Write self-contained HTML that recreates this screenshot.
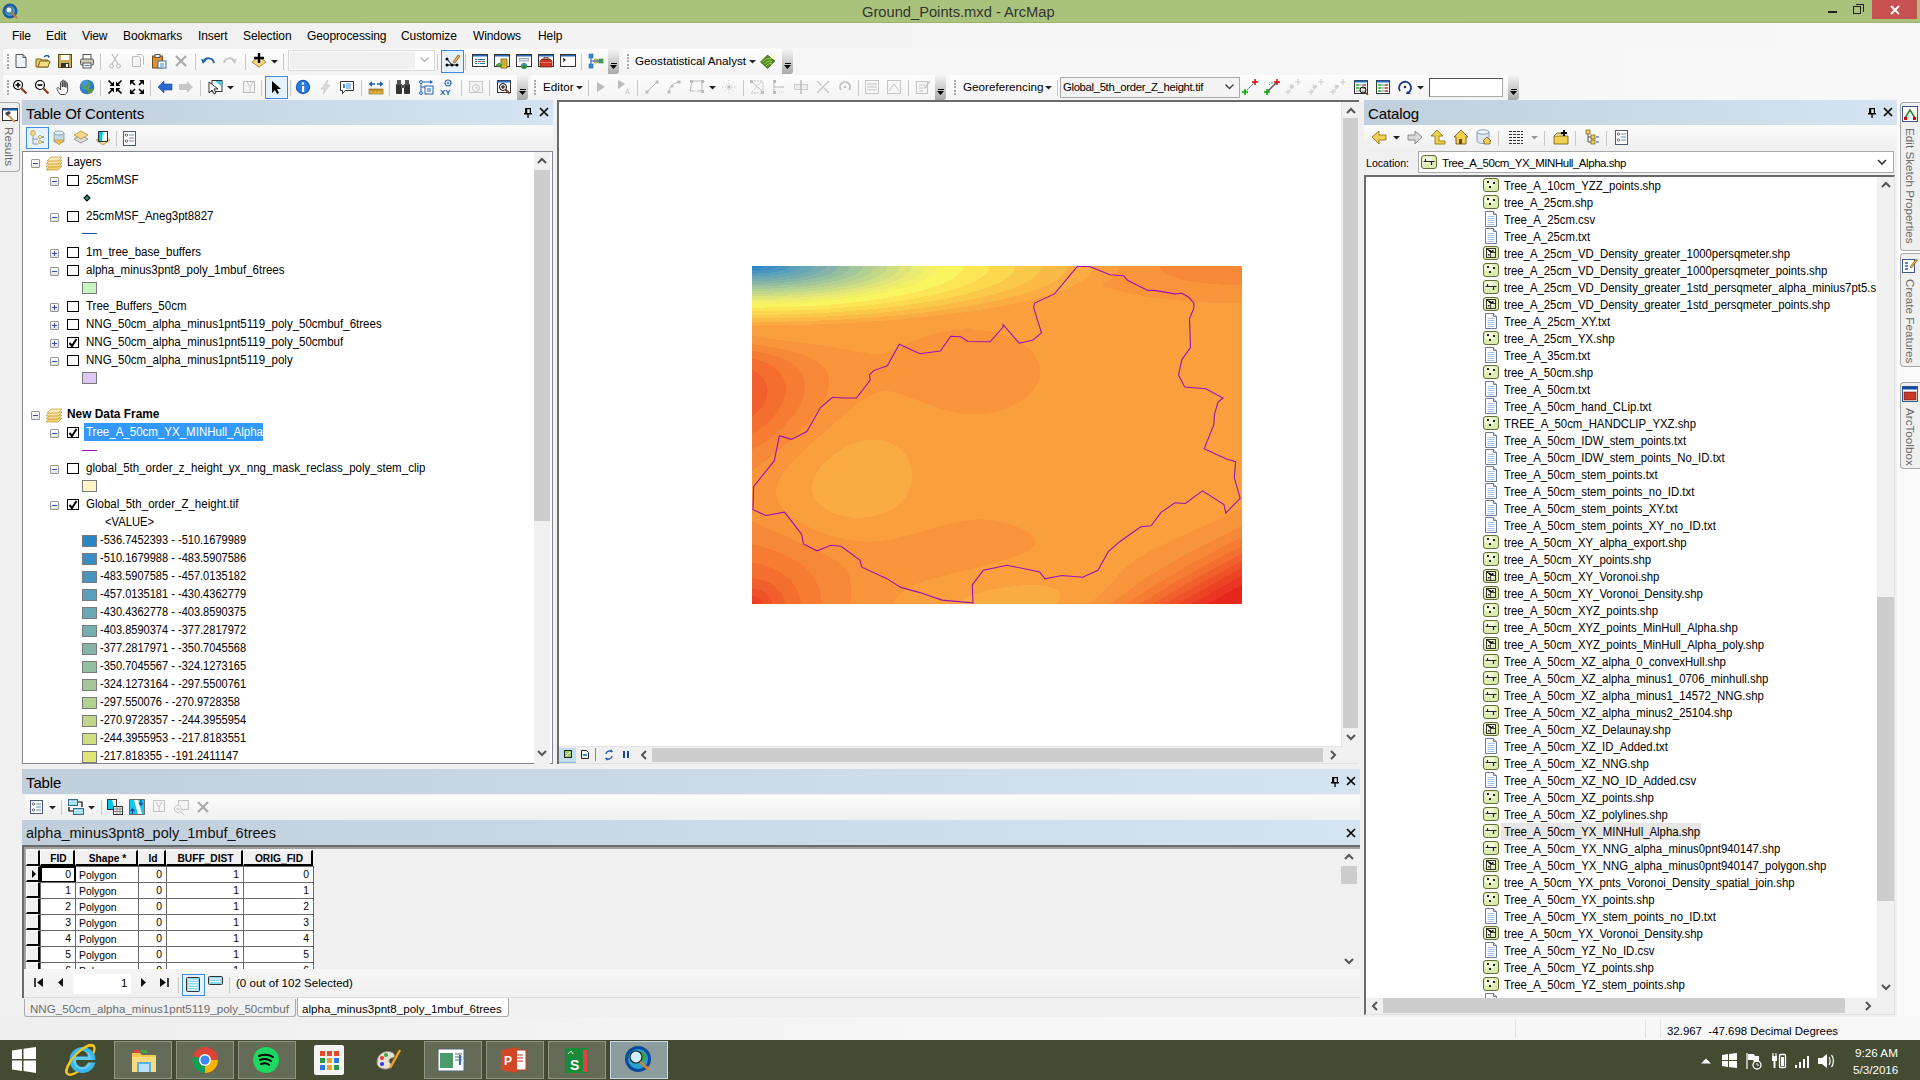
<!DOCTYPE html><html><head><meta charset="utf-8"><style>

*{margin:0;padding:0;box-sizing:border-box}
html,body{width:1920px;height:1080px;overflow:hidden;background:#f0f0f0;font-family:"Liberation Sans", sans-serif;position:relative}
div{position:absolute}
.t{white-space:pre;line-height:1;}

</style></head><body>
<div style="left:0px;top:0px;width:1920px;height:23px;background:#aac37c;border-bottom:1px solid #9db46f"></div>
<div class="t" style="left:862px;top:5px;font-size:14.7px;color:#333;">Ground_Points.mxd - ArcMap</div>
<div style="left:1828px;top:11px;width:9px;height:2px;background:#222"></div>
<div style="left:1853px;top:6px;width:8px;height:8px;border:1.5px solid #222"></div>
<div style="left:1856px;top:4px;width:8px;height:8px;border-top:1.5px solid #222;border-right:1.5px solid #222"></div>
<div style="left:1872px;top:0px;width:45px;height:19px;background:#c75050"></div>
<svg style="position:absolute;left:1890px;top:5px" width="10" height="10"><path d="M1 1L9 9M9 1L1 9" stroke="#fff" stroke-width="1.8"/></svg>
<svg style="position:absolute;left:2px;top:3px" width="17" height="17"><circle cx="8" cy="8" r="7.5" fill="#1a5ea0"/><circle cx="8" cy="8" r="5" fill="#3ea0c8"/><circle cx="7" cy="7" r="3.2" fill="#d9f0fb" stroke="#333" stroke-width="0.8"/><path d="M9.5 9.5L15 15" stroke="#c9713a" stroke-width="2"/></svg>
<div style="left:0px;top:23px;width:1920px;height:25px;background:linear-gradient(90deg,#efefef,#f4f4f4 40%,#f8f8f8)"></div>
<div class="t" style="left:12px;top:29.6px;font-size:12px;color:#000;letter-spacing:-0.1px">File</div>
<div class="t" style="left:46px;top:29.6px;font-size:12px;color:#000;letter-spacing:-0.1px">Edit</div>
<div class="t" style="left:82px;top:29.6px;font-size:12px;color:#000;letter-spacing:-0.1px">View</div>
<div class="t" style="left:123px;top:29.6px;font-size:12px;color:#000;letter-spacing:-0.1px">Bookmarks</div>
<div class="t" style="left:198px;top:29.6px;font-size:12px;color:#000;letter-spacing:-0.1px">Insert</div>
<div class="t" style="left:243px;top:29.6px;font-size:12px;color:#000;letter-spacing:-0.1px">Selection</div>
<div class="t" style="left:307px;top:29.6px;font-size:12px;color:#000;letter-spacing:-0.1px">Geoprocessing</div>
<div class="t" style="left:401px;top:29.6px;font-size:12px;color:#000;letter-spacing:-0.1px">Customize</div>
<div class="t" style="left:473px;top:29.6px;font-size:12px;color:#000;letter-spacing:-0.1px">Windows</div>
<div class="t" style="left:538px;top:29.6px;font-size:12px;color:#000;letter-spacing:-0.1px">Help</div>
<div style="left:0px;top:48px;width:1920px;height:53px;background:linear-gradient(90deg,#eeeeee,#f6f6f6 40%,#f8f8f8)"></div>
<div style="left:3px;top:49px;width:605px;height:25px;background:linear-gradient(#fdfdfd,#f3f3f3);border-radius:3px 0 0 3px"></div>
<div style="left:7px;top:54.0px;width:2px;height:2px;background:#a8a8a8"></div>
<div style="left:7px;top:57.2px;width:2px;height:2px;background:#a8a8a8"></div>
<div style="left:7px;top:60.4px;width:2px;height:2px;background:#a8a8a8"></div>
<div style="left:7px;top:63.6px;width:2px;height:2px;background:#a8a8a8"></div>
<div style="left:7px;top:66.8px;width:2px;height:2px;background:#a8a8a8"></div>
<div style="left:608px;top:49px;width:11px;height:25px;background:linear-gradient(#f4f4f4,#cfcfcf 50%,#a9a9a9);border-radius:0 3px 3px 0"></div>
<div style="left:611px;top:63px;width:6px;height:1px;background:#000"></div>
<svg style="position:absolute;left:610px;top:65px" width="7" height="5"><path d="M0 0h7l-3.5 4z" fill="#000"/></svg>
<svg style="position:absolute;left:13px;top:53px" width="16" height="16" viewBox="0 0 16 16"><path d="M3 1.5h7l3 3v10H3z" fill="#eef4fb" stroke="#555"/><path d="M10 1.5v3h3" fill="none" stroke="#555"/></svg>
<svg style="position:absolute;left:35px;top:53px" width="16" height="16" viewBox="0 0 16 16"><path d="M1 6h5l1 1h6v7H1z" fill="#e8c95a" stroke="#7a6320"/><path d="M3 14l2-6h10l-2 6z" fill="#f3dc84" stroke="#7a6320"/><path d="M9 4c2-2 4-2 5 0" stroke="#1f5fb0" stroke-width="1.5" fill="none"/><path d="M13 2l2 2-2 1z" fill="#1f5fb0"/></svg>
<svg style="position:absolute;left:57px;top:53px" width="16" height="16" viewBox="0 0 16 16"><rect x="1.5" y="1.5" width="13" height="13" fill="#c9ae55" stroke="#5e4d18"/><rect x="4" y="2" width="8" height="5" fill="#fff"/><rect x="4" y="10" width="8" height="4.5" fill="#333"/><rect x="9" y="11" width="2" height="3" fill="#fff"/></svg>
<svg style="position:absolute;left:79px;top:53px" width="16" height="16" viewBox="0 0 16 16"><rect x="4" y="1.5" width="8" height="5" fill="#fff" stroke="#555"/><rect x="1.5" y="6" width="13" height="6" rx="1.5" fill="#cfcab2" stroke="#555"/><rect x="4" y="10" width="8" height="5" fill="#fff" stroke="#555"/><path d="M5.5 12.5h5" stroke="#3a8ad6"/></svg>
<svg style="position:absolute;left:107px;top:53px" width="16" height="16" viewBox="0 0 16 16"><path d="M5 1l6 10M11 1L5 11" stroke="#bbb" stroke-width="1.2"/><circle cx="4.5" cy="13" r="2" fill="none" stroke="#bbb"/><circle cx="11.5" cy="13" r="2" fill="none" stroke="#bbb"/></svg>
<svg style="position:absolute;left:130px;top:53px" width="16" height="16" viewBox="0 0 16 16"><path d="M2.5 3.5h6l2 2v8h-8z" fill="#f4f4f4" stroke="#bbb"/><path d="M6.5 1.5h5l2 2v8" fill="none" stroke="#bbb"/></svg>
<svg style="position:absolute;left:151px;top:53px" width="16" height="16" viewBox="0 0 16 16"><rect x="1.5" y="3" width="10" height="12" fill="#d8903a" stroke="#7a4a10"/><rect x="4" y="1.5" width="5" height="3" fill="#eee" stroke="#555"/><rect x="7" y="8" width="8" height="7" fill="#fff" stroke="#3a6aa0"/><path d="M9 11h4M9 13h4" stroke="#3a8ad6"/></svg>
<svg style="position:absolute;left:173px;top:53px" width="16" height="16" viewBox="0 0 16 16"><path d="M3 3l10 10M13 3L3 13" stroke="#aaa" stroke-width="2.2"/></svg>
<svg style="position:absolute;left:200px;top:53px" width="16" height="16" viewBox="0 0 16 16"><path d="M4 9c1-5 9-5 10 1" stroke="#1f5fb0" stroke-width="2" fill="none"/><path d="M1 6l5 1-3 4z" fill="#1f5fb0"/></svg>
<svg style="position:absolute;left:222px;top:53px" width="16" height="16" viewBox="0 0 16 16"><path d="M12 9c-1-5-9-5-10 1" stroke="#c8c8c8" stroke-width="2" fill="none"/><path d="M15 6l-5 1 3 4z" fill="#c8c8c8"/></svg>
<svg style="position:absolute;left:251px;top:53px" width="16" height="16" viewBox="0 0 16 16"><path d="M8 4l7 5-7 5-7-5z" fill="#f5d889" stroke="#b08a2a"/><path d="M8 0v10M3 5h10" stroke="#000" stroke-width="2.4"/></svg>
<svg style="position:absolute;left:271px;top:60px" width="7" height="4"><path d="M0 0h7l-3.5 3.5z" fill="#222"/></svg>
<div style="left:100px;top:54px;width:1px;height:16px;background:#c8c8c8"></div>
<div style="left:195px;top:54px;width:1px;height:16px;background:#c8c8c8"></div>
<div style="left:245px;top:54px;width:1px;height:16px;background:#c8c8c8"></div>
<div style="left:283px;top:54px;width:1px;height:16px;background:#c8c8c8"></div>
<div style="left:437px;top:54px;width:1px;height:16px;background:#c8c8c8"></div>
<div style="left:465px;top:54px;width:1px;height:16px;background:#c8c8c8"></div>
<div style="left:581px;top:54px;width:1px;height:16px;background:#c8c8c8"></div>
<div style="left:288px;top:50px;width:147px;height:21px;background:#fff;border:1px solid #d8d8d8"></div>
<div style="left:290px;top:52px;width:125px;height:17px;background:#f0f0f0"></div>
<svg style="position:absolute;left:420px;top:57px" width="9" height="6"><path d="M0.5 0.5l4 4 4-4" stroke="#aaa" fill="none" stroke-width="1.2"/></svg>
<div style="left:441px;top:50px;width:23px;height:23px;background:#e5f1fb;border:1px solid #3c8de0"></div>
<svg style="position:absolute;left:444px;top:53px" width="16" height="16" viewBox="0 0 16 16"><circle cx="3" cy="12" r="1.5" fill="#000"/><circle cx="8" cy="12" r="1.5" fill="#000"/><circle cx="13" cy="12" r="1.5" fill="#000"/><circle cx="3" cy="6" r="1.5" fill="#000"/><path d="M3 6l5 6M3 12h10" stroke="#000"/><path d="M9 9l5-7 2 1-5 7z" fill="#f0b030" stroke="#7a4a10" stroke-width=".7"/></svg>
<svg style="position:absolute;left:472px;top:53px" width="16" height="16" viewBox="0 0 16 16"><rect x="0.5" y="1.5" width="15" height="12" fill="#fff" stroke="#333"/><rect x="1" y="2" width="14" height="1.5" fill="#2a6ac0"/><path d="M3 6.5h2M3 8.5h2M3 10.5h2" stroke="#2a6ac0"/><path d="M6 6.5h7M8 10.5h5" stroke="#2a6ac0"/><path d="M6 8.5h3" stroke="#e03030"/><path d="M10 8.5h3M6 10.5h1" stroke="#3aa03a"/></svg>
<svg style="position:absolute;left:494px;top:53px" width="16" height="16" viewBox="0 0 16 16"><rect x="0.5" y="1.5" width="15" height="12" fill="#fff" stroke="#333"/><rect x="1" y="2" width="14" height="1.5" fill="#2a6ac0"/><path d="M7 6h6v9H7z" fill="#e8c838" stroke="#6a5a10" stroke-width=".8"/><path d="M8 8h4M8 10h4M8 12h4" stroke="#8a7a20" stroke-width=".6"/><path d="M2 12l3-2 3 2-3 2z" fill="#5ab03a" stroke="#2a6a1a" stroke-width=".6"/></svg>
<svg style="position:absolute;left:516px;top:53px" width="16" height="16" viewBox="0 0 16 16"><rect x="0.5" y="1.5" width="15" height="12" fill="#fff" stroke="#333"/><rect x="1" y="2" width="14" height="1.5" fill="#2a6ac0"/><rect x="3.5" y="5.5" width="9" height="2.5" fill="#dde6f0" stroke="#8a9ab0" stroke-width=".8"/><circle cx="8" cy="13" r="3" fill="#2a8a3a"/><path d="M6 12c1-1 3-1 4 1" stroke="#3a9ae0" stroke-width="1.2" fill="none"/></svg>
<svg style="position:absolute;left:538px;top:53px" width="16" height="16" viewBox="0 0 16 16"><rect x="0.5" y="1.5" width="15" height="12" fill="#fff" stroke="#333"/><rect x="1" y="2" width="14" height="1.5" fill="#2a6ac0"/><path d="M2 8l2-2h8l2 2v6H2z" fill="#c8382a" stroke="#6a1a10" stroke-width=".7"/><path d="M2 9.5h12" stroke="#e87a6a" stroke-width=".8"/><rect x="6" y="4.5" width="4" height="2" fill="none" stroke="#6a1a10" stroke-width=".7"/></svg>
<svg style="position:absolute;left:560px;top:53px" width="16" height="16" viewBox="0 0 16 16"><rect x="0.5" y="1.5" width="15" height="12" fill="#fff" stroke="#333"/><rect x="1" y="2" width="14" height="1.5" fill="#2a6ac0"/><path d="M3 5.5l2 1.5-2 1.5" stroke="#000" fill="none" stroke-width="1.1"/></svg>
<svg style="position:absolute;left:588px;top:53px" width="16" height="16" viewBox="0 0 16 16"><rect x="1" y="1" width="4" height="4" fill="#3a8ad6" stroke="#1f5fb0" stroke-width=".6"/><rect x="1" y="11" width="4" height="4" fill="#3a8ad6" stroke="#1f5fb0" stroke-width=".6"/><circle cx="8" cy="8" r="2" fill="#f0d050" stroke="#7a6320" stroke-width=".6"/><rect x="11" y="6" width="4" height="4" fill="#5aba4a" stroke="#2a6a1a" stroke-width=".6"/><path d="M3 5v6M3 8h11" stroke="#1f5fb0"/></svg>
<div style="left:623px;top:49px;width:159px;height:25px;background:linear-gradient(#fdfdfd,#f3f3f3);border-radius:3px 0 0 3px"></div>
<div style="left:627px;top:54.0px;width:2px;height:2px;background:#a8a8a8"></div>
<div style="left:627px;top:57.2px;width:2px;height:2px;background:#a8a8a8"></div>
<div style="left:627px;top:60.4px;width:2px;height:2px;background:#a8a8a8"></div>
<div style="left:627px;top:63.6px;width:2px;height:2px;background:#a8a8a8"></div>
<div style="left:627px;top:66.8px;width:2px;height:2px;background:#a8a8a8"></div>
<div style="left:782px;top:49px;width:11px;height:25px;background:linear-gradient(#f4f4f4,#cfcfcf 50%,#a9a9a9);border-radius:0 3px 3px 0"></div>
<div style="left:785px;top:63px;width:6px;height:1px;background:#000"></div>
<svg style="position:absolute;left:784px;top:65px" width="7" height="5"><path d="M0 0h7l-3.5 4z" fill="#000"/></svg>
<div class="t" style="left:635px;top:55px;font-size:11.7px;color:#000;">Geostatistical Analyst</div>
<svg style="position:absolute;left:749px;top:60px" width="7" height="4"><path d="M0 0h7l-3.5 3.5z" fill="#222"/></svg>
<svg style="position:absolute;left:760px;top:53px" width="16" height="16" viewBox="0 0 16 16"><path d="M0.5 9l7-7 7.5 6-7.5 7.5z" fill="#4a8a1a" stroke="#2a5a10" stroke-width=".6"/><path d="M3 9c2-3 5-4 8-3M4.5 11c2-2.5 4.5-3.5 7.5-2.5M6 13c1.5-2 3.5-3 6-2" stroke="#b8e070" stroke-width=".9" fill="none"/><circle cx="13" cy="3" r="2.6" fill="#fff7b0"/><path d="M13 0v6M10 3h6" stroke="#fff" stroke-width=".8"/></svg>
<div style="left:3px;top:75px;width:514px;height:25px;background:linear-gradient(#fdfdfd,#f3f3f3);border-radius:3px 0 0 3px"></div>
<div style="left:7px;top:80.0px;width:2px;height:2px;background:#a8a8a8"></div>
<div style="left:7px;top:83.2px;width:2px;height:2px;background:#a8a8a8"></div>
<div style="left:7px;top:86.4px;width:2px;height:2px;background:#a8a8a8"></div>
<div style="left:7px;top:89.6px;width:2px;height:2px;background:#a8a8a8"></div>
<div style="left:7px;top:92.8px;width:2px;height:2px;background:#a8a8a8"></div>
<div style="left:517px;top:75px;width:11px;height:25px;background:linear-gradient(#f4f4f4,#cfcfcf 50%,#a9a9a9);border-radius:0 3px 3px 0"></div>
<div style="left:520px;top:89px;width:6px;height:1px;background:#000"></div>
<svg style="position:absolute;left:519px;top:91px" width="7" height="5"><path d="M0 0h7l-3.5 4z" fill="#000"/></svg>
<svg style="position:absolute;left:12px;top:79px" width="16" height="16" viewBox="0 0 16 16"><circle cx="6" cy="6" r="4.5" fill="#fff" stroke="#000" stroke-width="1.2"/><path d="M3.5 6h5M6 3.5v5" stroke="#000" stroke-width="1.6"/><path d="M9.5 9.5l5 5" stroke="#8a3a1a" stroke-width="2.2"/></svg>
<svg style="position:absolute;left:34px;top:79px" width="16" height="16" viewBox="0 0 16 16"><circle cx="6" cy="6" r="4.5" fill="#fff" stroke="#000" stroke-width="1.2"/><path d="M3.5 6h5" stroke="#000" stroke-width="1.6"/><path d="M9.5 9.5l5 5" stroke="#8a3a1a" stroke-width="2.2"/></svg>
<svg style="position:absolute;left:56px;top:79px" width="16" height="16" viewBox="0 0 16 16"><path d="M4.5 15.5c-2-2-3.5-4.5-3.5-6 0-1 1-1.2 1.8-.5l1.7 1.8V3.5c0-1.2 1.8-1.2 1.8 0V8V2c0-1.2 1.8-1.2 1.8 0v6V2.8c0-1.2 1.8-1.2 1.8 0V8.5V4.5c0-1.2 1.7-1.2 1.7 0v6.5c0 2.5-1.5 4.5-3.5 4.5z" fill="#fff" stroke="#333" stroke-width=".9"/></svg>
<svg style="position:absolute;left:79px;top:79px" width="16" height="16" viewBox="0 0 16 16"><circle cx="8" cy="8" r="7.3" fill="#2a78c8"/><circle cx="6.5" cy="6" r="5" fill="#5aa8e8" opacity=".6"/><path d="M8.5 2.5c2 .5 3 2 2.5 3.5-.5 1-2 1-2 2.5s1.5 2 2.5 1.5 2.5-1 3 0c-.5 2.5-2.5 4.5-5 5-1-1-.5-3-1.5-4s-2.5-1-2.5-2.5 2-2 2.5-3c.3-.8-.5-1.8 0-2.5z" fill="#5a9e3a"/><path d="M2 6c1 0 2 1 1.5 2.5" stroke="#5a9e3a" stroke-width="1.5" fill="none"/></svg>
<svg style="position:absolute;left:107px;top:79px" width="16" height="16" viewBox="0 0 16 16"><path d="M1.5 1.5L5 5M14.5 1.5L11 5M1.5 14.5L5 11M14.5 14.5L11 11" stroke="#000" stroke-width="1.7"/><path d="M7 7V2.5L2.5 7zM9 7V2.5L13.5 7zM7 9H2.5L7 13.5zM9 9h4.5L9 13.5z" fill="#000"/></svg>
<svg style="position:absolute;left:129px;top:79px" width="16" height="16" viewBox="0 0 16 16"><path d="M6 6L3 3M10 6l3-3M6 10l-3 3M10 10l3 3" stroke="#000" stroke-width="1.7"/><path d="M1 1h5L1 6zM15 1h-5l5 5zM1 15v-5l5 5zM15 15v-5l-5 5z" fill="#000"/></svg>
<svg style="position:absolute;left:157px;top:79px" width="16" height="16" viewBox="0 0 16 16"><path d="M1 8l6-6v3h8v6H7v3z" fill="#2a6ad0" stroke="#1a4a9a" stroke-width=".6"/></svg>
<svg style="position:absolute;left:178px;top:79px" width="16" height="16" viewBox="0 0 16 16"><path d="M15 8l-6-6v3H1v6h8v3z" fill="#c8c8c8"/></svg>
<svg style="position:absolute;left:207px;top:79px" width="16" height="16" viewBox="0 0 16 16"><rect x="5" y="1.5" width="10" height="11" fill="#fff" stroke="#333"/><path d="M8 2l7 0 0 6z" fill="#3ac8e8"/><path d="M2 3l0 11 3-3 2 4 2-1-2-4h4z" fill="#fff" stroke="#000" stroke-width=".8"/></svg>
<svg style="position:absolute;left:241px;top:79px" width="16" height="16" viewBox="0 0 16 16"><rect x="2.5" y="2.5" width="11" height="11" fill="#f4f4f4" stroke="#bbb"/><path d="M6 3l3 5 3-5M9 8v5" stroke="#ccc" fill="none"/></svg>
<svg style="position:absolute;left:227px;top:86px" width="7" height="4"><path d="M0 0h7l-3.5 3.5z" fill="#222"/></svg>
<div style="left:265px;top:76px;width:23px;height:23px;background:#e5f1fb;border:1px solid #3c8de0"></div>
<svg style="position:absolute;left:268px;top:79px" width="16" height="16" viewBox="0 0 16 16"><path d="M4 2v12l3-3 2 4 2-1-2-4h4z" fill="#000"/></svg>
<svg style="position:absolute;left:295px;top:79px" width="16" height="16" viewBox="0 0 16 16"><circle cx="8" cy="8" r="7.2" fill="#1a5ac0"/><circle cx="8" cy="8" r="6" fill="#2a7ae0"/><rect x="7" y="7" width="2.2" height="6" fill="#fff"/><circle cx="8" cy="4.5" r="1.2" fill="#fff"/></svg>
<svg style="position:absolute;left:318px;top:79px" width="16" height="16" viewBox="0 0 16 16"><path d="M10 1L3 10h4l-2 5 7-9H8z" fill="#ddd" stroke="#bbb" stroke-width=".6"/></svg>
<svg style="position:absolute;left:339px;top:79px" width="16" height="16" viewBox="0 0 16 16"><path d="M1.5 2.5h13v9h-8l-3 3v-3h-2z" fill="#fff" stroke="#333"/><path d="M4 5h2v4H4z" fill="#3a8ad6"/><path d="M7 5h5M7 7h5M7 9h5" stroke="#3a8ad6"/></svg>
<svg style="position:absolute;left:368px;top:79px" width="16" height="16" viewBox="0 0 16 16"><rect x="1" y="10" width="14" height="5" fill="#e8b040" stroke="#7a5a10" stroke-width=".6"/><path d="M3 10v2M5 10v3M7 10v2M9 10v3M11 10v2M13 10v3" stroke="#7a5a10" stroke-width=".7"/><path d="M1 5h6M9 5h6" stroke="#1f5fb0" stroke-width="1.5"/><path d="M1 5l3-3v6zM15 5l-3-3v6z" fill="#1f5fb0"/></svg>
<svg style="position:absolute;left:395px;top:79px" width="16" height="16" viewBox="0 0 16 16"><rect x="1" y="5" width="6" height="10" rx="1" fill="#333"/><rect x="9" y="5" width="6" height="10" rx="1" fill="#333"/><rect x="2" y="1" width="4" height="5" fill="#555"/><rect x="10" y="1" width="4" height="5" fill="#555"/><rect x="6" y="6" width="4" height="3" fill="#555"/></svg>
<svg style="position:absolute;left:418px;top:79px" width="16" height="16" viewBox="0 0 16 16"><circle cx="3" cy="3" r="1.5" fill="none" stroke="#1f5fb0"/><circle cx="3" cy="14" r="1.5" fill="none" stroke="#1f5fb0"/><path d="M3 4.5v8M3 8h4M5 3h7" stroke="#1f5fb0"/><path d="M12 1l3 2-3 2z" fill="#1f5fb0"/><rect x="7" y="7" width="8" height="8" fill="#fff" stroke="#1f5fb0"/><path d="M9 10h4M9 12h4" stroke="#1f5fb0"/></svg>
<svg style="position:absolute;left:440px;top:79px" width="16" height="16" viewBox="0 0 16 16"><circle cx="8" cy="4" r="3" fill="none" stroke="#1f5fb0" stroke-width="1.2"/><circle cx="8" cy="4" r="1" fill="#1f5fb0"/><text x="0" y="15.5" font-family="Liberation Sans" font-weight="bold" font-size="8" fill="#1f5fb0">XY</text></svg>
<svg style="position:absolute;left:468px;top:79px" width="16" height="16" viewBox="0 0 16 16"><rect x="1.5" y="2.5" width="13" height="11" fill="#f4f4f4" stroke="#c8c8c8"/><circle cx="8" cy="9" r="3.5" fill="none" stroke="#c8c8c8"/><path d="M8 7v2h2" stroke="#c8c8c8" fill="none"/></svg>
<svg style="position:absolute;left:496px;top:79px" width="16" height="16" viewBox="0 0 16 16"><rect x="1.5" y="1.5" width="13" height="12" fill="#fff" stroke="#333"/><rect x="1.5" y="1.5" width="13" height="2" fill="#2a6ac0"/><circle cx="7" cy="8" r="3.5" fill="#fff" stroke="#000"/><path d="M5 8h4M7 6v4" stroke="#000"/><path d="M9.5 10.5l4 4" stroke="#8a3a1a" stroke-width="2"/></svg>
<div style="left:100px;top:80px;width:1px;height:16px;background:#c8c8c8"></div>
<div style="left:150px;top:80px;width:1px;height:16px;background:#c8c8c8"></div>
<div style="left:200px;top:80px;width:1px;height:16px;background:#c8c8c8"></div>
<div style="left:261px;top:80px;width:1px;height:16px;background:#c8c8c8"></div>
<div style="left:290px;top:80px;width:1px;height:16px;background:#c8c8c8"></div>
<div style="left:361px;top:80px;width:1px;height:16px;background:#c8c8c8"></div>
<div style="left:389px;top:80px;width:1px;height:16px;background:#c8c8c8"></div>
<div style="left:461px;top:80px;width:1px;height:16px;background:#c8c8c8"></div>
<div style="left:489px;top:80px;width:1px;height:16px;background:#c8c8c8"></div>
<div style="left:530px;top:75px;width:405px;height:25px;background:linear-gradient(#fdfdfd,#f3f3f3);border-radius:3px 0 0 3px"></div>
<div style="left:534px;top:80.0px;width:2px;height:2px;background:#a8a8a8"></div>
<div style="left:534px;top:83.2px;width:2px;height:2px;background:#a8a8a8"></div>
<div style="left:534px;top:86.4px;width:2px;height:2px;background:#a8a8a8"></div>
<div style="left:534px;top:89.6px;width:2px;height:2px;background:#a8a8a8"></div>
<div style="left:534px;top:92.8px;width:2px;height:2px;background:#a8a8a8"></div>
<div style="left:935px;top:75px;width:11px;height:25px;background:linear-gradient(#f4f4f4,#cfcfcf 50%,#a9a9a9);border-radius:0 3px 3px 0"></div>
<div style="left:938px;top:89px;width:6px;height:1px;background:#000"></div>
<svg style="position:absolute;left:937px;top:91px" width="7" height="5"><path d="M0 0h7l-3.5 4z" fill="#000"/></svg>
<div class="t" style="left:543px;top:81px;font-size:11.7px;color:#000;">Editor</div>
<svg style="position:absolute;left:576px;top:86px" width="7" height="4"><path d="M0 0h7l-3.5 3.5z" fill="#222"/></svg>
<svg style="position:absolute;left:593px;top:79px" width="16" height="16" viewBox="0 0 16 16"><path d="M4 3l0 10 8-5z" fill="#bbb"/></svg>
<svg style="position:absolute;left:616px;top:79px" width="16" height="16" viewBox="0 0 16 16"><path d="M2 1l0 9 7-5z" fill="#bbb"/><text x="9" y="15" font-family="Liberation Sans" font-size="7" fill="#bbb">A</text></svg>
<svg style="position:absolute;left:644px;top:79px" width="16" height="16" viewBox="0 0 16 16"><path d="M3 13L13 3" stroke="#bbb"/><rect x="1.5" y="11.5" width="3" height="3" fill="#bbb"/><rect x="11.5" y="1.5" width="3" height="3" fill="#bbb"/></svg>
<svg style="position:absolute;left:666px;top:79px" width="16" height="16" viewBox="0 0 16 16"><path d="M3 13c0-5 4-9 10-10" stroke="#bbb" fill="none"/><rect x="1.5" y="11.5" width="3" height="3" fill="#bbb"/><rect x="11.5" y="1.5" width="3" height="3" fill="#bbb"/><rect x="5" y="6" width="2.5" height="2.5" fill="#bbb"/></svg>
<svg style="position:absolute;left:689px;top:79px" width="16" height="16" viewBox="0 0 16 16"><path d="M3 2h10v10H8M3 2L1 12h5" stroke="#bbb" fill="none"/><rect x="1" y="1" width="3" height="3" fill="#bbb"/><rect x="12" y="1" width="3" height="3" fill="#bbb"/><rect x="12" y="11" width="3" height="3" fill="#bbb"/></svg>
<svg style="position:absolute;left:721px;top:79px" width="16" height="16" viewBox="0 0 16 16"><path d="M8 1v14M1 8h14M3 3l10 10M13 3L3 13" stroke="#ccc" stroke-dasharray="1.5 1.5"/><rect x="6.5" y="6.5" width="3" height="3" fill="#bbb"/></svg>
<svg style="position:absolute;left:749px;top:79px" width="16" height="16" viewBox="0 0 16 16"><path d="M2 2h11L2 14h12V2" stroke="#bbb" fill="none" stroke-dasharray="2 1"/><path d="M2 2L14 13" stroke="#bbb"/><rect x="1" y="1" width="3" height="3" fill="#bbb"/><rect x="12" y="12" width="3" height="3" fill="#bbb"/></svg>
<svg style="position:absolute;left:771px;top:79px" width="16" height="16" viewBox="0 0 16 16"><path d="M3 1v14M3 8h10" stroke="#bbb"/><rect x="2" y="1" width="3" height="3" fill="#bbb"/><rect x="2" y="12" width="3" height="3" fill="#bbb"/><path d="M8 8h6M8 13h6" stroke="#ccc" stroke-dasharray="1 1"/></svg>
<svg style="position:absolute;left:793px;top:79px" width="16" height="16" viewBox="0 0 16 16"><rect x="1.5" y="5.5" width="13" height="5" fill="#ececec" stroke="#ccc"/><path d="M8 1v14" stroke="#bbb" stroke-width="1.5"/></svg>
<svg style="position:absolute;left:815px;top:79px" width="16" height="16" viewBox="0 0 16 16"><path d="M2 14L14 2M2 2l5 5M9 9l5 5" stroke="#c4c4c4" stroke-width="1.2"/></svg>
<svg style="position:absolute;left:837px;top:79px" width="16" height="16" viewBox="0 0 16 16"><path d="M4 11a5 5 0 1 1 8 0" stroke="#c4c4c4" stroke-width="2" fill="none"/><circle cx="8" cy="8" r="1.3" fill="#c4c4c4"/></svg>
<svg style="position:absolute;left:864px;top:79px" width="16" height="16" viewBox="0 0 16 16"><rect x="1.5" y="1.5" width="13" height="13" fill="#f6f6f6" stroke="#c4c4c4"/><path d="M3 5h10M3 8h10M3 11h10" stroke="#c4c4c4"/></svg>
<svg style="position:absolute;left:886px;top:79px" width="16" height="16" viewBox="0 0 16 16"><rect x="1.5" y="1.5" width="13" height="13" fill="#f6f6f6" stroke="#c4c4c4"/><path d="M3 12l5-7 5 7" stroke="#c4c4c4" fill="none"/></svg>
<svg style="position:absolute;left:915px;top:79px" width="16" height="16" viewBox="0 0 16 16"><rect x="1.5" y="2.5" width="11" height="12" fill="#f6f6f6" stroke="#c4c4c4"/><path d="M4 6h6M4 9h6M4 12h4" stroke="#c4c4c4"/><path d="M10 9l5-7" stroke="#c4c4c4" stroke-width="1.5"/></svg>
<svg style="position:absolute;left:709px;top:86px" width="7" height="4"><path d="M0 0h7l-3.5 3.5z" fill="#222"/></svg>
<div style="left:588px;top:80px;width:1px;height:16px;background:#c8c8c8"></div>
<div style="left:637px;top:80px;width:1px;height:16px;background:#c8c8c8"></div>
<div style="left:743px;top:80px;width:1px;height:16px;background:#c8c8c8"></div>
<div style="left:858px;top:80px;width:1px;height:16px;background:#c8c8c8"></div>
<div style="left:908px;top:80px;width:1px;height:16px;background:#c8c8c8"></div>
<div style="left:950px;top:75px;width:558px;height:25px;background:linear-gradient(#fdfdfd,#f3f3f3);border-radius:3px 0 0 3px"></div>
<div style="left:954px;top:80.0px;width:2px;height:2px;background:#a8a8a8"></div>
<div style="left:954px;top:83.2px;width:2px;height:2px;background:#a8a8a8"></div>
<div style="left:954px;top:86.4px;width:2px;height:2px;background:#a8a8a8"></div>
<div style="left:954px;top:89.6px;width:2px;height:2px;background:#a8a8a8"></div>
<div style="left:954px;top:92.8px;width:2px;height:2px;background:#a8a8a8"></div>
<div style="left:1508px;top:75px;width:11px;height:25px;background:linear-gradient(#f4f4f4,#cfcfcf 50%,#a9a9a9);border-radius:0 3px 3px 0"></div>
<div style="left:1511px;top:89px;width:6px;height:1px;background:#000"></div>
<svg style="position:absolute;left:1510px;top:91px" width="7" height="5"><path d="M0 0h7l-3.5 4z" fill="#000"/></svg>
<div class="t" style="left:963px;top:81px;font-size:11.7px;color:#000;">Georeferencing</div>
<svg style="position:absolute;left:1045px;top:86px" width="7" height="4"><path d="M0 0h7l-3.5 3.5z" fill="#222"/></svg>
<div style="left:1057px;top:80px;width:1px;height:16px;background:#c8c8c8"></div>
<div style="left:1060px;top:77px;width:180px;height:21px;background:#f4f4f4;border:1px solid #a8a8a8"></div>
<div class="t" style="left:1063px;top:82px;font-size:11.35px;color:#000;letter-spacing:-0.35px">Global_5th_order_Z_height.tif</div>
<svg style="position:absolute;left:1225px;top:84px" width="9" height="6"><path d="M0.5 0.5l4 4 4-4" stroke="#444" fill="none" stroke-width="1.4"/></svg>
<svg style="position:absolute;left:1242px;top:79px" width="16" height="16" viewBox="0 0 16 16"><path d="M3 13L13 3" stroke="#1f5fb0" stroke-dasharray="2 1"/><path d="M0 13h6M3 10v6" stroke="#0a0" stroke-width="1.5"/><path d="M10 3h6M13 0v6" stroke="#e00" stroke-width="1.5"/></svg>
<svg style="position:absolute;left:1264px;top:79px" width="16" height="16" viewBox="0 0 16 16"><path d="M3 13L13 3" stroke="#555" stroke-width="1.5"/><path d="M0 13h6M3 10v6" stroke="#0a0" stroke-width="1.5"/><path d="M10 3h6M13 0v6" stroke="#e00" stroke-width="1.5"/><path d="M5 5l1 1M8 3l0 2" stroke="#3a8ad6"/></svg>
<svg style="position:absolute;left:1285px;top:79px" width="16" height="16" viewBox="0 0 16 16"><path d="M3 13L9 7" stroke="#ccc"/><path d="M0 13h6M3 10v6M10 3h6M13 0v6" stroke="#ccc"/><path d="M5 6l3 3M8 6L5 9" stroke="#ccc" stroke-width="1.5"/></svg>
<svg style="position:absolute;left:1308px;top:79px" width="16" height="16" viewBox="0 0 16 16"><path d="M3 13L9 7" stroke="#ccc"/><path d="M0 13h6M3 10v6M10 3h6M13 0v6" stroke="#ccc"/><path d="M5 6l3 3M8 6L5 9" stroke="#ccc" stroke-width="1.5"/></svg>
<svg style="position:absolute;left:1330px;top:79px" width="16" height="16" viewBox="0 0 16 16"><path d="M3 13L9 7" stroke="#ccc"/><path d="M0 13h6M3 10v6M10 3h6M13 0v6" stroke="#ccc"/><path d="M5 6l3 3M8 6L5 9" stroke="#ccc" stroke-width="1.5"/></svg>
<svg style="position:absolute;left:1353px;top:79px" width="16" height="16" viewBox="0 0 16 16"><rect x="1.5" y="1.5" width="13" height="13" fill="#fff" stroke="#333"/><rect x="1.5" y="1.5" width="13" height="2" fill="#2a6ac0"/><path d="M3 6h10M3 9h10M3 12h10" stroke="#333" stroke-width=".6"/><path d="M3 6h3M3 9h3" stroke="#0a0"/><path d="M10 6h3M10 9h3" stroke="#e00"/><circle cx="10" cy="11" r="3" fill="none" stroke="#000"/><path d="M12 13l3 3" stroke="#8a3a1a" stroke-width="1.5"/></svg>
<svg style="position:absolute;left:1375px;top:79px" width="16" height="16" viewBox="0 0 16 16"><rect x="1.5" y="1.5" width="13" height="13" fill="#fff" stroke="#333"/><rect x="1.5" y="1.5" width="13" height="2" fill="#2a6ac0"/><path d="M3 6h10M3 9h10M3 12h10" stroke="#333" stroke-width=".6"/><path d="M3 6h3M3 9h3M3 12h3" stroke="#0a0"/><path d="M10 6h3M10 9h3M10 12h3" stroke="#e00"/></svg>
<svg style="position:absolute;left:1397px;top:79px" width="16" height="16" viewBox="0 0 16 16"><path d="M3 12a6 6 0 1 1 8 2" stroke="#1a3a8a" stroke-width="1.8" fill="none"/><path d="M10 12l4 3-5 0z" fill="#1a3a8a"/><circle cx="8" cy="8" r="1.2" fill="#222"/></svg>
<svg style="position:absolute;left:1417px;top:86px" width="7" height="4"><path d="M0 0h7l-3.5 3.5z" fill="#222"/></svg>
<div style="left:1429px;top:78px;width:74px;height:19px;background:#fff;border:1px solid #555;border-right-color:#aaa;border-bottom-color:#aaa"></div>
<div style="left:0px;top:102px;width:20px;height:70px;background:#f0f0f0;border:1px solid #a9a9a9;border-left:none;border-radius:0 4px 4px 0"></div>
<svg style="position:absolute;left:2px;top:107px" width="16" height="16" viewBox="0 0 16 16"><rect x="0.5" y="1.5" width="15" height="12" fill="#fff" stroke="#333"/><rect x="0.5" y="1.5" width="15" height="2" fill="#1f5fb0"/><path d="M5 7l8 8" stroke="#c9995a" stroke-width="2"/><path d="M3 6l4-2 2 2-4 3z" fill="#444"/></svg>
<div class="t" style="left:3px;top:127px;font-size:11.7px;color:#6a6a6a;writing-mode:vertical-rl;">Results</div>
<div style="left:22px;top:100px;width:531px;height:25px;background:linear-gradient(90deg,#c1cedc,#d6e3f0)"></div>
<div class="t" style="left:26px;top:106.3px;font-size:15px;color:#000;letter-spacing:-0.12px">Table Of Contents</div>
<svg style="position:absolute;left:539px;top:107px" width="10" height="10"><path d="M1 1L9 9M9 1L1 9" stroke="#000" stroke-width="1.7"/></svg>
<svg style="position:absolute;left:524px;top:108px" width="8" height="10"><rect x="1" y="0" width="6" height="1.2" fill="#000"/><rect x="1" y="0" width="2.2" height="5.5" fill="#000"/><rect x="5.8" y="0" width="1.2" height="5.5" fill="#000"/><rect x="0" y="5" width="8" height="1.5" fill="#000"/><rect x="3.4" y="6" width="1.3" height="4" fill="#000"/></svg>
<div style="left:22px;top:125px;width:531px;height:26px;background:linear-gradient(#fbfbfb,#efefef)"></div>
<div style="left:26px;top:127px;width:23px;height:22px;background:#e5f1fb;border:1px solid #3c8de0"></div>
<svg style="position:absolute;left:29px;top:130px" width="16" height="16" viewBox="0 0 16 16"><circle cx="4" cy="3" r="2.5" fill="#f5d889" stroke="#b08a2a" stroke-width=".6"/><path d="M4 6v8h5M4 9h5" stroke="#89a" fill="none"/><path d="M9 7l2-2 2 2-2 2z M9 12l2-2 2 2-2 2z" fill="#f5d889" stroke="#b08a2a" stroke-width=".6"/><path d="M13 7h2M13 12h2" stroke="#1f5fb0" stroke-width="1.2"/></svg>
<svg style="position:absolute;left:51px;top:130px" width="16" height="16" viewBox="0 0 16 16"><path d="M3 3v8c0 1.5 2.5 2 5 2s5-.5 5-2V3" fill="#c9d6e6" stroke="#8aa"/><ellipse cx="8" cy="3" rx="5" ry="2" fill="#e8eef6" stroke="#8aa"/><path d="M3 10h10l-5 5z" fill="#f0c050" stroke="#b08a2a" stroke-width=".6"/></svg>
<svg style="position:absolute;left:73px;top:130px" width="16" height="16" viewBox="0 0 16 16"><path d="M8 5l7 4-7 4-7-4z" fill="#ddd" stroke="#999"/><path d="M8 1l7 4-7 4-7-4z" fill="#f5d889" stroke="#b08a2a" stroke-width=".7"/></svg>
<svg style="position:absolute;left:95px;top:130px" width="16" height="16" viewBox="0 0 16 16"><path d="M1 10l7-5 7 5-7 5z" fill="#f5d889" stroke="#b08a2a" stroke-width=".7"/><rect x="3.5" y="1.5" width="9" height="10" fill="#fff" stroke="#333"/><path d="M4 2h4l-1 9H4z" fill="#00c8e8"/></svg>
<div style="left:116px;top:131px;width:1px;height:15px;background:#c8c8c8"></div>
<svg style="position:absolute;left:122px;top:130px" width="16" height="16" viewBox="0 0 16 16"><rect x="1.5" y="1.5" width="12" height="14" fill="#fff" stroke="#4a5a7a"/><circle cx="4.5" cy="5" r="1.2" fill="none" stroke="#333" stroke-width=".7"/><circle cx="4.5" cy="11" r="1.2" fill="none" stroke="#333" stroke-width=".7"/><path d="M7 5h5M7 11h5M7 8h5" stroke="#6a8ac0"/></svg>
<div style="left:22px;top:151px;width:531px;height:613px;background:#fff;border:1px solid #828790"></div>
<div style="left:534px;top:152px;width:16px;height:612px;background:#f0f0f0"></div>
<div style="left:534px;top:170px;width:16px;height:351px;background:#cdcdcd"></div>
<svg style="position:absolute;left:537px;top:157px" width="10" height="7"><path d="M1 6l4-4 4 4" stroke="#555" stroke-width="2" fill="none"/></svg>
<svg style="position:absolute;left:537px;top:750px" width="10" height="7"><path d="M1 1l4 4 4-4" stroke="#555" stroke-width="2" fill="none"/></svg>
<div style="left:31px;top:159px;width:9px;height:9px;background:linear-gradient(#fff,#e4e4e4);border:1px solid #969696;border-radius:1px"></div>
<div style="left:33px;top:163px;width:5px;height:1px;background:#3a4ab0"></div>
<svg style="position:absolute;left:46px;top:156px" width="16" height="16" viewBox="0 0 16 16"><path d="M4 10h12l-4 4H0z" fill="#f3cf7a" stroke="#c8952a" stroke-width=".7"/><path d="M4 7h12l-4 4H0z" fill="#f5d889" stroke="#c8952a" stroke-width=".7"/><path d="M4 4h12l-4 4H0z" fill="#f8e2a0" stroke="#c8952a" stroke-width=".7"/><path d="M5 1h11l-4 4H1z" fill="#fbeabb" stroke="#c8952a" stroke-width=".7"/></svg>
<div class="t" style="left:67px;top:155.74px;font-size:12px;color:#000;transform:scaleX(0.96);transform-origin:0 0">Layers</div>
<div style="left:50px;top:177px;width:9px;height:9px;background:linear-gradient(#fff,#e4e4e4);border:1px solid #969696;border-radius:1px"></div>
<div style="left:52px;top:181px;width:5px;height:1px;background:#3a4ab0"></div>
<div style="left:67px;top:175px;width:12px;height:11px;background:#fff;border:1.5px solid #000"></div>
<div class="t" style="left:86px;top:173.74px;font-size:12px;color:#000;transform:scaleX(0.96);transform-origin:0 0">25cmMSF</div>
<div style="left:50px;top:213px;width:9px;height:9px;background:linear-gradient(#fff,#e4e4e4);border:1px solid #969696;border-radius:1px"></div>
<div style="left:52px;top:217px;width:5px;height:1px;background:#3a4ab0"></div>
<div style="left:67px;top:211px;width:12px;height:11px;background:#fff;border:1.5px solid #000"></div>
<div class="t" style="left:86px;top:209.74px;font-size:12px;color:#000;transform:scaleX(0.96);transform-origin:0 0">25cmMSF_Aneg3pt8827</div>
<div style="left:50px;top:249px;width:9px;height:9px;background:linear-gradient(#fff,#e4e4e4);border:1px solid #969696;border-radius:1px"></div>
<div style="left:52px;top:253px;width:5px;height:1px;background:#3a4ab0"></div>
<div style="left:54px;top:251px;width:1px;height:5px;background:#3a4ab0"></div>
<div style="left:67px;top:247px;width:12px;height:11px;background:#fff;border:1.5px solid #000"></div>
<div class="t" style="left:86px;top:245.74px;font-size:12px;color:#000;transform:scaleX(0.96);transform-origin:0 0">1m_tree_base_buffers</div>
<div style="left:50px;top:267px;width:9px;height:9px;background:linear-gradient(#fff,#e4e4e4);border:1px solid #969696;border-radius:1px"></div>
<div style="left:52px;top:271px;width:5px;height:1px;background:#3a4ab0"></div>
<div style="left:67px;top:265px;width:12px;height:11px;background:#fff;border:1.5px solid #000"></div>
<div class="t" style="left:86px;top:263.74px;font-size:12px;color:#000;transform:scaleX(0.96);transform-origin:0 0">alpha_minus3pnt8_poly_1mbuf_6trees</div>
<div style="left:50px;top:303px;width:9px;height:9px;background:linear-gradient(#fff,#e4e4e4);border:1px solid #969696;border-radius:1px"></div>
<div style="left:52px;top:307px;width:5px;height:1px;background:#3a4ab0"></div>
<div style="left:54px;top:305px;width:1px;height:5px;background:#3a4ab0"></div>
<div style="left:67px;top:301px;width:12px;height:11px;background:#fff;border:1.5px solid #000"></div>
<div class="t" style="left:86px;top:299.74px;font-size:12px;color:#000;transform:scaleX(0.96);transform-origin:0 0">Tree_Buffers_50cm</div>
<div style="left:50px;top:321px;width:9px;height:9px;background:linear-gradient(#fff,#e4e4e4);border:1px solid #969696;border-radius:1px"></div>
<div style="left:52px;top:325px;width:5px;height:1px;background:#3a4ab0"></div>
<div style="left:54px;top:323px;width:1px;height:5px;background:#3a4ab0"></div>
<div style="left:67px;top:319px;width:12px;height:11px;background:#fff;border:1.5px solid #000"></div>
<div class="t" style="left:86px;top:317.74px;font-size:12px;color:#000;transform:scaleX(0.96);transform-origin:0 0">NNG_50cm_alpha_minus1pnt5119_poly_50cmbuf_6trees</div>
<div style="left:50px;top:339px;width:9px;height:9px;background:linear-gradient(#fff,#e4e4e4);border:1px solid #969696;border-radius:1px"></div>
<div style="left:52px;top:343px;width:5px;height:1px;background:#3a4ab0"></div>
<div style="left:54px;top:341px;width:1px;height:5px;background:#3a4ab0"></div>
<div style="left:67px;top:337px;width:12px;height:11px;background:#fff;border:1.5px solid #000"></div>
<svg style="position:absolute;left:68px;top:338px" width="10" height="10"><path d="M1.5 5l2.5 3 4.5-7" stroke="#000" stroke-width="2" fill="none"/></svg>
<div class="t" style="left:86px;top:335.74px;font-size:12px;color:#000;transform:scaleX(0.96);transform-origin:0 0">NNG_50cm_alpha_minus1pnt5119_poly_50cmbuf</div>
<div style="left:50px;top:357px;width:9px;height:9px;background:linear-gradient(#fff,#e4e4e4);border:1px solid #969696;border-radius:1px"></div>
<div style="left:52px;top:361px;width:5px;height:1px;background:#3a4ab0"></div>
<div style="left:67px;top:355px;width:12px;height:11px;background:#fff;border:1.5px solid #000"></div>
<div class="t" style="left:86px;top:353.74px;font-size:12px;color:#000;transform:scaleX(0.96);transform-origin:0 0">NNG_50cm_alpha_minus1pnt5119_poly</div>
<div style="left:50px;top:429px;width:9px;height:9px;background:linear-gradient(#fff,#e4e4e4);border:1px solid #969696;border-radius:1px"></div>
<div style="left:52px;top:433px;width:5px;height:1px;background:#3a4ab0"></div>
<div style="left:67px;top:427px;width:12px;height:11px;background:#fff;border:1.5px solid #000"></div>
<svg style="position:absolute;left:68px;top:428px" width="10" height="10"><path d="M1.5 5l2.5 3 4.5-7" stroke="#000" stroke-width="2" fill="none"/></svg>
<div style="left:84px;top:423px;width:179px;height:18px;background:#3399ff"></div>
<div class="t" style="left:86px;top:425.74px;font-size:12px;color:#fff;transform:scaleX(0.96);transform-origin:0 0">Tree_A_50cm_YX_MINHull_Alpha</div>
<div style="left:50px;top:465px;width:9px;height:9px;background:linear-gradient(#fff,#e4e4e4);border:1px solid #969696;border-radius:1px"></div>
<div style="left:52px;top:469px;width:5px;height:1px;background:#3a4ab0"></div>
<div style="left:67px;top:463px;width:12px;height:11px;background:#fff;border:1.5px solid #000"></div>
<div class="t" style="left:86px;top:461.74px;font-size:12px;color:#000;transform:scaleX(0.96);transform-origin:0 0">global_5th_order_z_height_yx_nng_mask_reclass_poly_stem_clip</div>
<div style="left:50px;top:501px;width:9px;height:9px;background:linear-gradient(#fff,#e4e4e4);border:1px solid #969696;border-radius:1px"></div>
<div style="left:52px;top:505px;width:5px;height:1px;background:#3a4ab0"></div>
<div style="left:67px;top:499px;width:12px;height:11px;background:#fff;border:1.5px solid #000"></div>
<svg style="position:absolute;left:68px;top:500px" width="10" height="10"><path d="M1.5 5l2.5 3 4.5-7" stroke="#000" stroke-width="2" fill="none"/></svg>
<div class="t" style="left:86px;top:497.74px;font-size:12px;color:#000;transform:scaleX(0.96);transform-origin:0 0">Global_5th_order_Z_height.tif</div>
<svg style="position:absolute;left:83px;top:194px" width="8" height="8"><path d="M4 1L7 4 4 7 1 4z" fill="#10a090" stroke="#000" stroke-width="1.1"/></svg>
<div style="left:82px;top:233px;width:15px;height:1px;background:#1f4fa0"></div>
<div style="left:82px;top:282px;width:15px;height:12px;background:#c8f5c0;border:1px solid #7a7a7a"></div>
<div style="left:82px;top:372px;width:15px;height:12px;background:#dccaf5;border:1px solid #7a7a7a"></div>
<div style="left:82px;top:450px;width:15px;height:1px;background:#9c10c8"></div>
<div style="left:82px;top:480px;width:15px;height:12px;background:#fff4c8;border:1px solid #7a7a7a"></div>
<div style="left:31px;top:411px;width:9px;height:9px;background:linear-gradient(#fff,#e4e4e4);border:1px solid #969696;border-radius:1px"></div>
<div style="left:33px;top:415px;width:5px;height:1px;background:#3a4ab0"></div>
<svg style="position:absolute;left:46px;top:408px" width="16" height="16" viewBox="0 0 16 16"><path d="M4 10h12l-4 4H0z" fill="#f3cf7a" stroke="#c8952a" stroke-width=".7"/><path d="M4 7h12l-4 4H0z" fill="#f5d889" stroke="#c8952a" stroke-width=".7"/><path d="M4 4h12l-4 4H0z" fill="#f8e2a0" stroke="#c8952a" stroke-width=".7"/><path d="M5 1h11l-4 4H1z" fill="#fbeabb" stroke="#c8952a" stroke-width=".7"/></svg>
<div class="t" style="left:67px;top:407.74px;font-size:12px;color:#000;font-weight:bold;transform:scaleX(0.99);transform-origin:0 0">New Data Frame</div>
<div class="t" style="left:105px;top:515.74px;font-size:12px;color:#000;transform:scaleX(0.935);transform-origin:0 0">&lt;VALUE&gt;</div>
<div style="left:82px;top:535px;width:15px;height:12px;background:#2b86c6;border:1px solid #7a7a7a"></div>
<div class="t" style="left:100px;top:533.74px;font-size:12px;color:#000;transform:scaleX(0.92);transform-origin:0 0">-536.7452393 - -510.1679989</div>
<div style="left:82px;top:553px;width:15px;height:12px;background:#3a8ec4;border:1px solid #7a7a7a"></div>
<div class="t" style="left:100px;top:551.74px;font-size:12px;color:#000;transform:scaleX(0.92);transform-origin:0 0">-510.1679988 - -483.5907586</div>
<div style="left:82px;top:571px;width:15px;height:12px;background:#4995c0;border:1px solid #7a7a7a"></div>
<div class="t" style="left:100px;top:569.74px;font-size:12px;color:#000;transform:scaleX(0.92);transform-origin:0 0">-483.5907585 - -457.0135182</div>
<div style="left:82px;top:589px;width:15px;height:12px;background:#58a0bb;border:1px solid #7a7a7a"></div>
<div class="t" style="left:100px;top:587.74px;font-size:12px;color:#000;transform:scaleX(0.92);transform-origin:0 0">-457.0135181 - -430.4362779</div>
<div style="left:82px;top:607px;width:15px;height:12px;background:#6aa7b5;border:1px solid #7a7a7a"></div>
<div class="t" style="left:100px;top:605.74px;font-size:12px;color:#000;transform:scaleX(0.92);transform-origin:0 0">-430.4362778 - -403.8590375</div>
<div style="left:82px;top:625px;width:15px;height:12px;background:#78adae;border:1px solid #7a7a7a"></div>
<div class="t" style="left:100px;top:623.74px;font-size:12px;color:#000;transform:scaleX(0.92);transform-origin:0 0">-403.8590374 - -377.2817972</div>
<div style="left:82px;top:643px;width:15px;height:12px;background:#86b5a7;border:1px solid #7a7a7a"></div>
<div class="t" style="left:100px;top:641.74px;font-size:12px;color:#000;transform:scaleX(0.92);transform-origin:0 0">-377.2817971 - -350.7045568</div>
<div style="left:82px;top:661px;width:15px;height:12px;background:#95bea0;border:1px solid #7a7a7a"></div>
<div class="t" style="left:100px;top:659.74px;font-size:12px;color:#000;transform:scaleX(0.92);transform-origin:0 0">-350.7045567 - -324.1273165</div>
<div style="left:82px;top:679px;width:15px;height:12px;background:#a3c69a;border:1px solid #7a7a7a"></div>
<div class="t" style="left:100px;top:677.74px;font-size:12px;color:#000;transform:scaleX(0.92);transform-origin:0 0">-324.1273164 - -297.5500761</div>
<div style="left:82px;top:697px;width:15px;height:12px;background:#b3cf92;border:1px solid #7a7a7a"></div>
<div class="t" style="left:100px;top:695.74px;font-size:12px;color:#000;transform:scaleX(0.92);transform-origin:0 0">-297.550076 - -270.9728358</div>
<div style="left:82px;top:715px;width:15px;height:12px;background:#c1d68a;border:1px solid #7a7a7a"></div>
<div class="t" style="left:100px;top:713.74px;font-size:12px;color:#000;transform:scaleX(0.92);transform-origin:0 0">-270.9728357 - -244.3955954</div>
<div style="left:82px;top:733px;width:15px;height:12px;background:#d0de82;border:1px solid #7a7a7a"></div>
<div class="t" style="left:100px;top:731.74px;font-size:12px;color:#000;transform:scaleX(0.92);transform-origin:0 0">-244.3955953 - -217.8183551</div>
<div style="left:82px;top:751px;width:15px;height:12px;background:#dfe57a;border:1px solid #7a7a7a"></div>
<div class="t" style="left:100px;top:749.74px;font-size:12px;color:#000;transform:scaleX(0.92);transform-origin:0 0">-217.818355 - -191.2411147</div>
<div style="left:557px;top:100px;width:802px;height:664px;background:#f0f0f0"></div>
<div style="left:557px;top:100px;width:802px;height:2px;background:#6b6b6b"></div>
<div style="left:557px;top:100px;width:2px;height:664px;background:#6b6b6b"></div>
<div style="left:559px;top:102px;width:783px;height:645px;background:#fff;border-right:1px solid #e4e4e4;border-bottom:1px solid #e4e4e4"></div>
<div style="left:1343px;top:102px;width:15px;height:645px;background:#f0f0f0"></div>
<div style="left:1343px;top:118px;width:15px;height:610px;background:#cdcdcd"></div>
<svg style="position:absolute;left:1346px;top:107px" width="10" height="7"><path d="M1 6l4-4 4 4" stroke="#555" stroke-width="2" fill="none"/></svg>
<svg style="position:absolute;left:1346px;top:734px" width="10" height="7"><path d="M1 1l4 4 4-4" stroke="#555" stroke-width="2" fill="none"/></svg>
<div style="left:559px;top:747px;width:799px;height:17px;background:#f0f0f0;border-bottom:1px solid #e0e0e0"></div>
<div style="left:559px;top:748px;width:17px;height:15px;background:#c4dcf4;border-bottom:1px solid #8ab4e4"></div>
<svg style="position:absolute;left:564px;top:750px" width="9" height="9" viewBox="0 0 9 9"><rect x="0.5" y="0.5" width="7" height="7" fill="#9fcf6a" stroke="#222"/><path d="M2 6l4-4" stroke="#fff"/></svg>
<svg style="position:absolute;left:581px;top:750px" width="9" height="10" viewBox="0 0 9 10"><path d="M0.5 0.5h5l2 2v6h-7z" fill="#fff" stroke="#222"/><rect x="2" y="4" width="4" height="2" fill="#3a8ad6"/></svg>
<div style="left:595px;top:748px;width:1px;height:13px;background:#888"></div>
<svg style="position:absolute;left:604px;top:749px" width="10" height="12" viewBox="0 0 10 12"><path d="M2 5a3.5 3.5 0 0 1 6-2M8 7a3.5 3.5 0 0 1-6 2" stroke="#1f5fb0" stroke-width="1.5" fill="none"/><path d="M7 0l2 3-3 0z M3 12L1 9h3z" fill="#1f5fb0"/></svg>
<div style="left:623px;top:751px;width:2px;height:7px;background:#1a4aa0"></div>
<div style="left:627px;top:751px;width:2px;height:7px;background:#1a4aa0"></div>
<svg style="position:absolute;left:640px;top:750px" width="7" height="10"><path d="M6 1L2 5l4 4" stroke="#555" stroke-width="2" fill="none"/></svg>
<div style="left:652px;top:748px;width:671px;height:14px;background:#cdcdcd"></div>
<svg style="position:absolute;left:1330px;top:750px" width="7" height="10"><path d="M1 1l4 4-4 4" stroke="#555" stroke-width="2" fill="none"/></svg>
<svg style="position:absolute;left:752px;top:266px" width="490" height="338" shape-rendering="crispEdges"><path fill="#2b86c6" d="M0 0h12v1h-12zM0 1h10v1h-10zM0 2h2v1h-2z"/><path fill="#3a8ec4" d="M12 0h13v1h-13zM10 1h14v1h-14zM2 2h19v1h-19zM0 3h18v1h-18zM0 4h11v1h-11z"/><path fill="#4995c0" d="M25 0h12v1h-12zM24 1h12v1h-12zM21 2h14v1h-14zM18 3h15v1h-15zM11 4h19v1h-19zM0 5h26v1h-26zM0 6h19v1h-19zM0 7h6v1h-6z"/><path fill="#58a0bb" d="M37 0h12v1h-12zM36 1h13v1h-13zM35 2h13v1h-13zM33 3h13v1h-13zM30 4h14v1h-14zM26 5h15v1h-15zM19 6h19v1h-19zM6 7h27v1h-27zM0 8h27v1h-27zM0 9h17v1h-17z"/><path fill="#6aa7b5" d="M49 0h13v1h-13zM49 1h12v1h-12zM48 2h12v1h-12zM46 3h13v1h-13zM44 4h14v1h-14zM41 5h15v1h-15zM38 6h15v1h-15zM33 7h17v1h-17zM27 8h19v1h-19zM17 9h24v1h-24zM0 10h34v1h-34zM0 11h26v1h-26zM0 12h10v1h-10z"/><path fill="#78adae" d="M62 0h12v1h-12zM61 1h13v1h-13zM60 2h13v1h-13zM59 3h13v1h-13zM58 4h13v1h-13zM56 5h13v1h-13zM53 6h14v1h-14zM50 7h14v1h-14zM46 8h15v1h-15zM41 9h17v1h-17zM34 10h20v1h-20zM26 11h22v1h-22zM10 12h32v1h-32zM0 13h34v1h-34zM0 14h22v1h-22z"/><path fill="#86b5a7" d="M74 0h12v1h-12zM74 1h12v1h-12zM73 2h12v1h-12zM72 3h13v1h-13zM71 4h13v1h-13zM69 5h13v1h-13zM67 6h13v1h-13zM64 7h14v1h-14zM61 8h15v1h-15zM58 9h15v1h-15zM54 10h16v1h-16zM48 11h18v1h-18zM42 12h19v1h-19zM34 13h22v1h-22zM22 14h28v1h-28zM0 15h42v1h-42zM0 16h32v1h-32zM0 17h14v1h-14z"/><path fill="#95bea0" d="M86 0h13v1h-13zM86 1h12v1h-12zM85 2h13v1h-13zM85 3h12v1h-12zM84 4h12v1h-12zM82 5h13v1h-13zM80 6h13v1h-13zM78 7h14v1h-14zM76 8h14v1h-14zM73 9h14v1h-14zM70 10h14v1h-14zM66 11h15v1h-15zM61 12h17v1h-17zM56 13h18v1h-18zM50 14h19v1h-19zM42 15h22v1h-22zM32 16h25v1h-25zM14 17h36v1h-36zM0 18h40v1h-40zM0 19h27v1h-27z"/><path fill="#a3c69a" d="M99 0h12v1h-12zM98 1h13v1h-13zM98 2h12v1h-12zM97 3h13v1h-13zM96 4h13v1h-13zM95 5h13v1h-13zM93 6h13v1h-13zM92 7h13v1h-13zM90 8h13v1h-13zM87 9h14v1h-14zM84 10h15v1h-15zM81 11h15v1h-15zM78 12h15v1h-15zM74 13h15v1h-15zM69 14h17v1h-17zM64 15h17v1h-17zM57 16h20v1h-20zM50 17h21v1h-21zM40 18h25v1h-25zM27 19h31v1h-31zM0 20h49v1h-49zM0 21h37v1h-37zM0 22h18v1h-18z"/><path fill="#b3cf92" d="M111 0h12v1h-12zM111 1h12v1h-12zM110 2h13v1h-13zM110 3h12v1h-12zM109 4h12v1h-12zM108 5h12v1h-12zM106 6h13v1h-13zM105 7h13v1h-13zM103 8h13v1h-13zM101 9h13v1h-13zM99 10h13v1h-13zM96 11h14v1h-14zM93 12h14v1h-14zM89 13h15v1h-15zM86 14h15v1h-15zM81 15h17v1h-17zM77 16h17v1h-17zM71 17h18v1h-18zM65 18h19v1h-19zM58 19h21v1h-21zM49 20h23v1h-23zM37 21h28v1h-28zM18 22h39v1h-39zM0 23h46v1h-46zM0 24h31v1h-31z"/><path fill="#c1d68a" d="M123 0h13v1h-13zM123 1h12v1h-12zM123 2h12v1h-12zM122 3h13v1h-13zM121 4h13v1h-13zM120 5h13v1h-13zM119 6h13v1h-13zM118 7h13v1h-13zM116 8h13v1h-13zM114 9h14v1h-14zM112 10h14v1h-14zM110 11h14v1h-14zM107 12h14v1h-14zM104 13h15v1h-15zM101 14h15v1h-15zM98 15h15v1h-15zM94 16h15v1h-15zM89 17h17v1h-17zM84 18h17v1h-17zM79 19h18v1h-18zM72 20h20v1h-20zM65 21h21v1h-21zM57 22h23v1h-23zM46 23h27v1h-27zM31 24h34v1h-34zM0 25h55v1h-55zM0 26h42v1h-42zM0 27h22v1h-22z"/><path fill="#d0de82" d="M136 0h12v1h-12zM135 1h13v1h-13zM135 2h12v1h-12zM135 3h12v1h-12zM134 4h12v1h-12zM133 5h13v1h-13zM132 6h13v1h-13zM131 7h12v1h-12zM129 8h13v1h-13zM128 9h13v1h-13zM126 10h13v1h-13zM124 11h13v1h-13zM121 12h14v1h-14zM119 13h14v1h-14zM116 14h14v1h-14zM113 15h14v1h-14zM109 16h15v1h-15zM106 17h15v1h-15zM101 18h16v1h-16zM97 19h17v1h-17zM92 20h17v1h-17zM86 21h19v1h-19zM80 22h20v1h-20zM73 23h21v1h-21zM65 24h23v1h-23zM55 25h26v1h-26zM42 26h31v1h-31zM22 27h41v1h-41zM0 28h52v1h-52zM0 29h36v1h-36z"/><path fill="#dfe57a" d="M148 0h12v1h-12zM148 1h12v1h-12zM147 2h13v1h-13zM147 3h12v1h-12zM146 4h13v1h-13zM146 5h12v1h-12zM145 6h12v1h-12zM143 7h13v1h-13zM142 8h13v1h-13zM141 9h13v1h-13zM139 10h13v1h-13zM137 11h13v1h-13zM135 12h13v1h-13zM133 13h13v1h-13zM130 14h14v1h-14zM127 15h14v1h-14zM124 16h15v1h-15zM121 17h15v1h-15zM117 18h16v1h-16zM114 19h15v1h-15zM109 20h16v1h-16zM105 21h16v1h-16zM100 22h17v1h-17zM94 23h18v1h-18zM88 24h19v1h-19zM81 25h20v1h-20zM73 26h22v1h-22zM63 27h25v1h-25zM52 28h28v1h-28zM36 29h35v1h-35zM0 30h60v1h-60zM0 31h47v1h-47zM0 32h26v1h-26z"/><path fill="#e9ec70" d="M160 0h13v1h-13zM160 1h13v1h-13zM160 2h12v1h-12zM159 3h13v1h-13zM159 4h12v1h-12zM158 5h13v1h-13zM157 6h13v1h-13zM156 7h13v1h-13zM155 8h13v1h-13zM154 9h12v1h-12zM152 10h13v1h-13zM150 11h13v1h-13zM148 12h14v1h-14zM146 13h14v1h-14zM144 14h14v1h-14zM141 15h14v1h-14zM139 16h14v1h-14zM136 17h14v1h-14zM133 18h14v1h-14zM129 19h15v1h-15zM125 20h16v1h-16zM121 21h16v1h-16zM117 22h16v1h-16zM112 23h17v1h-17zM107 24h18v1h-18zM101 25h19v1h-19zM95 26h20v1h-20zM88 27h21v1h-21zM80 28h23v1h-23zM71 29h25v1h-25zM60 30h28v1h-28zM47 31h32v1h-32zM26 32h43v1h-43zM0 33h57v1h-57zM0 34h40v1h-40z"/><path fill="#f3f065" d="M173 0h12v1h-12zM173 1h12v1h-12zM172 2h13v1h-13zM172 3h12v1h-12zM171 4h13v1h-13zM171 5h12v1h-12zM170 6h12v1h-12zM169 7h12v1h-12zM168 8h12v1h-12zM166 9h13v1h-13zM165 10h13v1h-13zM163 11h13v1h-13zM162 12h13v1h-13zM160 13h13v1h-13zM158 14h13v1h-13zM155 15h14v1h-14zM153 16h14v1h-14zM150 17h14v1h-14zM147 18h15v1h-15zM144 19h15v1h-15zM141 20h15v1h-15zM137 21h16v1h-16zM133 22h16v1h-16zM129 23h16v1h-16zM125 24h16v1h-16zM120 25h17v1h-17zM115 26h18v1h-18zM109 27h19v1h-19zM103 28h19v1h-19zM96 29h21v1h-21zM88 30h22v1h-22zM79 31h24v1h-24zM69 32h27v1h-27zM57 33h30v1h-30zM40 34h38v1h-38zM0 35h66v1h-66zM0 36h51v1h-51zM0 37h30v1h-30z"/><path fill="#f8f560" d="M185 0h26v1h-26zM185 1h26v1h-26zM185 2h26v1h-26zM184 3h26v1h-26zM184 4h26v1h-26zM183 5h26v1h-26zM182 6h26v1h-26zM181 7h26v1h-26zM180 8h26v1h-26zM179 9h26v1h-26zM178 10h26v1h-26zM176 11h27v1h-27zM175 12h26v1h-26zM173 13h26v1h-26zM171 14h26v1h-26zM169 15h26v1h-26zM167 16h26v1h-26zM164 17h27v1h-27zM162 18h26v1h-26zM159 19h27v1h-27zM156 20h27v1h-27zM153 21h27v1h-27zM149 22h28v1h-28zM145 23h28v1h-28zM141 24h29v1h-29zM137 25h29v1h-29zM133 26h29v1h-29zM128 27h29v1h-29zM122 28h31v1h-31zM117 29h31v1h-31zM110 30h32v1h-32zM103 31h34v1h-34zM96 32h35v1h-35zM87 33h37v1h-37zM78 34h39v1h-39zM66 35h43v1h-43zM51 36h49v1h-49zM30 37h60v1h-60zM0 38h79v1h-79zM0 39h65v1h-65zM0 40h47v1h-47zM0 41h13v1h-13z"/><path fill="#fde656" d="M211 0h26v1h-26zM211 1h26v1h-26zM211 2h26v1h-26zM210 3h26v1h-26zM210 4h26v1h-26zM209 5h26v1h-26zM208 6h27v1h-27zM207 7h27v1h-27zM206 8h27v1h-27zM205 9h27v1h-27zM204 10h26v1h-26zM203 11h26v1h-26zM201 12h26v1h-26zM199 13h27v1h-27zM197 14h27v1h-27zM195 15h27v1h-27zM193 16h27v1h-27zM191 17h27v1h-27zM188 18h27v1h-27zM186 19h27v1h-27zM183 20h27v1h-27zM180 21h27v1h-27zM177 22h27v1h-27zM173 23h28v1h-28zM170 24h28v1h-28zM166 25h28v1h-28zM162 26h29v1h-29zM157 27h30v1h-30zM153 28h29v1h-29zM148 29h30v1h-30zM142 30h31v1h-31zM137 31h31v1h-31zM131 32h32v1h-32zM124 33h33v1h-33zM117 34h34v1h-34zM109 35h36v1h-36zM100 36h38v1h-38zM90 37h40v1h-40zM79 38h43v1h-43zM65 39h48v1h-48zM47 40h56v1h-56zM13 41h79v1h-79zM0 42h79v1h-79zM0 43h63v1h-63zM0 44h40v1h-40z"/><path fill="#fcd84f" d="M237 0h26v1h-26zM237 1h26v1h-26zM237 2h26v1h-26zM236 3h26v1h-26zM236 4h26v1h-26zM235 5h26v1h-26zM235 6h26v1h-26zM234 7h26v1h-26zM233 8h26v1h-26zM232 9h26v1h-26zM230 10h27v1h-27zM229 11h26v1h-26zM227 12h27v1h-27zM226 13h26v1h-26zM224 14h27v1h-27zM222 15h27v1h-27zM220 16h27v1h-27zM218 17h27v1h-27zM215 18h28v1h-28zM213 19h27v1h-27zM210 20h28v1h-28zM207 21h28v1h-28zM204 22h28v1h-28zM201 23h28v1h-28zM198 24h28v1h-28zM194 25h29v1h-29zM191 26h28v1h-28zM187 27h29v1h-29zM182 28h30v1h-30zM178 29h30v1h-30zM173 30h30v1h-30zM168 31h31v1h-31zM163 32h31v1h-31zM157 33h32v1h-32zM151 34h33v1h-33zM145 35h33v1h-33zM138 36h34v1h-34zM130 37h36v1h-36zM122 38h37v1h-37zM113 39h39v1h-39zM103 40h41v1h-41zM92 41h44v1h-44zM79 42h48v1h-48zM63 43h54v1h-54zM40 44h65v1h-65zM0 45h93v1h-93zM0 46h77v1h-77zM0 47h58v1h-58zM0 48h26v1h-26z"/><path fill="#fbc94a" d="M263 0h26v1h-26zM263 1h26v1h-26zM263 2h26v1h-26zM262 3h27v1h-27zM262 4h26v1h-26zM261 5h27v1h-27zM261 6h26v1h-26zM260 7h26v1h-26zM259 8h26v1h-26zM258 9h26v1h-26zM257 10h26v1h-26zM255 11h27v1h-27zM254 12h26v1h-26zM252 13h27v1h-27zM251 14h26v1h-26zM249 15h27v1h-27zM247 16h27v1h-27zM245 17h27v1h-27zM243 18h27v1h-27zM240 19h27v1h-27zM238 20h27v1h-27zM235 21h28v1h-28zM232 22h28v1h-28zM229 23h28v1h-28zM226 24h28v1h-28zM223 25h28v1h-28zM219 26h29v1h-29zM216 27h28v1h-28zM212 28h29v1h-29zM208 29h29v1h-29zM203 30h30v1h-30zM199 31h30v1h-30zM194 32h30v1h-30zM189 33h31v1h-31zM184 34h31v1h-31zM178 35h32v1h-32zM172 36h33v1h-33zM166 37h33v1h-33zM159 38h34v1h-34zM152 39h35v1h-35zM144 40h36v1h-36zM136 41h37v1h-37zM127 42h39v1h-39zM117 43h41v1h-41zM105 44h44v1h-44zM93 45h47v1h-47zM77 46h53v1h-53zM58 47h61v1h-61zM26 48h80v1h-80zM0 49h92v1h-92zM0 50h74v1h-74zM0 51h50v1h-50z"/><path fill="#fbb946" d="M289 0h26v1h-26zM289 1h26v1h-26zM289 2h26v1h-26zM289 3h26v1h-26zM288 4h26v1h-26zM288 5h26v1h-26zM287 6h26v1h-26zM286 7h26v1h-26zM285 8h26v1h-26zM284 9h26v1h-26zM283 10h26v1h-26zM282 11h26v1h-26zM280 12h27v1h-27zM279 13h27v1h-27zM277 14h27v1h-27zM276 15h26v1h-26zM274 16h27v1h-27zM272 17h27v1h-27zM270 18h27v1h-27zM267 19h28v1h-28zM265 20h27v1h-27zM263 21h27v1h-27zM260 22h27v1h-27zM257 23h28v1h-28zM254 24h28v1h-28zM251 25h28v1h-28zM248 26h28v1h-28zM244 27h29v1h-29zM241 28h28v1h-28zM237 29h29v1h-29zM233 30h29v1h-29zM229 31h29v1h-29zM224 32h30v1h-30zM220 33h30v1h-30zM215 34h31v1h-31zM210 35h31v1h-31zM205 36h31v1h-31zM199 37h32v1h-32zM193 38h33v1h-33zM187 39h33v1h-33zM180 40h34v1h-34zM173 41h35v1h-35zM166 42h36v1h-36zM158 43h37v1h-37zM149 44h39v1h-39zM140 45h40v1h-40zM130 46h42v1h-42zM119 47h44v1h-44zM106 48h48v1h-48zM92 49h52v1h-52zM74 50h58v1h-58zM50 51h70v1h-70zM0 52h106v1h-106zM0 53h90v1h-90zM0 54h69v1h-69zM0 55h38v1h-38z"/><path fill="#faab41" d="M315 0h26v1h-26zM315 1h26v1h-26zM315 2h26v1h-26zM315 3h26v1h-26zM314 4h26v1h-26zM314 5h26v1h-26zM313 6h26v1h-26zM312 7h26v1h-26zM311 8h27v1h-27zM310 9h27v1h-27zM309 10h27v1h-27zM308 11h27v1h-27zM307 12h26v1h-26zM306 13h26v1h-26zM304 14h27v1h-27zM302 15h27v1h-27zM301 16h26v1h-26zM299 17h27v1h-27zM297 18h27v1h-27zM295 19h27v1h-27zM292 20h28v1h-28zM290 21h27v1h-27zM287 22h28v1h-28zM285 23h27v1h-27zM282 24h28v1h-28zM279 25h28v1h-28zM276 26h28v1h-28zM273 27h28v1h-28zM269 28h29v1h-29zM266 29h29v1h-29zM262 30h29v1h-29zM258 31h30v1h-30zM254 32h30v1h-30zM250 33h30v1h-30zM246 34h30v1h-30zM241 35h31v1h-31zM236 36h31v1h-31zM231 37h31v1h-31zM226 38h32v1h-32zM220 39h32v1h-32zM214 40h33v1h-33zM208 41h34v1h-34zM202 42h34v1h-34zM195 43h35v1h-35zM188 44h35v1h-35zM180 45h37v1h-37zM172 46h38v1h-38zM163 47h39v1h-39zM154 48h40v1h-40zM144 49h42v1h-42zM132 50h45v1h-45zM120 51h48v1h-48zM106 52h51v1h-51zM90 53h56v1h-56zM69 54h65v1h-65zM38 55h82v1h-82zM0 56h105v1h-105zM0 57h86v1h-86zM0 58h61v1h-61zM0 59h6v1h-6zM112 174h18v1h-18zM108 175h26v1h-26zM105 176h32v1h-32zM102 177h37v1h-37zM99 178h42v1h-42zM97 179h46v1h-46zM95 180h50v1h-50zM93 181h53v1h-53zM91 182h56v1h-56zM90 183h58v1h-58zM88 184h61v1h-61zM86 185h64v1h-64zM85 186h66v1h-66zM84 187h68v1h-68zM82 188h71v1h-71zM81 189h73v1h-73zM80 190h74v1h-74zM78 191h77v1h-77zM77 192h79v1h-79zM76 193h80v1h-80zM75 194h82v1h-82zM74 195h83v1h-83zM73 196h84v1h-84zM72 197h86v1h-86zM71 198h87v1h-87zM70 199h88v1h-88zM69 200h90v1h-90zM68 201h91v1h-91zM68 202h91v1h-91zM67 203h92v1h-92zM66 204h93v1h-93zM66 205h94v1h-94zM65 206h95v1h-95zM64 207h96v1h-96zM64 208h96v1h-96zM63 209h97v1h-97zM63 210h97v1h-97zM62 211h98v1h-98zM62 212h98v1h-98zM61 213h99v1h-99zM61 214h99v1h-99zM61 215h98v1h-98zM61 216h98v1h-98zM60 217h99v1h-99zM60 218h99v1h-99zM60 219h99v1h-99zM60 220h98v1h-98zM60 221h98v1h-98zM60 222h98v1h-98zM60 223h97v1h-97zM60 224h97v1h-97zM60 225h96v1h-96zM61 226h95v1h-95zM61 227h94v1h-94zM61 228h94v1h-94zM62 229h92v1h-92zM62 230h92v1h-92zM63 231h90v1h-90zM63 232h89v1h-89zM64 233h87v1h-87zM64 234h86v1h-86zM65 235h84v1h-84zM66 236h82v1h-82zM67 237h80v1h-80zM68 238h78v1h-78zM69 239h76v1h-76zM70 240h74v1h-74zM72 241h70v1h-70zM73 242h68v1h-68zM75 243h64v1h-64zM76 244h61v1h-61zM78 245h57v1h-57zM80 246h53v1h-53zM83 247h47v1h-47zM86 248h41v1h-41zM89 249h35v1h-35zM93 250h26v1h-26zM100 251h12v1h-12zM269 319h20v1h-20zM259 320h37v1h-37zM252 321h48v1h-48zM246 322h56v1h-56zM241 323h63v1h-63zM236 324h70v1h-70zM232 325h75v1h-75zM228 326h79v1h-79zM225 327h83v1h-83zM222 328h86v1h-86zM219 329h89v1h-89zM216 330h92v1h-92zM214 331h94v1h-94zM212 332h96v1h-96zM210 333h98v1h-98zM208 334h99v1h-99zM206 335h101v1h-101zM205 336h101v1h-101zM204 337h101v1h-101z"/><path fill="#fa9f3d" d="M341 0h26v1h-26zM341 1h26v1h-26zM341 2h26v1h-26zM341 3h26v1h-26zM340 4h26v1h-26zM340 5h26v1h-26zM339 6h26v1h-26zM338 7h27v1h-27zM338 8h26v1h-26zM337 9h26v1h-26zM336 10h26v1h-26zM335 11h26v1h-26zM333 12h27v1h-27zM332 13h27v1h-27zM331 14h26v1h-26zM329 15h27v1h-27zM327 16h27v1h-27zM326 17h26v1h-26zM324 18h27v1h-27zM322 19h28v1h-28zM320 20h33v1h-33zM317 21h39v1h-39zM315 22h44v1h-44zM312 23h50v1h-50zM310 24h56v1h-56zM307 25h62v1h-62zM304 26h70v1h-70zM301 27h77v1h-77zM298 28h85v1h-85zM295 29h94v1h-94zM291 30h103v1h-103zM288 31h113v1h-113zM284 32h124v1h-124zM280 33h137v1h-137zM276 34h151v1h-151zM272 35h167v1h-167zM267 36h191v1h-191zM262 37h228v1h-228zM258 38h232v1h-232zM252 39h238v1h-238zM247 40h243v1h-243zM242 41h248v1h-248zM236 42h254v1h-254zM230 43h260v1h-260zM223 44h267v1h-267zM217 45h273v1h-273zM210 46h280v1h-280zM202 47h288v1h-288zM194 48h296v1h-296zM186 49h304v1h-304zM177 50h313v1h-313zM168 51h322v1h-322zM157 52h333v1h-333zM146 53h344v1h-344zM134 54h356v1h-356zM120 55h370v1h-370zM105 56h385v1h-385zM86 57h404v1h-404zM61 58h429v1h-429zM6 59h484v1h-484zM0 60h490v1h-490zM0 61h490v1h-490zM0 62h490v1h-490zM0 63h212v1h-212zM220 63h270v1h-270zM0 64h199v1h-199zM232 64h258v1h-258zM0 65h193v1h-193zM239 65h251v1h-251zM0 66h188v1h-188zM243 66h247v1h-247zM0 67h184v1h-184zM247 67h243v1h-243zM0 68h180v1h-180zM251 68h239v1h-239zM0 69h177v1h-177zM254 69h236v1h-236zM5 70h169v1h-169zM256 70h234v1h-234zM11 71h160v1h-160zM259 71h231v1h-231zM18 72h150v1h-150zM261 72h229v1h-229zM24 73h142v1h-142zM263 73h227v1h-227zM32 74h131v1h-131zM265 74h225v1h-225zM39 75h122v1h-122zM267 75h223v1h-223zM47 76h112v1h-112zM269 76h221v1h-221zM55 77h101v1h-101zM270 77h220v1h-220zM63 78h91v1h-91zM272 78h218v1h-218zM71 79h81v1h-81zM273 79h217v1h-217zM77 80h73v1h-73zM274 80h216v1h-216zM84 81h64v1h-64zM275 81h215v1h-215zM89 82h56v1h-56zM277 82h213v1h-213zM95 83h48v1h-48zM278 83h212v1h-212zM100 84h40v1h-40zM279 84h211v1h-211zM105 85h33v1h-33zM280 85h210v1h-210zM110 86h24v1h-24zM281 86h209v1h-209zM116 87h13v1h-13zM281 87h209v1h-209zM282 88h208v1h-208zM283 89h207v1h-207zM284 90h206v1h-206zM284 91h206v1h-206zM285 92h205v1h-205zM285 93h205v1h-205zM286 94h204v1h-204zM286 95h204v1h-204zM287 96h203v1h-203zM287 97h203v1h-203zM287 98h203v1h-203zM288 99h202v1h-202zM288 100h202v1h-202zM288 101h202v1h-202zM288 102h202v1h-202zM288 103h202v1h-202zM288 104h202v1h-202zM288 105h202v1h-202zM288 106h202v1h-202zM288 107h202v1h-202zM288 108h202v1h-202zM288 109h202v1h-202zM288 110h202v1h-202zM288 111h202v1h-202zM287 112h203v1h-203zM287 113h203v1h-203zM287 114h203v1h-203zM286 115h204v1h-204zM286 116h204v1h-204zM285 117h205v1h-205zM285 118h205v1h-205zM284 119h206v1h-206zM284 120h206v1h-206zM283 121h207v1h-207zM282 122h208v1h-208zM282 123h208v1h-208zM281 124h209v1h-209zM130 125h8v1h-8zM280 125h210v1h-210zM125 126h18v1h-18zM279 126h211v1h-211zM123 127h24v1h-24zM278 127h212v1h-212zM120 128h30v1h-30zM277 128h213v1h-213zM118 129h35v1h-35zM276 129h214v1h-214zM116 130h40v1h-40zM275 130h215v1h-215zM115 131h43v1h-43zM274 131h216v1h-216zM113 132h48v1h-48zM273 132h217v1h-217zM112 133h51v1h-51zM271 133h219v1h-219zM110 134h56v1h-56zM270 134h220v1h-220zM109 135h59v1h-59zM269 135h221v1h-221zM107 136h64v1h-64zM267 136h223v1h-223zM106 137h67v1h-67zM265 137h225v1h-225zM105 138h71v1h-71zM263 138h227v1h-227zM103 139h76v1h-76zM262 139h228v1h-228zM102 140h80v1h-80zM259 140h231v1h-231zM101 141h83v1h-83zM257 141h233v1h-233zM100 142h88v1h-88zM255 142h235v1h-235zM98 143h93v1h-93zM252 143h238v1h-238zM97 144h98v1h-98zM249 144h241v1h-241zM96 145h103v1h-103zM246 145h244v1h-244zM95 146h108v1h-108zM241 146h249v1h-249zM94 147h115v1h-115zM236 147h254v1h-254zM92 148h398v1h-398zM91 149h399v1h-399zM90 150h400v1h-400zM89 151h401v1h-401zM88 152h402v1h-402zM87 153h403v1h-403zM85 154h405v1h-405zM84 155h406v1h-406zM83 156h407v1h-407zM82 157h408v1h-408zM81 158h409v1h-409zM80 159h410v1h-410zM78 160h412v1h-412zM77 161h413v1h-413zM76 162h414v1h-414zM75 163h415v1h-415zM74 164h416v1h-416zM73 165h417v1h-417zM72 166h418v1h-418zM70 167h420v1h-420zM69 168h421v1h-421zM68 169h422v1h-422zM67 170h423v1h-423zM66 171h424v1h-424zM65 172h425v1h-425zM64 173h426v1h-426zM63 174h49v1h-49zM130 174h360v1h-360zM61 175h47v1h-47zM134 175h356v1h-356zM60 176h45v1h-45zM137 176h353v1h-353zM59 177h43v1h-43zM139 177h351v1h-351zM58 178h41v1h-41zM141 178h349v1h-349zM57 179h40v1h-40zM143 179h347v1h-347zM56 180h39v1h-39zM145 180h345v1h-345zM55 181h38v1h-38zM146 181h344v1h-344zM54 182h37v1h-37zM147 182h343v1h-343zM53 183h37v1h-37zM148 183h342v1h-342zM52 184h36v1h-36zM149 184h341v1h-341zM51 185h35v1h-35zM150 185h340v1h-340zM50 186h35v1h-35zM151 186h339v1h-339zM49 187h35v1h-35zM152 187h338v1h-338zM48 188h34v1h-34zM153 188h337v1h-337zM47 189h34v1h-34zM154 189h336v1h-336zM46 190h34v1h-34zM154 190h336v1h-336zM45 191h33v1h-33zM155 191h335v1h-335zM44 192h33v1h-33zM156 192h334v1h-334zM43 193h33v1h-33zM156 193h334v1h-334zM42 194h33v1h-33zM157 194h333v1h-333zM41 195h33v1h-33zM157 195h333v1h-333zM40 196h33v1h-33zM157 196h333v1h-333zM39 197h33v1h-33zM158 197h332v1h-332zM38 198h33v1h-33zM158 198h332v1h-332zM37 199h33v1h-33zM158 199h332v1h-332zM37 200h32v1h-32zM159 200h331v1h-331zM36 201h32v1h-32zM159 201h331v1h-331zM35 202h33v1h-33zM159 202h331v1h-331zM34 203h33v1h-33zM159 203h331v1h-331zM33 204h33v1h-33zM159 204h331v1h-331zM33 205h33v1h-33zM160 205h330v1h-330zM32 206h33v1h-33zM160 206h330v1h-330zM31 207h33v1h-33zM160 207h330v1h-330zM31 208h33v1h-33zM160 208h330v1h-330zM30 209h33v1h-33zM160 209h330v1h-330zM29 210h34v1h-34zM160 210h330v1h-330zM29 211h33v1h-33zM160 211h330v1h-330zM28 212h34v1h-34zM160 212h330v1h-330zM28 213h33v1h-33zM160 213h330v1h-330zM27 214h34v1h-34zM160 214h330v1h-330zM27 215h34v1h-34zM159 215h331v1h-331zM26 216h35v1h-35zM159 216h331v1h-331zM26 217h34v1h-34zM159 217h331v1h-331zM26 218h34v1h-34zM159 218h331v1h-331zM25 219h35v1h-35zM159 219h331v1h-331zM25 220h35v1h-35zM158 220h332v1h-332zM25 221h35v1h-35zM158 221h332v1h-332zM25 222h35v1h-35zM158 222h332v1h-332zM24 223h36v1h-36zM157 223h333v1h-333zM24 224h36v1h-36zM157 224h333v1h-333zM24 225h36v1h-36zM156 225h334v1h-334zM24 226h37v1h-37zM156 226h334v1h-334zM24 227h37v1h-37zM155 227h335v1h-335zM24 228h37v1h-37zM155 228h335v1h-335zM25 229h37v1h-37zM154 229h336v1h-336zM25 230h37v1h-37zM154 230h336v1h-336zM25 231h38v1h-38zM153 231h337v1h-337zM25 232h38v1h-38zM152 232h338v1h-338zM26 233h38v1h-38zM151 233h339v1h-339zM26 234h38v1h-38zM150 234h340v1h-340zM26 235h39v1h-39zM149 235h341v1h-341zM27 236h39v1h-39zM148 236h342v1h-342zM27 237h40v1h-40zM147 237h343v1h-343zM28 238h40v1h-40zM146 238h344v1h-344zM29 239h40v1h-40zM145 239h345v1h-345zM29 240h41v1h-41zM144 240h346v1h-346zM30 241h42v1h-42zM142 241h348v1h-348zM31 242h42v1h-42zM141 242h347v1h-347zM32 243h43v1h-43zM139 243h347v1h-347zM33 244h43v1h-43zM137 244h347v1h-347zM34 245h44v1h-44zM135 245h347v1h-347zM35 246h45v1h-45zM133 246h347v1h-347zM36 247h47v1h-47zM130 247h348v1h-348zM37 248h49v1h-49zM127 248h349v1h-349zM38 249h51v1h-51zM124 249h350v1h-350zM39 250h54v1h-54zM119 250h353v1h-353zM41 251h59v1h-59zM112 251h358v1h-358zM42 252h426v1h-426zM44 253h180v1h-180zM232 253h234v1h-234zM45 254h169v1h-169zM243 254h221v1h-221zM47 255h161v1h-161zM248 255h213v1h-213zM48 256h155v1h-155zM252 256h207v1h-207zM50 257h148v1h-148zM256 257h201v1h-201zM52 258h143v1h-143zM259 258h196v1h-196zM54 259h137v1h-137zM262 259h191v1h-191zM56 260h131v1h-131zM264 260h187v1h-187zM58 261h126v1h-126zM267 261h182v1h-182zM60 262h120v1h-120zM269 262h178v1h-178zM62 263h115v1h-115zM271 263h173v1h-173zM65 264h109v1h-109zM273 264h169v1h-169zM67 265h103v1h-103zM274 265h166v1h-166zM70 266h97v1h-97zM276 266h162v1h-162zM72 267h92v1h-92zM277 267h159v1h-159zM75 268h85v1h-85zM279 268h154v1h-154zM78 269h78v1h-78zM280 269h151v1h-151zM82 270h71v1h-71zM281 270h148v1h-148zM85 271h63v1h-63zM281 271h146v1h-146zM90 272h54v1h-54zM282 272h143v1h-143zM94 273h45v1h-45zM283 273h139v1h-139zM101 274h31v1h-31zM283 274h137v1h-137zM113 275h7v1h-7zM283 275h135v1h-135zM283 276h133v1h-133zM283 277h131v1h-131zM283 278h128v1h-128zM282 279h127v1h-127zM281 280h126v1h-126zM280 281h125v1h-125zM279 282h124v1h-124zM278 283h123v1h-123zM277 284h122v1h-122zM275 285h122v1h-122zM273 286h122v1h-122zM271 287h123v1h-123zM269 288h123v1h-123zM266 289h124v1h-124zM264 290h125v1h-125zM261 291h126v1h-126zM258 292h128v1h-128zM255 293h129v1h-129zM251 294h132v1h-132zM248 295h133v1h-133zM244 296h136v1h-136zM241 297h138v1h-138zM237 298h141v1h-141zM233 299h144v1h-144zM229 300h146v1h-146zM225 301h149v1h-149zM221 302h152v1h-152zM217 303h155v1h-155zM213 304h158v1h-158zM209 305h161v1h-161zM204 306h165v1h-165zM200 307h168v1h-168zM196 308h171v1h-171zM192 309h174v1h-174zM188 310h178v1h-178zM185 311h180v1h-180zM181 312h183v1h-183zM178 313h185v1h-185zM174 314h188v1h-188zM171 315h190v1h-190zM169 316h191v1h-191zM166 317h193v1h-193zM163 318h195v1h-195zM161 319h108v1h-108zM289 319h68v1h-68zM159 320h100v1h-100zM296 320h60v1h-60zM157 321h95v1h-95zM300 321h55v1h-55zM155 322h91v1h-91zM302 322h52v1h-52zM154 323h87v1h-87zM304 323h49v1h-49zM152 324h84v1h-84zM306 324h46v1h-46zM151 325h81v1h-81zM307 325h44v1h-44zM150 326h78v1h-78zM307 326h43v1h-43zM149 327h76v1h-76zM308 327h41v1h-41zM148 328h74v1h-74zM308 328h40v1h-40zM147 329h72v1h-72zM308 329h39v1h-39zM146 330h70v1h-70zM308 330h38v1h-38zM145 331h69v1h-69zM308 331h37v1h-37zM144 332h68v1h-68zM308 332h36v1h-36zM144 333h66v1h-66zM308 333h34v1h-34zM143 334h65v1h-65zM307 334h34v1h-34zM142 335h64v1h-64zM307 335h33v1h-33zM142 336h63v1h-63zM306 336h33v1h-33zM142 337h62v1h-62zM305 337h33v1h-33z"/><path fill="#f8943a" d="M367 0h40v1h-40zM367 1h40v1h-40zM367 2h41v1h-41zM367 3h41v1h-41zM366 4h43v1h-43zM366 5h44v1h-44zM365 6h47v1h-47zM365 7h48v1h-48zM364 8h51v1h-51zM363 9h55v1h-55zM362 10h58v1h-58zM361 11h62v1h-62zM360 12h67v1h-67zM359 13h72v1h-72zM357 14h78v1h-78zM356 15h85v1h-85zM354 16h94v1h-94zM352 17h104v1h-104zM351 18h118v1h-118zM350 19h140v1h-140zM353 20h137v1h-137zM356 21h134v1h-134zM359 22h131v1h-131zM362 23h128v1h-128zM366 24h124v1h-124zM369 25h121v1h-121zM374 26h116v1h-116zM378 27h112v1h-112zM383 28h107v1h-107zM389 29h101v1h-101zM394 30h96v1h-96zM401 31h89v1h-89zM408 32h82v1h-82zM417 33h73v1h-73zM427 34h63v1h-63zM439 35h51v1h-51zM458 36h32v1h-32zM212 63h8v1h-8zM199 64h33v1h-33zM193 65h46v1h-46zM188 66h55v1h-55zM184 67h63v1h-63zM180 68h71v1h-71zM177 69h77v1h-77zM0 70h5v1h-5zM174 70h82v1h-82zM0 71h11v1h-11zM171 71h88v1h-88zM0 72h18v1h-18zM168 72h93v1h-93zM0 73h24v1h-24zM166 73h97v1h-97zM0 74h32v1h-32zM163 74h102v1h-102zM0 75h39v1h-39zM161 75h106v1h-106zM0 76h47v1h-47zM159 76h110v1h-110zM0 77h55v1h-55zM156 77h114v1h-114zM3 78h60v1h-60zM154 78h118v1h-118zM10 79h61v1h-61zM152 79h121v1h-121zM16 80h61v1h-61zM150 80h124v1h-124zM22 81h62v1h-62zM148 81h127v1h-127zM27 82h62v1h-62zM145 82h132v1h-132zM32 83h63v1h-63zM143 83h135v1h-135zM36 84h64v1h-64zM140 84h139v1h-139zM40 85h65v1h-65zM138 85h142v1h-142zM44 86h66v1h-66zM134 86h147v1h-147zM48 87h68v1h-68zM129 87h152v1h-152zM51 88h231v1h-231zM53 89h230v1h-230zM56 90h228v1h-228zM58 91h226v1h-226zM60 92h225v1h-225zM62 93h223v1h-223zM64 94h222v1h-222zM66 95h220v1h-220zM67 96h220v1h-220zM68 97h219v1h-219zM69 98h218v1h-218zM70 99h218v1h-218zM71 100h217v1h-217zM72 101h216v1h-216zM73 102h215v1h-215zM74 103h214v1h-214zM74 104h214v1h-214zM75 105h213v1h-213zM75 106h213v1h-213zM76 107h212v1h-212zM76 108h212v1h-212zM76 109h212v1h-212zM77 110h211v1h-211zM77 111h211v1h-211zM77 112h210v1h-210zM77 113h210v1h-210zM77 114h210v1h-210zM77 115h209v1h-209zM77 116h209v1h-209zM77 117h208v1h-208zM77 118h208v1h-208zM77 119h207v1h-207zM77 120h207v1h-207zM77 121h206v1h-206zM77 122h205v1h-205zM76 123h206v1h-206zM76 124h205v1h-205zM76 125h54v1h-54zM138 125h142v1h-142zM75 126h50v1h-50zM143 126h136v1h-136zM75 127h48v1h-48zM147 127h131v1h-131zM75 128h45v1h-45zM150 128h127v1h-127zM74 129h44v1h-44zM153 129h123v1h-123zM74 130h42v1h-42zM156 130h119v1h-119zM73 131h42v1h-42zM158 131h116v1h-116zM73 132h40v1h-40zM161 132h112v1h-112zM72 133h40v1h-40zM163 133h108v1h-108zM72 134h38v1h-38zM166 134h104v1h-104zM71 135h38v1h-38zM168 135h101v1h-101zM71 136h36v1h-36zM171 136h96v1h-96zM70 137h36v1h-36zM173 137h92v1h-92zM70 138h35v1h-35zM176 138h87v1h-87zM69 139h34v1h-34zM179 139h83v1h-83zM68 140h34v1h-34zM182 140h77v1h-77zM68 141h33v1h-33zM184 141h73v1h-73zM67 142h33v1h-33zM188 142h67v1h-67zM66 143h32v1h-32zM191 143h61v1h-61zM66 144h31v1h-31zM195 144h54v1h-54zM65 145h31v1h-31zM199 145h47v1h-47zM64 146h31v1h-31zM203 146h38v1h-38zM63 147h31v1h-31zM209 147h27v1h-27zM63 148h29v1h-29zM62 149h29v1h-29zM61 150h29v1h-29zM60 151h29v1h-29zM59 152h29v1h-29zM59 153h28v1h-28zM58 154h27v1h-27zM57 155h27v1h-27zM56 156h27v1h-27zM55 157h27v1h-27zM54 158h27v1h-27zM53 159h27v1h-27zM52 160h26v1h-26zM51 161h26v1h-26zM50 162h26v1h-26zM49 163h26v1h-26zM48 164h26v1h-26zM47 165h26v1h-26zM46 166h26v1h-26zM45 167h25v1h-25zM44 168h25v1h-25zM43 169h25v1h-25zM42 170h25v1h-25zM41 171h25v1h-25zM40 172h25v1h-25zM39 173h25v1h-25zM38 174h25v1h-25zM37 175h24v1h-24zM36 176h24v1h-24zM35 177h24v1h-24zM33 178h25v1h-25zM32 179h25v1h-25zM31 180h25v1h-25zM30 181h25v1h-25zM29 182h25v1h-25zM28 183h25v1h-25zM26 184h26v1h-26zM25 185h26v1h-26zM24 186h26v1h-26zM23 187h26v1h-26zM22 188h26v1h-26zM20 189h27v1h-27zM19 190h27v1h-27zM18 191h27v1h-27zM17 192h27v1h-27zM16 193h27v1h-27zM14 194h28v1h-28zM13 195h28v1h-28zM12 196h28v1h-28zM10 197h29v1h-29zM9 198h29v1h-29zM8 199h29v1h-29zM6 200h31v1h-31zM5 201h31v1h-31zM4 202h31v1h-31zM2 203h32v1h-32zM1 204h32v1h-32zM0 205h33v1h-33zM0 206h32v1h-32zM0 207h31v1h-31zM0 208h31v1h-31zM0 209h30v1h-30zM0 210h29v1h-29zM0 211h29v1h-29zM0 212h28v1h-28zM0 213h28v1h-28zM0 214h27v1h-27zM0 215h27v1h-27zM0 216h26v1h-26zM0 217h26v1h-26zM0 218h26v1h-26zM0 219h25v1h-25zM0 220h25v1h-25zM0 221h25v1h-25zM0 222h25v1h-25zM0 223h24v1h-24zM0 224h24v1h-24zM0 225h24v1h-24zM0 226h24v1h-24zM0 227h24v1h-24zM0 228h24v1h-24zM0 229h25v1h-25zM0 230h25v1h-25zM0 231h25v1h-25zM0 232h25v1h-25zM0 233h26v1h-26zM0 234h26v1h-26zM0 235h26v1h-26zM0 236h27v1h-27zM0 237h27v1h-27zM0 238h28v1h-28zM0 239h29v1h-29zM0 240h29v1h-29zM0 241h30v1h-30zM0 242h31v1h-31zM488 242h2v1h-2zM0 243h32v1h-32zM486 243h4v1h-4zM0 244h33v1h-33zM484 244h6v1h-6zM0 245h34v1h-34zM482 245h8v1h-8zM0 246h35v1h-35zM480 246h10v1h-10zM0 247h36v1h-36zM478 247h12v1h-12zM0 248h37v1h-37zM476 248h14v1h-14zM0 249h38v1h-38zM474 249h16v1h-16zM0 250h39v1h-39zM472 250h18v1h-18zM0 251h41v1h-41zM470 251h20v1h-20zM0 252h42v1h-42zM468 252h22v1h-22zM0 253h44v1h-44zM224 253h8v1h-8zM466 253h24v1h-24zM0 254h45v1h-45zM214 254h29v1h-29zM464 254h26v1h-26zM2 255h45v1h-45zM208 255h40v1h-40zM461 255h29v1h-29zM4 256h44v1h-44zM203 256h49v1h-49zM459 256h31v1h-31zM6 257h44v1h-44zM198 257h58v1h-58zM457 257h33v1h-33zM8 258h44v1h-44zM195 258h64v1h-64zM455 258h35v1h-35zM10 259h44v1h-44zM191 259h71v1h-71zM453 259h37v1h-37zM12 260h44v1h-44zM187 260h77v1h-77zM451 260h37v1h-37zM14 261h44v1h-44zM184 261h83v1h-83zM449 261h37v1h-37zM16 262h44v1h-44zM180 262h89v1h-89zM447 262h37v1h-37zM18 263h44v1h-44zM177 263h94v1h-94zM444 263h38v1h-38zM21 264h44v1h-44zM174 264h99v1h-99zM442 264h38v1h-38zM23 265h44v1h-44zM170 265h104v1h-104zM440 265h39v1h-39zM25 266h45v1h-45zM167 266h109v1h-109zM438 266h39v1h-39zM27 267h45v1h-45zM164 267h113v1h-113zM436 267h39v1h-39zM29 268h46v1h-46zM160 268h119v1h-119zM433 268h40v1h-40zM32 269h46v1h-46zM156 269h124v1h-124zM431 269h40v1h-40zM34 270h48v1h-48zM153 270h128v1h-128zM429 270h40v1h-40zM36 271h49v1h-49zM148 271h133v1h-133zM427 271h40v1h-40zM38 272h52v1h-52zM144 272h138v1h-138zM425 272h40v1h-40zM40 273h54v1h-54zM139 273h144v1h-144zM422 273h41v1h-41zM43 274h58v1h-58zM132 274h151v1h-151zM420 274h41v1h-41zM45 275h68v1h-68zM120 275h163v1h-163zM418 275h41v1h-41zM47 276h236v1h-236zM416 276h41v1h-41zM49 277h234v1h-234zM414 277h41v1h-41zM52 278h231v1h-231zM411 278h42v1h-42zM54 279h228v1h-228zM409 279h42v1h-42zM56 280h225v1h-225zM407 280h42v1h-42zM58 281h222v1h-222zM405 281h42v1h-42zM60 282h219v1h-219zM403 282h42v1h-42zM62 283h216v1h-216zM401 283h42v1h-42zM65 284h212v1h-212zM399 284h42v1h-42zM67 285h208v1h-208zM397 285h42v1h-42zM69 286h204v1h-204zM395 286h43v1h-43zM71 287h200v1h-200zM394 287h42v1h-42zM73 288h196v1h-196zM392 288h42v1h-42zM75 289h191v1h-191zM390 289h42v1h-42zM77 290h187v1h-187zM389 290h41v1h-41zM78 291h183v1h-183zM387 291h41v1h-41zM80 292h178v1h-178zM386 292h40v1h-40zM82 293h173v1h-173zM384 293h41v1h-41zM84 294h167v1h-167zM383 294h40v1h-40zM85 295h163v1h-163zM381 295h40v1h-40zM87 296h157v1h-157zM380 296h39v1h-39zM88 297h153v1h-153zM379 297h38v1h-38zM89 298h148v1h-148zM378 298h38v1h-38zM90 299h143v1h-143zM377 299h37v1h-37zM91 300h138v1h-138zM375 300h37v1h-37zM92 301h133v1h-133zM374 301h37v1h-37zM93 302h128v1h-128zM373 302h36v1h-36zM94 303h123v1h-123zM372 303h35v1h-35zM95 304h118v1h-118zM371 304h35v1h-35zM95 305h114v1h-114zM370 305h34v1h-34zM96 306h108v1h-108zM369 306h34v1h-34zM97 307h103v1h-103zM368 307h33v1h-33zM97 308h99v1h-99zM367 308h32v1h-32zM97 309h95v1h-95zM366 309h32v1h-32zM98 310h90v1h-90zM366 310h30v1h-30zM98 311h87v1h-87zM365 311h30v1h-30zM98 312h83v1h-83zM364 312h29v1h-29zM98 313h80v1h-80zM363 313h29v1h-29zM98 314h76v1h-76zM362 314h29v1h-29zM98 315h73v1h-73zM361 315h28v1h-28zM99 316h70v1h-70zM360 316h28v1h-28zM99 317h67v1h-67zM359 317h27v1h-27zM99 318h64v1h-64zM358 318h27v1h-27zM99 319h62v1h-62zM357 319h26v1h-26zM99 320h60v1h-60zM356 320h26v1h-26zM99 321h58v1h-58zM355 321h26v1h-26zM99 322h56v1h-56zM354 322h25v1h-25zM99 323h55v1h-55zM353 323h25v1h-25zM99 324h53v1h-53zM352 324h24v1h-24zM99 325h52v1h-52zM351 325h24v1h-24zM99 326h51v1h-51zM350 326h24v1h-24zM99 327h50v1h-50zM349 327h23v1h-23zM99 328h49v1h-49zM348 328h23v1h-23zM99 329h48v1h-48zM347 329h22v1h-22zM99 330h47v1h-47zM346 330h22v1h-22zM99 331h46v1h-46zM345 331h22v1h-22zM98 332h46v1h-46zM344 332h21v1h-21zM99 333h45v1h-45zM342 333h22v1h-22zM99 334h44v1h-44zM341 334h21v1h-21zM99 335h43v1h-43zM340 335h21v1h-21zM99 336h43v1h-43zM339 336h20v1h-20zM99 337h43v1h-43zM338 337h20v1h-20z"/><path fill="#f78837" d="M407 0h83v1h-83zM407 1h83v1h-83zM408 2h82v1h-82zM408 3h82v1h-82zM409 4h81v1h-81zM410 5h80v1h-80zM412 6h78v1h-78zM413 7h77v1h-77zM415 8h75v1h-75zM418 9h72v1h-72zM420 10h70v1h-70zM423 11h67v1h-67zM427 12h63v1h-63zM431 13h59v1h-59zM435 14h55v1h-55zM441 15h49v1h-49zM448 16h42v1h-42zM456 17h34v1h-34zM469 18h21v1h-21zM0 78h3v1h-3zM0 79h10v1h-10zM0 80h16v1h-16zM0 81h22v1h-22zM0 82h27v1h-27zM0 83h32v1h-32zM0 84h36v1h-36zM4 85h36v1h-36zM9 86h35v1h-35zM14 87h34v1h-34zM18 88h33v1h-33zM21 89h32v1h-32zM25 90h31v1h-31zM27 91h31v1h-31zM30 92h30v1h-30zM32 93h30v1h-30zM34 94h30v1h-30zM36 95h30v1h-30zM38 96h29v1h-29zM40 97h28v1h-28zM41 98h28v1h-28zM42 99h28v1h-28zM44 100h27v1h-27zM45 101h27v1h-27zM46 102h27v1h-27zM47 103h27v1h-27zM47 104h27v1h-27zM48 105h27v1h-27zM49 106h26v1h-26zM50 107h26v1h-26zM50 108h26v1h-26zM51 109h25v1h-25zM51 110h26v1h-26zM51 111h26v1h-26zM52 112h25v1h-25zM52 113h25v1h-25zM52 114h25v1h-25zM52 115h25v1h-25zM53 116h24v1h-24zM53 117h24v1h-24zM53 118h24v1h-24zM53 119h24v1h-24zM53 120h24v1h-24zM53 121h24v1h-24zM53 122h24v1h-24zM53 123h23v1h-23zM53 124h23v1h-23zM53 125h23v1h-23zM52 126h23v1h-23zM52 127h23v1h-23zM52 128h23v1h-23zM52 129h22v1h-22zM51 130h23v1h-23zM51 131h22v1h-22zM51 132h22v1h-22zM50 133h22v1h-22zM50 134h22v1h-22zM50 135h21v1h-21zM49 136h22v1h-22zM49 137h21v1h-21zM48 138h22v1h-22zM48 139h21v1h-21zM47 140h21v1h-21zM47 141h21v1h-21zM46 142h21v1h-21zM45 143h21v1h-21zM45 144h21v1h-21zM44 145h21v1h-21zM43 146h21v1h-21zM43 147h20v1h-20zM42 148h21v1h-21zM41 149h21v1h-21zM40 150h21v1h-21zM40 151h20v1h-20zM39 152h20v1h-20zM38 153h21v1h-21zM37 154h21v1h-21zM36 155h21v1h-21zM35 156h21v1h-21zM35 157h20v1h-20zM34 158h20v1h-20zM33 159h20v1h-20zM32 160h20v1h-20zM31 161h20v1h-20zM30 162h20v1h-20zM29 163h20v1h-20zM27 164h21v1h-21zM26 165h21v1h-21zM25 166h21v1h-21zM24 167h21v1h-21zM23 168h21v1h-21zM22 169h21v1h-21zM21 170h21v1h-21zM19 171h22v1h-22zM18 172h22v1h-22zM17 173h22v1h-22zM15 174h23v1h-23zM14 175h23v1h-23zM12 176h24v1h-24zM11 177h24v1h-24zM9 178h24v1h-24zM8 179h24v1h-24zM6 180h25v1h-25zM4 181h26v1h-26zM2 182h27v1h-27zM0 183h28v1h-28zM0 184h26v1h-26zM0 185h25v1h-25zM0 186h24v1h-24zM0 187h23v1h-23zM0 188h22v1h-22zM0 189h20v1h-20zM0 190h19v1h-19zM0 191h18v1h-18zM0 192h17v1h-17zM0 193h16v1h-16zM0 194h14v1h-14zM0 195h13v1h-13zM0 196h12v1h-12zM0 197h10v1h-10zM0 198h9v1h-9zM0 199h8v1h-8zM0 200h6v1h-6zM0 201h5v1h-5zM0 202h4v1h-4zM0 203h2v1h-2zM0 204h1v1h-1zM0 255h2v1h-2zM0 256h4v1h-4zM0 257h6v1h-6zM0 258h8v1h-8zM0 259h10v1h-10zM0 260h12v1h-12zM488 260h2v1h-2zM0 261h14v1h-14zM486 261h4v1h-4zM0 262h16v1h-16zM484 262h6v1h-6zM0 263h18v1h-18zM482 263h8v1h-8zM0 264h21v1h-21zM480 264h10v1h-10zM0 265h23v1h-23zM479 265h11v1h-11zM0 266h25v1h-25zM477 266h13v1h-13zM0 267h27v1h-27zM475 267h15v1h-15zM0 268h29v1h-29zM473 268h17v1h-17zM0 269h32v1h-32zM471 269h19v1h-19zM0 270h34v1h-34zM469 270h21v1h-21zM0 271h36v1h-36zM467 271h22v1h-22zM0 272h38v1h-38zM465 272h22v1h-22zM0 273h40v1h-40zM463 273h22v1h-22zM0 274h43v1h-43zM461 274h22v1h-22zM0 275h45v1h-45zM459 275h22v1h-22zM0 276h47v1h-47zM457 276h22v1h-22zM0 277h49v1h-49zM455 277h22v1h-22zM0 278h52v1h-52zM453 278h22v1h-22zM5 279h49v1h-49zM451 279h22v1h-22zM9 280h47v1h-47zM449 280h22v1h-22zM12 281h46v1h-46zM447 281h23v1h-23zM16 282h44v1h-44zM445 282h23v1h-23zM19 283h43v1h-43zM443 283h23v1h-23zM21 284h44v1h-44zM441 284h23v1h-23zM24 285h43v1h-43zM439 285h23v1h-23zM27 286h42v1h-42zM438 286h22v1h-22zM29 287h42v1h-42zM436 287h22v1h-22zM31 288h42v1h-42zM434 288h22v1h-22zM34 289h41v1h-41zM432 289h22v1h-22zM36 290h41v1h-41zM430 290h22v1h-22zM38 291h40v1h-40zM428 291h23v1h-23zM40 292h40v1h-40zM426 292h23v1h-23zM41 293h41v1h-41zM425 293h22v1h-22zM43 294h41v1h-41zM423 294h22v1h-22zM45 295h40v1h-40zM421 295h22v1h-22zM46 296h41v1h-41zM419 296h22v1h-22zM48 297h40v1h-40zM417 297h23v1h-23zM49 298h40v1h-40zM416 298h22v1h-22zM51 299h39v1h-39zM414 299h22v1h-22zM52 300h39v1h-39zM412 300h22v1h-22zM53 301h39v1h-39zM411 301h21v1h-21zM54 302h39v1h-39zM409 302h22v1h-22zM55 303h39v1h-39zM407 303h22v1h-22zM56 304h39v1h-39zM406 304h21v1h-21zM57 305h38v1h-38zM404 305h21v1h-21zM58 306h38v1h-38zM403 306h21v1h-21zM59 307h38v1h-38zM401 307h21v1h-21zM60 308h37v1h-37zM399 308h21v1h-21zM61 309h36v1h-36zM398 309h20v1h-20zM61 310h37v1h-37zM396 310h21v1h-21zM62 311h36v1h-36zM395 311h20v1h-20zM63 312h35v1h-35zM393 312h20v1h-20zM63 313h35v1h-35zM392 313h20v1h-20zM64 314h34v1h-34zM391 314h19v1h-19zM64 315h34v1h-34zM389 315h20v1h-20zM65 316h34v1h-34zM388 316h19v1h-19zM65 317h34v1h-34zM386 317h19v1h-19zM66 318h33v1h-33zM385 318h19v1h-19zM66 319h33v1h-33zM383 319h19v1h-19zM67 320h32v1h-32zM382 320h19v1h-19zM67 321h32v1h-32zM381 321h18v1h-18zM67 322h32v1h-32zM379 322h18v1h-18zM67 323h32v1h-32zM378 323h18v1h-18zM68 324h31v1h-31zM376 324h18v1h-18zM68 325h31v1h-31zM375 325h18v1h-18zM68 326h31v1h-31zM374 326h17v1h-17zM68 327h31v1h-31zM372 327h18v1h-18zM69 328h30v1h-30zM371 328h17v1h-17zM69 329h30v1h-30zM369 329h18v1h-18zM69 330h30v1h-30zM368 330h17v1h-17zM69 331h30v1h-30zM367 331h16v1h-16zM69 332h29v1h-29zM365 332h17v1h-17zM69 333h30v1h-30zM364 333h16v1h-16zM70 334h29v1h-29zM362 334h17v1h-17zM70 335h29v1h-29zM361 335h16v1h-16zM70 336h29v1h-29zM359 336h17v1h-17zM70 337h29v1h-29zM358 337h16v1h-16z"/><path fill="#f67c34" d="M0 85h4v1h-4zM0 86h9v1h-9zM0 87h14v1h-14zM0 88h18v1h-18zM0 89h21v1h-21zM0 90h25v1h-25zM0 91h27v1h-27zM0 92h30v1h-30zM4 93h28v1h-28zM8 94h26v1h-26zM11 95h25v1h-25zM13 96h25v1h-25zM15 97h25v1h-25zM17 98h24v1h-24zM19 99h23v1h-23zM21 100h23v1h-23zM22 101h23v1h-23zM23 102h23v1h-23zM25 103h22v1h-22zM26 104h21v1h-21zM27 105h21v1h-21zM28 106h21v1h-21zM28 107h22v1h-22zM29 108h21v1h-21zM30 109h21v1h-21zM30 110h21v1h-21zM31 111h20v1h-20zM31 112h21v1h-21zM32 113h20v1h-20zM32 114h20v1h-20zM33 115h19v1h-19zM33 116h20v1h-20zM33 117h20v1h-20zM33 118h20v1h-20zM34 119h19v1h-19zM34 120h19v1h-19zM34 121h19v1h-19zM34 122h19v1h-19zM34 123h19v1h-19zM34 124h19v1h-19zM34 125h19v1h-19zM34 126h18v1h-18zM33 127h19v1h-19zM33 128h19v1h-19zM33 129h19v1h-19zM33 130h18v1h-18zM32 131h19v1h-19zM32 132h19v1h-19zM32 133h18v1h-18zM32 134h18v1h-18zM31 135h19v1h-19zM31 136h18v1h-18zM30 137h19v1h-19zM30 138h18v1h-18zM29 139h19v1h-19zM29 140h18v1h-18zM28 141h19v1h-19zM28 142h18v1h-18zM27 143h18v1h-18zM26 144h19v1h-19zM26 145h18v1h-18zM25 146h18v1h-18zM24 147h19v1h-19zM23 148h19v1h-19zM23 149h18v1h-18zM22 150h18v1h-18zM21 151h19v1h-19zM20 152h19v1h-19zM19 153h19v1h-19zM18 154h19v1h-19zM17 155h19v1h-19zM16 156h19v1h-19zM15 157h20v1h-20zM14 158h20v1h-20zM13 159h20v1h-20zM11 160h21v1h-21zM10 161h21v1h-21zM9 162h21v1h-21zM7 163h22v1h-22zM6 164h21v1h-21zM4 165h22v1h-22zM2 166h23v1h-23zM0 167h24v1h-24zM0 168h23v1h-23zM0 169h22v1h-22zM0 170h21v1h-21zM0 171h19v1h-19zM0 172h18v1h-18zM0 173h17v1h-17zM0 174h15v1h-15zM0 175h14v1h-14zM0 176h12v1h-12zM0 177h11v1h-11zM0 178h9v1h-9zM0 179h8v1h-8zM0 180h6v1h-6zM0 181h4v1h-4zM0 182h2v1h-2zM489 271h1v1h-1zM487 272h3v1h-3zM485 273h5v1h-5zM483 274h7v1h-7zM481 275h9v1h-9zM479 276h11v1h-11zM477 277h13v1h-13zM475 278h15v1h-15zM0 279h5v1h-5zM473 279h17v1h-17zM0 280h9v1h-9zM471 280h18v1h-18zM0 281h12v1h-12zM470 281h17v1h-17zM0 282h16v1h-16zM468 282h17v1h-17zM0 283h19v1h-19zM466 283h17v1h-17zM0 284h21v1h-21zM464 284h17v1h-17zM0 285h24v1h-24zM462 285h17v1h-17zM0 286h27v1h-27zM460 286h17v1h-17zM0 287h29v1h-29zM458 287h17v1h-17zM0 288h31v1h-31zM456 288h17v1h-17zM0 289h34v1h-34zM454 289h17v1h-17zM0 290h36v1h-36zM452 290h18v1h-18zM0 291h38v1h-38zM451 291h17v1h-17zM0 292h40v1h-40zM449 292h17v1h-17zM0 293h41v1h-41zM447 293h17v1h-17zM0 294h43v1h-43zM445 294h17v1h-17zM0 295h45v1h-45zM443 295h17v1h-17zM0 296h46v1h-46zM441 296h17v1h-17zM4 297h44v1h-44zM440 297h17v1h-17zM9 298h40v1h-40zM438 298h17v1h-17zM12 299h39v1h-39zM436 299h17v1h-17zM16 300h36v1h-36zM434 300h17v1h-17zM18 301h35v1h-35zM432 301h17v1h-17zM21 302h33v1h-33zM431 302h16v1h-16zM23 303h32v1h-32zM429 303h17v1h-17zM25 304h31v1h-31zM427 304h17v1h-17zM27 305h30v1h-30zM425 305h17v1h-17zM29 306h29v1h-29zM424 306h16v1h-16zM30 307h29v1h-29zM422 307h16v1h-16zM32 308h28v1h-28zM420 308h17v1h-17zM33 309h28v1h-28zM418 309h17v1h-17zM34 310h27v1h-27zM417 310h16v1h-16zM35 311h27v1h-27zM415 311h16v1h-16zM37 312h26v1h-26zM413 312h17v1h-17zM38 313h25v1h-25zM412 313h16v1h-16zM39 314h25v1h-25zM410 314h16v1h-16zM40 315h24v1h-24zM409 315h15v1h-15zM40 316h25v1h-25zM407 316h16v1h-16zM41 317h24v1h-24zM405 317h16v1h-16zM42 318h24v1h-24zM404 318h15v1h-15zM43 319h23v1h-23zM402 319h16v1h-16zM43 320h24v1h-24zM401 320h15v1h-15zM44 321h23v1h-23zM399 321h15v1h-15zM45 322h22v1h-22zM397 322h16v1h-16zM45 323h22v1h-22zM396 323h15v1h-15zM46 324h22v1h-22zM394 324h15v1h-15zM46 325h22v1h-22zM393 325h15v1h-15zM46 326h22v1h-22zM391 326h15v1h-15zM47 327h21v1h-21zM390 327h14v1h-14zM47 328h22v1h-22zM388 328h15v1h-15zM47 329h22v1h-22zM387 329h14v1h-14zM48 330h21v1h-21zM385 330h15v1h-15zM48 331h21v1h-21zM383 331h15v1h-15zM48 332h21v1h-21zM382 332h14v1h-14zM48 333h21v1h-21zM380 333h15v1h-15zM49 334h21v1h-21zM379 334h14v1h-14zM49 335h21v1h-21zM377 335h14v1h-14zM49 336h21v1h-21zM376 336h14v1h-14zM49 337h21v1h-21zM374 337h14v1h-14z"/><path fill="#f46e30" d="M0 93h4v1h-4zM0 94h8v1h-8zM0 95h11v1h-11zM0 96h13v1h-13zM0 97h15v1h-15zM0 98h17v1h-17zM0 99h19v1h-19zM0 100h21v1h-21zM0 101h22v1h-22zM0 102h23v1h-23zM0 103h25v1h-25zM2 104h24v1h-24zM4 105h23v1h-23zM5 106h23v1h-23zM7 107h21v1h-21zM8 108h21v1h-21zM9 109h21v1h-21zM10 110h20v1h-20zM11 111h20v1h-20zM12 112h19v1h-19zM12 113h20v1h-20zM13 114h19v1h-19zM13 115h20v1h-20zM14 116h19v1h-19zM14 117h19v1h-19zM15 118h18v1h-18zM15 119h19v1h-19zM15 120h19v1h-19zM15 121h19v1h-19zM15 122h19v1h-19zM16 123h18v1h-18zM16 124h18v1h-18zM16 125h18v1h-18zM15 126h19v1h-19zM15 127h18v1h-18zM15 128h18v1h-18zM15 129h18v1h-18zM15 130h18v1h-18zM15 131h17v1h-17zM14 132h18v1h-18zM14 133h18v1h-18zM13 134h19v1h-19zM13 135h18v1h-18zM13 136h18v1h-18zM12 137h18v1h-18zM12 138h18v1h-18zM11 139h18v1h-18zM10 140h19v1h-19zM10 141h18v1h-18zM9 142h19v1h-19zM8 143h19v1h-19zM7 144h19v1h-19zM6 145h20v1h-20zM5 146h20v1h-20zM4 147h20v1h-20zM3 148h20v1h-20zM1 149h22v1h-22zM0 150h22v1h-22zM0 151h21v1h-21zM0 152h20v1h-20zM0 153h19v1h-19zM0 154h18v1h-18zM0 155h17v1h-17zM0 156h16v1h-16zM0 157h15v1h-15zM0 158h14v1h-14zM0 159h13v1h-13zM0 160h11v1h-11zM0 161h10v1h-10zM0 162h9v1h-9zM0 163h7v1h-7zM0 164h6v1h-6zM0 165h4v1h-4zM0 166h2v1h-2zM489 280h1v1h-1zM487 281h3v1h-3zM485 282h5v1h-5zM483 283h7v1h-7zM481 284h9v1h-9zM479 285h11v1h-11zM477 286h13v1h-13zM475 287h15v1h-15zM473 288h15v1h-15zM471 289h15v1h-15zM470 290h14v1h-14zM468 291h14v1h-14zM466 292h15v1h-15zM464 293h15v1h-15zM462 294h15v1h-15zM460 295h15v1h-15zM458 296h15v1h-15zM0 297h4v1h-4zM457 297h14v1h-14zM0 298h9v1h-9zM455 298h14v1h-14zM0 299h12v1h-12zM453 299h15v1h-15zM0 300h16v1h-16zM451 300h15v1h-15zM0 301h18v1h-18zM449 301h15v1h-15zM0 302h21v1h-21zM447 302h15v1h-15zM0 303h23v1h-23zM446 303h14v1h-14zM0 304h25v1h-25zM444 304h14v1h-14zM0 305h27v1h-27zM442 305h15v1h-15zM0 306h29v1h-29zM440 306h15v1h-15zM0 307h30v1h-30zM438 307h15v1h-15zM0 308h32v1h-32zM437 308h14v1h-14zM0 309h33v1h-33zM435 309h14v1h-14zM0 310h34v1h-34zM433 310h14v1h-14zM0 311h35v1h-35zM431 311h15v1h-15zM4 312h33v1h-33zM430 312h14v1h-14zM9 313h29v1h-29zM428 313h14v1h-14zM12 314h27v1h-27zM426 314h14v1h-14zM15 315h25v1h-25zM424 315h15v1h-15zM17 316h23v1h-23zM423 316h14v1h-14zM19 317h22v1h-22zM421 317h14v1h-14zM20 318h22v1h-22zM419 318h14v1h-14zM22 319h21v1h-21zM418 319h14v1h-14zM23 320h20v1h-20zM416 320h14v1h-14zM24 321h20v1h-20zM414 321h14v1h-14zM25 322h20v1h-20zM413 322h13v1h-13zM26 323h19v1h-19zM411 323h14v1h-14zM27 324h19v1h-19zM409 324h14v1h-14zM28 325h18v1h-18zM408 325h13v1h-13zM29 326h17v1h-17zM406 326h14v1h-14zM30 327h17v1h-17zM404 327h14v1h-14zM30 328h17v1h-17zM403 328h13v1h-13zM31 329h16v1h-16zM401 329h14v1h-14zM31 330h17v1h-17zM400 330h13v1h-13zM31 331h17v1h-17zM398 331h13v1h-13zM32 332h16v1h-16zM396 332h14v1h-14zM32 333h16v1h-16zM395 333h13v1h-13zM32 334h17v1h-17zM393 334h13v1h-13zM33 335h16v1h-16zM391 335h14v1h-14zM33 336h16v1h-16zM390 336h13v1h-13zM33 337h16v1h-16zM388 337h13v1h-13z"/><path fill="#f1602c" d="M0 104h2v1h-2zM0 105h4v1h-4zM0 106h5v1h-5zM0 107h7v1h-7zM0 108h8v1h-8zM0 109h9v1h-9zM0 110h10v1h-10zM0 111h11v1h-11zM0 112h12v1h-12zM0 113h12v1h-12zM0 114h13v1h-13zM0 115h13v1h-13zM0 116h14v1h-14zM0 117h14v1h-14zM0 118h15v1h-15zM0 119h15v1h-15zM0 120h15v1h-15zM0 121h15v1h-15zM0 122h15v1h-15zM0 123h16v1h-16zM0 124h16v1h-16zM0 125h16v1h-16zM0 126h15v1h-15zM0 127h15v1h-15zM0 128h15v1h-15zM0 129h15v1h-15zM0 130h15v1h-15zM0 131h15v1h-15zM0 132h14v1h-14zM0 133h14v1h-14zM0 134h13v1h-13zM0 135h13v1h-13zM0 136h13v1h-13zM0 137h12v1h-12zM0 138h12v1h-12zM0 139h11v1h-11zM0 140h10v1h-10zM0 141h10v1h-10zM0 142h9v1h-9zM0 143h8v1h-8zM0 144h7v1h-7zM0 145h6v1h-6zM0 146h5v1h-5zM0 147h4v1h-4zM0 148h3v1h-3zM0 149h1v1h-1zM488 288h2v1h-2zM486 289h4v1h-4zM484 290h6v1h-6zM482 291h8v1h-8zM481 292h9v1h-9zM479 293h11v1h-11zM477 294h13v1h-13zM475 295h14v1h-14zM473 296h14v1h-14zM471 297h14v1h-14zM469 298h14v1h-14zM468 299h13v1h-13zM466 300h13v1h-13zM464 301h13v1h-13zM462 302h14v1h-14zM460 303h14v1h-14zM458 304h14v1h-14zM457 305h13v1h-13zM455 306h13v1h-13zM453 307h13v1h-13zM451 308h14v1h-14zM449 309h14v1h-14zM447 310h14v1h-14zM446 311h13v1h-13zM0 312h4v1h-4zM444 312h13v1h-13zM0 313h9v1h-9zM442 313h14v1h-14zM0 314h12v1h-12zM440 314h14v1h-14zM0 315h15v1h-15zM439 315h13v1h-13zM0 316h17v1h-17zM437 316h13v1h-13zM0 317h19v1h-19zM435 317h13v1h-13zM0 318h20v1h-20zM433 318h14v1h-14zM0 319h22v1h-22zM432 319h13v1h-13zM0 320h23v1h-23zM430 320h13v1h-13zM0 321h24v1h-24zM428 321h13v1h-13zM0 322h25v1h-25zM426 322h14v1h-14zM5 323h21v1h-21zM425 323h13v1h-13zM9 324h18v1h-18zM423 324h13v1h-13zM11 325h17v1h-17zM421 325h13v1h-13zM13 326h16v1h-16zM420 326h13v1h-13zM14 327h16v1h-16zM418 327h13v1h-13zM15 328h15v1h-15zM416 328h13v1h-13zM17 329h14v1h-14zM415 329h12v1h-12zM17 330h14v1h-14zM413 330h13v1h-13zM18 331h13v1h-13zM411 331h13v1h-13zM19 332h13v1h-13zM410 332h12v1h-12zM19 333h13v1h-13zM408 333h13v1h-13zM20 334h12v1h-12zM406 334h13v1h-13zM20 335h13v1h-13zM405 335h12v1h-12zM20 336h13v1h-13zM403 336h12v1h-12zM20 337h13v1h-13zM401 337h13v1h-13z"/><path fill="#ef5229" d="M489 295h1v1h-1zM487 296h3v1h-3zM485 297h5v1h-5zM483 298h7v1h-7zM481 299h9v1h-9zM479 300h11v1h-11zM477 301h13v1h-13zM476 302h13v1h-13zM474 303h13v1h-13zM472 304h13v1h-13zM470 305h14v1h-14zM468 306h14v1h-14zM466 307h14v1h-14zM465 308h13v1h-13zM463 309h13v1h-13zM461 310h13v1h-13zM459 311h13v1h-13zM457 312h14v1h-14zM456 313h13v1h-13zM454 314h13v1h-13zM452 315h13v1h-13zM450 316h13v1h-13zM448 317h14v1h-14zM447 318h13v1h-13zM445 319h13v1h-13zM443 320h13v1h-13zM441 321h13v1h-13zM440 322h13v1h-13zM0 323h5v1h-5zM438 323h13v1h-13zM0 324h9v1h-9zM436 324h13v1h-13zM0 325h11v1h-11zM434 325h13v1h-13zM0 326h13v1h-13zM433 326h13v1h-13zM0 327h14v1h-14zM431 327h13v1h-13zM0 328h15v1h-15zM429 328h13v1h-13zM0 329h17v1h-17zM427 329h13v1h-13zM3 330h14v1h-14zM426 330h13v1h-13zM6 331h12v1h-12zM424 331h13v1h-13zM8 332h11v1h-11zM422 332h13v1h-13zM9 333h10v1h-10zM421 333h12v1h-12zM10 334h10v1h-10zM419 334h13v1h-13zM10 335h10v1h-10zM417 335h13v1h-13zM11 336h9v1h-9zM415 336h13v1h-13zM11 337h9v1h-9zM414 337h12v1h-12z"/><path fill="#ec4325" d="M489 302h1v1h-1zM487 303h3v1h-3zM485 304h5v1h-5zM484 305h6v1h-6zM482 306h8v1h-8zM480 307h10v1h-10zM478 308h12v1h-12zM476 309h14v1h-14zM474 310h14v1h-14zM472 311h15v1h-15zM471 312h14v1h-14zM469 313h14v1h-14zM467 314h14v1h-14zM465 315h14v1h-14zM463 316h14v1h-14zM462 317h14v1h-14zM460 318h14v1h-14zM458 319h14v1h-14zM456 320h14v1h-14zM454 321h14v1h-14zM453 322h14v1h-14zM451 323h14v1h-14zM449 324h14v1h-14zM447 325h14v1h-14zM446 326h13v1h-13zM444 327h14v1h-14zM442 328h14v1h-14zM440 329h14v1h-14zM0 330h3v1h-3zM439 330h13v1h-13zM0 331h6v1h-6zM437 331h14v1h-14zM0 332h8v1h-8zM435 332h14v1h-14zM0 333h9v1h-9zM433 333h14v1h-14zM0 334h10v1h-10zM432 334h13v1h-13zM2 335h8v1h-8zM430 335h14v1h-14zM4 336h7v1h-7zM428 336h14v1h-14zM4 337h7v1h-7zM426 337h14v1h-14z"/><path fill="#e93521" d="M488 310h2v1h-2zM487 311h3v1h-3zM485 312h5v1h-5zM483 313h7v1h-7zM481 314h9v1h-9zM479 315h11v1h-11zM477 316h13v1h-13zM476 317h14v1h-14zM474 318h16v1h-16zM472 319h17v1h-17zM470 320h17v1h-17zM468 321h17v1h-17zM467 322h16v1h-16zM465 323h16v1h-16zM463 324h17v1h-17zM461 325h17v1h-17zM459 326h17v1h-17zM458 327h16v1h-16zM456 328h16v1h-16zM454 329h17v1h-17zM452 330h17v1h-17zM451 331h16v1h-16zM449 332h16v1h-16zM447 333h17v1h-17zM445 334h17v1h-17zM0 335h2v1h-2zM444 335h16v1h-16zM0 336h4v1h-4zM442 336h16v1h-16zM0 337h4v1h-4zM440 337h16v1h-16z"/><path fill="#e6251d" d="M489 319h1v1h-1zM487 320h3v1h-3zM485 321h5v1h-5zM483 322h7v1h-7zM481 323h9v1h-9zM480 324h10v1h-10zM478 325h12v1h-12zM476 326h14v1h-14zM474 327h16v1h-16zM472 328h18v1h-18zM471 329h19v1h-19zM469 330h21v1h-21zM467 331h23v1h-23zM465 332h25v1h-25zM464 333h26v1h-26zM462 334h28v1h-28zM460 335h30v1h-30zM458 336h32v1h-32zM456 337h34v1h-34z"/></svg>
<svg style="position:absolute;left:752px;top:266px" width="490" height="338"><polygon points="325.4,0.4 337.4,0.4 358.0,8.7 371.7,9.7 375.1,14.1 395.7,24.4 402.5,24.4 423.0,27.9 430.0,27.2 436.8,31.3 441.9,37.1 441.9,42.2 437.5,52.5 438.5,81.6 429.9,93.6 426.5,109.0 432.7,121.0 453.9,122.7 471.0,132.0 465.9,136.4 462.5,148.4 461.8,158.7 452.2,182.7 474.5,193.0 483.7,195.7 482.3,211.8 488.2,232.4 473.8,247.1 472.0,238.5 450.5,224.8 433.4,237.5 423.0,236.8 409.4,246.1 399.1,259.8 388.8,260.8 368.3,275.2 356.3,285.5 346.0,304.3 330.6,311.2 310.0,309.5 292.9,312.9 287.8,306.0 255.2,299.2 231.2,304.3 220.3,319.0 221.0,336.9 190.1,334.1 167.9,326.6 149.0,321.4 135.3,312.9 109.6,300.9 107.9,294.0 89.1,280.3 78.8,279.3 65.1,284.8 51.4,277.9 49.7,268.3 32.5,246.1 13.7,249.5 1.0,243.7 1.7,220.4 22.3,194.7 27.4,169.7 39.4,173.4 54.8,165.6 68.5,141.6 80.5,131.3 90.8,132.0 104.5,132.0 118.2,114.2 117.5,109.0 121.6,104.6 135.3,99.8 147.3,78.2 167.9,87.8 188.4,85.1 198.7,70.3 209.0,70.7 215.8,75.5 238.1,75.8 251.1,61.1 251.1,58.7 267.2,77.2 280.9,74.1 289.5,66.9 281.6,41.6 282.6,37.1 302.5,27.9" fill="none" stroke="#9c10b8" stroke-width="1.1"/></svg>
<div style="left:1364px;top:100px;width:533px;height:25px;background:linear-gradient(90deg,#c1cedc,#d6e3f0)"></div>
<div class="t" style="left:1368px;top:106.3px;font-size:15px;color:#000;letter-spacing:-0.12px">Catalog</div>
<svg style="position:absolute;left:1883px;top:107px" width="10" height="10"><path d="M1 1L9 9M9 1L1 9" stroke="#000" stroke-width="1.7"/></svg>
<svg style="position:absolute;left:1868px;top:108px" width="8" height="10"><rect x="1" y="0" width="6" height="1.2" fill="#000"/><rect x="1" y="0" width="2.2" height="5.5" fill="#000"/><rect x="5.8" y="0" width="1.2" height="5.5" fill="#000"/><rect x="0" y="5" width="8" height="1.5" fill="#000"/><rect x="3.4" y="6" width="1.3" height="4" fill="#000"/></svg>
<div style="left:1364px;top:125px;width:533px;height:23px;background:linear-gradient(#fbfbfb,#f0f0f0)"></div>
<svg style="position:absolute;left:1371px;top:129px" width="16" height="16" viewBox="0 0 16 16"><path d="M1 8l7-6v4h7v5H8v4z" fill="#f0d050" stroke="#8a6a10" stroke-width=".8"/></svg>
<svg style="position:absolute;left:1393px;top:136px" width="7" height="4"><path d="M0 0h7l-3.5 3.5z" fill="#222"/></svg>
<svg style="position:absolute;left:1407px;top:129px" width="16" height="16" viewBox="0 0 16 16"><path d="M15 8L8 2v4H1v5h7v4z" fill="#d8d8d8" stroke="#777" stroke-width=".8"/></svg>
<svg style="position:absolute;left:1430px;top:129px" width="16" height="16" viewBox="0 0 16 16"><path d="M7 1l6 6H9v5h6v3H5V7H1z" fill="#f0d050" stroke="#8a6a10" stroke-width=".8"/></svg>
<svg style="position:absolute;left:1453px;top:129px" width="16" height="16" viewBox="0 0 16 16"><path d="M8 1l7 7h-2v7H3V8H1z" fill="#f0d050" stroke="#6a4a10" stroke-width=".8"/><rect x="6" y="10" width="3" height="5" fill="#6a4a10"/></svg>
<svg style="position:absolute;left:1476px;top:129px" width="16" height="16" viewBox="0 0 16 16"><path d="M1 3v9c0 1.5 3 2.5 6 2.5s6-1 6-2.5V3" fill="#dde6f0" stroke="#8a9ab0"/><ellipse cx="7" cy="3" rx="6" ry="2.2" fill="#eef3f8" stroke="#8a9ab0"/><path d="M11 8l4 4h-1v3H8v-3H7z" fill="#f0d050" stroke="#6a4a10" stroke-width=".7"/></svg>
<div style="left:1498px;top:131px;width:1px;height:15px;background:#c8c8c8"></div>
<svg style="position:absolute;left:1508px;top:129px" width="16" height="16" viewBox="0 0 16 16"><path d="M1 2.5h14M1 5.5h14M1 8.5h14M1 11.5h14M1 14.5h14" stroke="#333" stroke-dasharray="3 1"/></svg>
<svg style="position:absolute;left:1531px;top:136px" width="7" height="4"><path d="M0 0h7l-3.5 3.5z" fill="#999"/></svg>
<div style="left:1544px;top:131px;width:1px;height:15px;background:#c8c8c8"></div>
<svg style="position:absolute;left:1553px;top:129px" width="16" height="16" viewBox="0 0 16 16"><path d="M1 7h14v8H1z" fill="#f0d050" stroke="#6a5a10" stroke-width=".8"/><path d="M1 7l3-3h4l1 2" fill="#f5dc80" stroke="#6a5a10" stroke-width=".8"/><path d="M11 1v6M8 4h6" stroke="#000" stroke-width="1.8"/></svg>
<div style="left:1575px;top:131px;width:1px;height:15px;background:#c8c8c8"></div>
<svg style="position:absolute;left:1585px;top:129px" width="16" height="16" viewBox="0 0 16 16"><rect x="1" y="1" width="4" height="4" fill="#f0d050" stroke="#6a5a10" stroke-width=".7"/><rect x="6" y="6" width="4" height="4" fill="#f0d050" stroke="#6a5a10" stroke-width=".7"/><rect x="6" y="11" width="4" height="4" fill="#f0d050" stroke="#6a5a10" stroke-width=".7"/><path d="M3 5v8h3M3 8h3" stroke="#555" fill="none"/><path d="M11 8h3M11 13h3" stroke="#1f5fb0"/></svg>
<div style="left:1606px;top:131px;width:1px;height:15px;background:#c8c8c8"></div>
<svg style="position:absolute;left:1614px;top:129px" width="16" height="16" viewBox="0 0 16 16"><rect x="1.5" y="1.5" width="12" height="14" fill="#fff" stroke="#4a5a7a"/><circle cx="4.5" cy="5" r="1.2" fill="none" stroke="#333" stroke-width=".7"/><circle cx="4.5" cy="11" r="1.2" fill="none" stroke="#333" stroke-width=".7"/><path d="M7 5h5M7 11h5M7 8h5" stroke="#6a8ac0"/></svg>
<div style="left:1364px;top:148px;width:533px;height:27px;background:#f0f0f0"></div>
<div class="t" style="left:1366px;top:158px;font-size:10.6px;color:#000;">Location:</div>
<div style="left:1418px;top:151px;width:476px;height:22px;background:#fff;border:1px solid #aaaaaa"></div>
<svg style="position:absolute;left:1421px;top:154px" width="16" height="16" viewBox="0 0 16 16"><rect x="0.5" y="1.5" width="15" height="13" rx="2.5" fill="#dcebb0" stroke="#5e6e34"/><rect x="1.5" y="2.5" width="10" height="7" rx="2" fill="#f2f8dc"/><path d="M2.5 7.5h11M4.5 5v2.5M10.5 7.5v3.5" stroke="#222" stroke-width="1.2"/></svg>
<div class="t" style="left:1442px;top:158px;font-size:11.5px;color:#000;letter-spacing:-0.45px">Tree_A_50cm_YX_MINHull_Alpha.shp</div>
<svg style="position:absolute;left:1877px;top:159px" width="10" height="7"><path d="M1 1l4 4 4-4" stroke="#333" stroke-width="1.6" fill="none"/></svg>
<div style="left:1364px;top:175px;width:531px;height:840px;background:#fff;border:1px solid #e2e2e2;border-left:2px solid #6b6b6b;border-top:2px solid #6b6b6b"></div>
<div style="left:1877px;top:177px;width:17px;height:821px;background:#f0f0f0"></div>
<div style="left:1877px;top:597px;width:17px;height:304px;background:#cdcdcd"></div>
<svg style="position:absolute;left:1881px;top:181px" width="10" height="7"><path d="M1 6l4-4 4 4" stroke="#555" stroke-width="2" fill="none"/></svg>
<svg style="position:absolute;left:1881px;top:984px" width="10" height="7"><path d="M1 1l4 4 4-4" stroke="#555" stroke-width="2" fill="none"/></svg>
<div style="left:1366px;top:998px;width:528px;height:16px;background:#f0f0f0"></div>
<div style="left:1383px;top:998px;width:462px;height:15px;background:#cdcdcd"></div>
<svg style="position:absolute;left:1371px;top:1001px" width="7" height="10"><path d="M6 1L2 5l4 4" stroke="#555" stroke-width="2" fill="none"/></svg>
<svg style="position:absolute;left:1865px;top:1001px" width="7" height="10"><path d="M1 1l4 4-4 4" stroke="#555" stroke-width="2" fill="none"/></svg>
<div style="left:1366px;top:177px;width:511px;height:821px;overflow:hidden">
<svg style="position:absolute;left:117px;top:0px" width="16" height="16" viewBox="0 0 16 16"><rect x="0.5" y="1.5" width="15" height="13" rx="2.5" fill="#dcebb0" stroke="#5e6e34"/><rect x="1.5" y="2.5" width="10" height="7" rx="2" fill="#f2f8dc"/><rect x="4" y="4" width="2" height="2" fill="#222"/><rect x="10" y="5" width="2" height="2" fill="#222"/><rect x="6" y="9" width="2" height="2" fill="#222"/></svg>
<div class="t" style="left:138px;top:2.74px;font-size:12px;color:#000;transform:scaleX(0.947);transform-origin:0 0">Tree_A_10cm_YZZ_points.shp</div>
<svg style="position:absolute;left:117px;top:17px" width="16" height="16" viewBox="0 0 16 16"><rect x="0.5" y="1.5" width="15" height="13" rx="2.5" fill="#dcebb0" stroke="#5e6e34"/><rect x="1.5" y="2.5" width="10" height="7" rx="2" fill="#f2f8dc"/><rect x="4" y="4" width="2" height="2" fill="#222"/><rect x="10" y="5" width="2" height="2" fill="#222"/><rect x="6" y="9" width="2" height="2" fill="#222"/></svg>
<div class="t" style="left:138px;top:19.74px;font-size:12px;color:#000;transform:scaleX(0.947);transform-origin:0 0">tree_A_25cm.shp</div>
<svg style="position:absolute;left:117px;top:34px" width="16" height="16" viewBox="0 0 16 16"><path d="M2.5 0.5h8l3 3v12h-11z" fill="#fff" stroke="#6a7a9a"/><path d="M10.5 0.5v3h3" fill="#dde" stroke="#6a7a9a"/><path d="M4.5 5.5h7M4.5 7.5h7M4.5 9.5h7M4.5 11.5h7M4.5 13.5h7" stroke="#8fb4e8" stroke-width=".8"/></svg>
<div class="t" style="left:138px;top:36.74px;font-size:12px;color:#000;transform:scaleX(0.947);transform-origin:0 0">Tree_A_25cm.csv</div>
<svg style="position:absolute;left:117px;top:51px" width="16" height="16" viewBox="0 0 16 16"><path d="M2.5 0.5h8l3 3v12h-11z" fill="#fff" stroke="#6a7a9a"/><path d="M10.5 0.5v3h3" fill="#dde" stroke="#6a7a9a"/><path d="M4.5 5.5h7M4.5 7.5h7M4.5 9.5h7M4.5 11.5h7M4.5 13.5h7" stroke="#8fb4e8" stroke-width=".8"/></svg>
<div class="t" style="left:138px;top:53.74px;font-size:12px;color:#000;transform:scaleX(0.947);transform-origin:0 0">Tree_A_25cm.txt</div>
<svg style="position:absolute;left:117px;top:68px" width="16" height="16" viewBox="0 0 16 16"><rect x="0.5" y="1.5" width="15" height="13" rx="2.5" fill="#dcebb0" stroke="#5e6e34"/><rect x="1.5" y="2.5" width="10" height="7" rx="2" fill="#f2f8dc"/><rect x="3.5" y="3.5" width="9" height="9" fill="none" stroke="#222" stroke-width=".9"/><path d="M3.5 3.5l4 4h5M7.5 7.5v5" stroke="#222" stroke-width=".8"/><rect x="5" y="9" width="1.5" height="1.5" fill="#222"/><rect x="9" y="5" width="1.5" height="1.5" fill="#222"/></svg>
<div class="t" style="left:138px;top:70.74px;font-size:12px;color:#000;transform:scaleX(0.947);transform-origin:0 0">tree_A_25cm_VD_Density_greater_1000persqmeter.shp</div>
<svg style="position:absolute;left:117px;top:85px" width="16" height="16" viewBox="0 0 16 16"><rect x="0.5" y="1.5" width="15" height="13" rx="2.5" fill="#dcebb0" stroke="#5e6e34"/><rect x="1.5" y="2.5" width="10" height="7" rx="2" fill="#f2f8dc"/><rect x="4" y="4" width="2" height="2" fill="#222"/><rect x="10" y="5" width="2" height="2" fill="#222"/><rect x="6" y="9" width="2" height="2" fill="#222"/></svg>
<div class="t" style="left:138px;top:87.74px;font-size:12px;color:#000;transform:scaleX(0.947);transform-origin:0 0">tree_A_25cm_VD_Density_greater_1000persqmeter_points.shp</div>
<svg style="position:absolute;left:117px;top:102px" width="16" height="16" viewBox="0 0 16 16"><rect x="0.5" y="1.5" width="15" height="13" rx="2.5" fill="#dcebb0" stroke="#5e6e34"/><rect x="1.5" y="2.5" width="10" height="7" rx="2" fill="#f2f8dc"/><path d="M2.5 7.5h11M4.5 5v2.5M10.5 7.5v3.5" stroke="#222" stroke-width="1.2"/></svg>
<div class="t" style="left:138px;top:104.74px;font-size:12px;color:#000;transform:scaleX(0.947);transform-origin:0 0">tree_A_25cm_VD_Density_greater_1std_persqmeter_alpha_minius7pt5.s</div>
<svg style="position:absolute;left:117px;top:119px" width="16" height="16" viewBox="0 0 16 16"><rect x="0.5" y="1.5" width="15" height="13" rx="2.5" fill="#dcebb0" stroke="#5e6e34"/><rect x="1.5" y="2.5" width="10" height="7" rx="2" fill="#f2f8dc"/><rect x="3.5" y="3.5" width="9" height="9" fill="none" stroke="#222" stroke-width=".9"/><path d="M3.5 3.5l4 4h5M7.5 7.5v5" stroke="#222" stroke-width=".8"/><rect x="5" y="9" width="1.5" height="1.5" fill="#222"/><rect x="9" y="5" width="1.5" height="1.5" fill="#222"/></svg>
<div class="t" style="left:138px;top:121.74px;font-size:12px;color:#000;transform:scaleX(0.947);transform-origin:0 0">tree_A_25cm_VD_Density_greater_1std_persqmeter_points.shp</div>
<svg style="position:absolute;left:117px;top:136px" width="16" height="16" viewBox="0 0 16 16"><path d="M2.5 0.5h8l3 3v12h-11z" fill="#fff" stroke="#6a7a9a"/><path d="M10.5 0.5v3h3" fill="#dde" stroke="#6a7a9a"/><path d="M4.5 5.5h7M4.5 7.5h7M4.5 9.5h7M4.5 11.5h7M4.5 13.5h7" stroke="#8fb4e8" stroke-width=".8"/></svg>
<div class="t" style="left:138px;top:138.74px;font-size:12px;color:#000;transform:scaleX(0.947);transform-origin:0 0">Tree_A_25cm_XY.txt</div>
<svg style="position:absolute;left:117px;top:153px" width="16" height="16" viewBox="0 0 16 16"><rect x="0.5" y="1.5" width="15" height="13" rx="2.5" fill="#dcebb0" stroke="#5e6e34"/><rect x="1.5" y="2.5" width="10" height="7" rx="2" fill="#f2f8dc"/><rect x="4" y="4" width="2" height="2" fill="#222"/><rect x="10" y="5" width="2" height="2" fill="#222"/><rect x="6" y="9" width="2" height="2" fill="#222"/></svg>
<div class="t" style="left:138px;top:155.74px;font-size:12px;color:#000;transform:scaleX(0.947);transform-origin:0 0">tree_A_25cm_YX.shp</div>
<svg style="position:absolute;left:117px;top:170px" width="16" height="16" viewBox="0 0 16 16"><path d="M2.5 0.5h8l3 3v12h-11z" fill="#fff" stroke="#6a7a9a"/><path d="M10.5 0.5v3h3" fill="#dde" stroke="#6a7a9a"/><path d="M4.5 5.5h7M4.5 7.5h7M4.5 9.5h7M4.5 11.5h7M4.5 13.5h7" stroke="#8fb4e8" stroke-width=".8"/></svg>
<div class="t" style="left:138px;top:172.74px;font-size:12px;color:#000;transform:scaleX(0.947);transform-origin:0 0">Tree_A_35cm.txt</div>
<svg style="position:absolute;left:117px;top:187px" width="16" height="16" viewBox="0 0 16 16"><rect x="0.5" y="1.5" width="15" height="13" rx="2.5" fill="#dcebb0" stroke="#5e6e34"/><rect x="1.5" y="2.5" width="10" height="7" rx="2" fill="#f2f8dc"/><rect x="4" y="4" width="2" height="2" fill="#222"/><rect x="10" y="5" width="2" height="2" fill="#222"/><rect x="6" y="9" width="2" height="2" fill="#222"/></svg>
<div class="t" style="left:138px;top:189.74px;font-size:12px;color:#000;transform:scaleX(0.947);transform-origin:0 0">tree_A_50cm.shp</div>
<svg style="position:absolute;left:117px;top:204px" width="16" height="16" viewBox="0 0 16 16"><path d="M2.5 0.5h8l3 3v12h-11z" fill="#fff" stroke="#6a7a9a"/><path d="M10.5 0.5v3h3" fill="#dde" stroke="#6a7a9a"/><path d="M4.5 5.5h7M4.5 7.5h7M4.5 9.5h7M4.5 11.5h7M4.5 13.5h7" stroke="#8fb4e8" stroke-width=".8"/></svg>
<div class="t" style="left:138px;top:206.74px;font-size:12px;color:#000;transform:scaleX(0.947);transform-origin:0 0">Tree_A_50cm.txt</div>
<svg style="position:absolute;left:117px;top:221px" width="16" height="16" viewBox="0 0 16 16"><path d="M2.5 0.5h8l3 3v12h-11z" fill="#fff" stroke="#6a7a9a"/><path d="M10.5 0.5v3h3" fill="#dde" stroke="#6a7a9a"/><path d="M4.5 5.5h7M4.5 7.5h7M4.5 9.5h7M4.5 11.5h7M4.5 13.5h7" stroke="#8fb4e8" stroke-width=".8"/></svg>
<div class="t" style="left:138px;top:223.74px;font-size:12px;color:#000;transform:scaleX(0.947);transform-origin:0 0">Tree_A_50cm_hand_CLip.txt</div>
<svg style="position:absolute;left:117px;top:238px" width="16" height="16" viewBox="0 0 16 16"><rect x="0.5" y="1.5" width="15" height="13" rx="2.5" fill="#dcebb0" stroke="#5e6e34"/><rect x="1.5" y="2.5" width="10" height="7" rx="2" fill="#f2f8dc"/><rect x="4" y="4" width="2" height="2" fill="#222"/><rect x="10" y="5" width="2" height="2" fill="#222"/><rect x="6" y="9" width="2" height="2" fill="#222"/></svg>
<div class="t" style="left:138px;top:240.74px;font-size:12px;color:#000;transform:scaleX(0.947);transform-origin:0 0">TREE_A_50cm_HANDCLIP_YXZ.shp</div>
<svg style="position:absolute;left:117px;top:255px" width="16" height="16" viewBox="0 0 16 16"><path d="M2.5 0.5h8l3 3v12h-11z" fill="#fff" stroke="#6a7a9a"/><path d="M10.5 0.5v3h3" fill="#dde" stroke="#6a7a9a"/><path d="M4.5 5.5h7M4.5 7.5h7M4.5 9.5h7M4.5 11.5h7M4.5 13.5h7" stroke="#8fb4e8" stroke-width=".8"/></svg>
<div class="t" style="left:138px;top:257.74px;font-size:12px;color:#000;transform:scaleX(0.947);transform-origin:0 0">Tree_A_50cm_IDW_stem_points.txt</div>
<svg style="position:absolute;left:117px;top:272px" width="16" height="16" viewBox="0 0 16 16"><path d="M2.5 0.5h8l3 3v12h-11z" fill="#fff" stroke="#6a7a9a"/><path d="M10.5 0.5v3h3" fill="#dde" stroke="#6a7a9a"/><path d="M4.5 5.5h7M4.5 7.5h7M4.5 9.5h7M4.5 11.5h7M4.5 13.5h7" stroke="#8fb4e8" stroke-width=".8"/></svg>
<div class="t" style="left:138px;top:274.74px;font-size:12px;color:#000;transform:scaleX(0.947);transform-origin:0 0">Tree_A_50cm_IDW_stem_points_No_ID.txt</div>
<svg style="position:absolute;left:117px;top:289px" width="16" height="16" viewBox="0 0 16 16"><path d="M2.5 0.5h8l3 3v12h-11z" fill="#fff" stroke="#6a7a9a"/><path d="M10.5 0.5v3h3" fill="#dde" stroke="#6a7a9a"/><path d="M4.5 5.5h7M4.5 7.5h7M4.5 9.5h7M4.5 11.5h7M4.5 13.5h7" stroke="#8fb4e8" stroke-width=".8"/></svg>
<div class="t" style="left:138px;top:291.74px;font-size:12px;color:#000;transform:scaleX(0.947);transform-origin:0 0">Tree_A_50cm_stem_points.txt</div>
<svg style="position:absolute;left:117px;top:306px" width="16" height="16" viewBox="0 0 16 16"><path d="M2.5 0.5h8l3 3v12h-11z" fill="#fff" stroke="#6a7a9a"/><path d="M10.5 0.5v3h3" fill="#dde" stroke="#6a7a9a"/><path d="M4.5 5.5h7M4.5 7.5h7M4.5 9.5h7M4.5 11.5h7M4.5 13.5h7" stroke="#8fb4e8" stroke-width=".8"/></svg>
<div class="t" style="left:138px;top:308.74px;font-size:12px;color:#000;transform:scaleX(0.947);transform-origin:0 0">Tree_A_50cm_stem_points_no_ID.txt</div>
<svg style="position:absolute;left:117px;top:323px" width="16" height="16" viewBox="0 0 16 16"><path d="M2.5 0.5h8l3 3v12h-11z" fill="#fff" stroke="#6a7a9a"/><path d="M10.5 0.5v3h3" fill="#dde" stroke="#6a7a9a"/><path d="M4.5 5.5h7M4.5 7.5h7M4.5 9.5h7M4.5 11.5h7M4.5 13.5h7" stroke="#8fb4e8" stroke-width=".8"/></svg>
<div class="t" style="left:138px;top:325.74px;font-size:12px;color:#000;transform:scaleX(0.947);transform-origin:0 0">Tree_A_50cm_stem_points_XY.txt</div>
<svg style="position:absolute;left:117px;top:340px" width="16" height="16" viewBox="0 0 16 16"><path d="M2.5 0.5h8l3 3v12h-11z" fill="#fff" stroke="#6a7a9a"/><path d="M10.5 0.5v3h3" fill="#dde" stroke="#6a7a9a"/><path d="M4.5 5.5h7M4.5 7.5h7M4.5 9.5h7M4.5 11.5h7M4.5 13.5h7" stroke="#8fb4e8" stroke-width=".8"/></svg>
<div class="t" style="left:138px;top:342.74px;font-size:12px;color:#000;transform:scaleX(0.947);transform-origin:0 0">Tree_A_50cm_stem_points_XY_no_ID.txt</div>
<svg style="position:absolute;left:117px;top:357px" width="16" height="16" viewBox="0 0 16 16"><rect x="0.5" y="1.5" width="15" height="13" rx="2.5" fill="#dcebb0" stroke="#5e6e34"/><rect x="1.5" y="2.5" width="10" height="7" rx="2" fill="#f2f8dc"/><rect x="4" y="4" width="2" height="2" fill="#222"/><rect x="10" y="5" width="2" height="2" fill="#222"/><rect x="6" y="9" width="2" height="2" fill="#222"/></svg>
<div class="t" style="left:138px;top:359.74px;font-size:12px;color:#000;transform:scaleX(0.947);transform-origin:0 0">tree_A_50cm_XY_alpha_export.shp</div>
<svg style="position:absolute;left:117px;top:374px" width="16" height="16" viewBox="0 0 16 16"><rect x="0.5" y="1.5" width="15" height="13" rx="2.5" fill="#dcebb0" stroke="#5e6e34"/><rect x="1.5" y="2.5" width="10" height="7" rx="2" fill="#f2f8dc"/><rect x="4" y="4" width="2" height="2" fill="#222"/><rect x="10" y="5" width="2" height="2" fill="#222"/><rect x="6" y="9" width="2" height="2" fill="#222"/></svg>
<div class="t" style="left:138px;top:376.74px;font-size:12px;color:#000;transform:scaleX(0.947);transform-origin:0 0">tree_A_50cm_XY_points.shp</div>
<svg style="position:absolute;left:117px;top:391px" width="16" height="16" viewBox="0 0 16 16"><rect x="0.5" y="1.5" width="15" height="13" rx="2.5" fill="#dcebb0" stroke="#5e6e34"/><rect x="1.5" y="2.5" width="10" height="7" rx="2" fill="#f2f8dc"/><rect x="3.5" y="3.5" width="9" height="9" fill="none" stroke="#222" stroke-width=".9"/><path d="M3.5 3.5l4 4h5M7.5 7.5v5" stroke="#222" stroke-width=".8"/><rect x="5" y="9" width="1.5" height="1.5" fill="#222"/><rect x="9" y="5" width="1.5" height="1.5" fill="#222"/></svg>
<div class="t" style="left:138px;top:393.74px;font-size:12px;color:#000;transform:scaleX(0.947);transform-origin:0 0">tree_A_50cm_XY_Voronoi.shp</div>
<svg style="position:absolute;left:117px;top:408px" width="16" height="16" viewBox="0 0 16 16"><rect x="0.5" y="1.5" width="15" height="13" rx="2.5" fill="#dcebb0" stroke="#5e6e34"/><rect x="1.5" y="2.5" width="10" height="7" rx="2" fill="#f2f8dc"/><rect x="3.5" y="3.5" width="9" height="9" fill="none" stroke="#222" stroke-width=".9"/><path d="M3.5 3.5l4 4h5M7.5 7.5v5" stroke="#222" stroke-width=".8"/><rect x="5" y="9" width="1.5" height="1.5" fill="#222"/><rect x="9" y="5" width="1.5" height="1.5" fill="#222"/></svg>
<div class="t" style="left:138px;top:410.74px;font-size:12px;color:#000;transform:scaleX(0.947);transform-origin:0 0">tree_A_50cm_XY_Voronoi_Density.shp</div>
<svg style="position:absolute;left:117px;top:425px" width="16" height="16" viewBox="0 0 16 16"><rect x="0.5" y="1.5" width="15" height="13" rx="2.5" fill="#dcebb0" stroke="#5e6e34"/><rect x="1.5" y="2.5" width="10" height="7" rx="2" fill="#f2f8dc"/><rect x="4" y="4" width="2" height="2" fill="#222"/><rect x="10" y="5" width="2" height="2" fill="#222"/><rect x="6" y="9" width="2" height="2" fill="#222"/></svg>
<div class="t" style="left:138px;top:427.74px;font-size:12px;color:#000;transform:scaleX(0.947);transform-origin:0 0">tree_A_50cm_XYZ_points.shp</div>
<svg style="position:absolute;left:117px;top:442px" width="16" height="16" viewBox="0 0 16 16"><rect x="0.5" y="1.5" width="15" height="13" rx="2.5" fill="#dcebb0" stroke="#5e6e34"/><rect x="1.5" y="2.5" width="10" height="7" rx="2" fill="#f2f8dc"/><path d="M2.5 7.5h11M4.5 5v2.5M10.5 7.5v3.5" stroke="#222" stroke-width="1.2"/></svg>
<div class="t" style="left:138px;top:444.74px;font-size:12px;color:#000;transform:scaleX(0.947);transform-origin:0 0">tree_A_50cm_XYZ_points_MinHull_Alpha.shp</div>
<svg style="position:absolute;left:117px;top:459px" width="16" height="16" viewBox="0 0 16 16"><rect x="0.5" y="1.5" width="15" height="13" rx="2.5" fill="#dcebb0" stroke="#5e6e34"/><rect x="1.5" y="2.5" width="10" height="7" rx="2" fill="#f2f8dc"/><rect x="3.5" y="3.5" width="9" height="9" fill="none" stroke="#222" stroke-width=".9"/><path d="M3.5 3.5l4 4h5M7.5 7.5v5" stroke="#222" stroke-width=".8"/><rect x="5" y="9" width="1.5" height="1.5" fill="#222"/><rect x="9" y="5" width="1.5" height="1.5" fill="#222"/></svg>
<div class="t" style="left:138px;top:461.74px;font-size:12px;color:#000;transform:scaleX(0.947);transform-origin:0 0">tree_A_50cm_XYZ_points_MinHull_Alpha_poly.shp</div>
<svg style="position:absolute;left:117px;top:476px" width="16" height="16" viewBox="0 0 16 16"><rect x="0.5" y="1.5" width="15" height="13" rx="2.5" fill="#dcebb0" stroke="#5e6e34"/><rect x="1.5" y="2.5" width="10" height="7" rx="2" fill="#f2f8dc"/><path d="M2.5 7.5h11M4.5 5v2.5M10.5 7.5v3.5" stroke="#222" stroke-width="1.2"/></svg>
<div class="t" style="left:138px;top:478.74px;font-size:12px;color:#000;transform:scaleX(0.947);transform-origin:0 0">Tree_A_50cm_XZ_alpha_0_convexHull.shp</div>
<svg style="position:absolute;left:117px;top:493px" width="16" height="16" viewBox="0 0 16 16"><rect x="0.5" y="1.5" width="15" height="13" rx="2.5" fill="#dcebb0" stroke="#5e6e34"/><rect x="1.5" y="2.5" width="10" height="7" rx="2" fill="#f2f8dc"/><path d="M2.5 7.5h11M4.5 5v2.5M10.5 7.5v3.5" stroke="#222" stroke-width="1.2"/></svg>
<div class="t" style="left:138px;top:495.74px;font-size:12px;color:#000;transform:scaleX(0.947);transform-origin:0 0">Tree_A_50cm_XZ_alpha_minus1_0706_minhull.shp</div>
<svg style="position:absolute;left:117px;top:510px" width="16" height="16" viewBox="0 0 16 16"><rect x="0.5" y="1.5" width="15" height="13" rx="2.5" fill="#dcebb0" stroke="#5e6e34"/><rect x="1.5" y="2.5" width="10" height="7" rx="2" fill="#f2f8dc"/><path d="M2.5 7.5h11M4.5 5v2.5M10.5 7.5v3.5" stroke="#222" stroke-width="1.2"/></svg>
<div class="t" style="left:138px;top:512.74px;font-size:12px;color:#000;transform:scaleX(0.947);transform-origin:0 0">Tree_A_50cm_XZ_alpha_minus1_14572_NNG.shp</div>
<svg style="position:absolute;left:117px;top:527px" width="16" height="16" viewBox="0 0 16 16"><rect x="0.5" y="1.5" width="15" height="13" rx="2.5" fill="#dcebb0" stroke="#5e6e34"/><rect x="1.5" y="2.5" width="10" height="7" rx="2" fill="#f2f8dc"/><path d="M2.5 7.5h11M4.5 5v2.5M10.5 7.5v3.5" stroke="#222" stroke-width="1.2"/></svg>
<div class="t" style="left:138px;top:529.74px;font-size:12px;color:#000;transform:scaleX(0.947);transform-origin:0 0">Tree_A_50cm_XZ_alpha_minus2_25104.shp</div>
<svg style="position:absolute;left:117px;top:544px" width="16" height="16" viewBox="0 0 16 16"><rect x="0.5" y="1.5" width="15" height="13" rx="2.5" fill="#dcebb0" stroke="#5e6e34"/><rect x="1.5" y="2.5" width="10" height="7" rx="2" fill="#f2f8dc"/><rect x="3.5" y="3.5" width="9" height="9" fill="none" stroke="#222" stroke-width=".9"/><path d="M3.5 3.5l4 4h5M7.5 7.5v5" stroke="#222" stroke-width=".8"/><rect x="5" y="9" width="1.5" height="1.5" fill="#222"/><rect x="9" y="5" width="1.5" height="1.5" fill="#222"/></svg>
<div class="t" style="left:138px;top:546.74px;font-size:12px;color:#000;transform:scaleX(0.947);transform-origin:0 0">Tree_A_50cm_XZ_Delaunay.shp</div>
<svg style="position:absolute;left:117px;top:561px" width="16" height="16" viewBox="0 0 16 16"><path d="M2.5 0.5h8l3 3v12h-11z" fill="#fff" stroke="#6a7a9a"/><path d="M10.5 0.5v3h3" fill="#dde" stroke="#6a7a9a"/><path d="M4.5 5.5h7M4.5 7.5h7M4.5 9.5h7M4.5 11.5h7M4.5 13.5h7" stroke="#8fb4e8" stroke-width=".8"/></svg>
<div class="t" style="left:138px;top:563.74px;font-size:12px;color:#000;transform:scaleX(0.947);transform-origin:0 0">Tree_A_50cm_XZ_ID_Added.txt</div>
<svg style="position:absolute;left:117px;top:578px" width="16" height="16" viewBox="0 0 16 16"><rect x="0.5" y="1.5" width="15" height="13" rx="2.5" fill="#dcebb0" stroke="#5e6e34"/><rect x="1.5" y="2.5" width="10" height="7" rx="2" fill="#f2f8dc"/><path d="M2.5 7.5h11M4.5 5v2.5M10.5 7.5v3.5" stroke="#222" stroke-width="1.2"/></svg>
<div class="t" style="left:138px;top:580.74px;font-size:12px;color:#000;transform:scaleX(0.947);transform-origin:0 0">Tree_A_50cm_XZ_NNG.shp</div>
<svg style="position:absolute;left:117px;top:595px" width="16" height="16" viewBox="0 0 16 16"><path d="M2.5 0.5h8l3 3v12h-11z" fill="#fff" stroke="#6a7a9a"/><path d="M10.5 0.5v3h3" fill="#dde" stroke="#6a7a9a"/><path d="M4.5 5.5h7M4.5 7.5h7M4.5 9.5h7M4.5 11.5h7M4.5 13.5h7" stroke="#8fb4e8" stroke-width=".8"/></svg>
<div class="t" style="left:138px;top:597.74px;font-size:12px;color:#000;transform:scaleX(0.947);transform-origin:0 0">Tree_A_50cm_XZ_NO_ID_Added.csv</div>
<svg style="position:absolute;left:117px;top:612px" width="16" height="16" viewBox="0 0 16 16"><rect x="0.5" y="1.5" width="15" height="13" rx="2.5" fill="#dcebb0" stroke="#5e6e34"/><rect x="1.5" y="2.5" width="10" height="7" rx="2" fill="#f2f8dc"/><rect x="4" y="4" width="2" height="2" fill="#222"/><rect x="10" y="5" width="2" height="2" fill="#222"/><rect x="6" y="9" width="2" height="2" fill="#222"/></svg>
<div class="t" style="left:138px;top:614.74px;font-size:12px;color:#000;transform:scaleX(0.947);transform-origin:0 0">Tree_A_50cm_XZ_points.shp</div>
<svg style="position:absolute;left:117px;top:629px" width="16" height="16" viewBox="0 0 16 16"><rect x="0.5" y="1.5" width="15" height="13" rx="2.5" fill="#dcebb0" stroke="#5e6e34"/><rect x="1.5" y="2.5" width="10" height="7" rx="2" fill="#f2f8dc"/><path d="M2.5 7.5h11M4.5 5v2.5M10.5 7.5v3.5" stroke="#222" stroke-width="1.2"/></svg>
<div class="t" style="left:138px;top:631.74px;font-size:12px;color:#000;transform:scaleX(0.947);transform-origin:0 0">Tree_A_50cm_XZ_polylines.shp</div>
<svg style="position:absolute;left:117px;top:646px" width="16" height="16" viewBox="0 0 16 16"><rect x="0.5" y="1.5" width="15" height="13" rx="2.5" fill="#dcebb0" stroke="#5e6e34"/><rect x="1.5" y="2.5" width="10" height="7" rx="2" fill="#f2f8dc"/><path d="M2.5 7.5h11M4.5 5v2.5M10.5 7.5v3.5" stroke="#222" stroke-width="1.2"/></svg>
<div style="left:135px;top:646px;width:200px;height:17px;background:#e6e6e6"></div>
<div class="t" style="left:138px;top:648.74px;font-size:12px;color:#000;transform:scaleX(0.947);transform-origin:0 0">Tree_A_50cm_YX_MINHull_Alpha.shp</div>
<svg style="position:absolute;left:117px;top:663px" width="16" height="16" viewBox="0 0 16 16"><rect x="0.5" y="1.5" width="15" height="13" rx="2.5" fill="#dcebb0" stroke="#5e6e34"/><rect x="1.5" y="2.5" width="10" height="7" rx="2" fill="#f2f8dc"/><path d="M2.5 7.5h11M4.5 5v2.5M10.5 7.5v3.5" stroke="#222" stroke-width="1.2"/></svg>
<div class="t" style="left:138px;top:665.74px;font-size:12px;color:#000;transform:scaleX(0.947);transform-origin:0 0">Tree_A_50cm_YX_NNG_alpha_minus0pnt940147.shp</div>
<svg style="position:absolute;left:117px;top:680px" width="16" height="16" viewBox="0 0 16 16"><rect x="0.5" y="1.5" width="15" height="13" rx="2.5" fill="#dcebb0" stroke="#5e6e34"/><rect x="1.5" y="2.5" width="10" height="7" rx="2" fill="#f2f8dc"/><rect x="3.5" y="3.5" width="9" height="9" fill="none" stroke="#222" stroke-width=".9"/><path d="M3.5 3.5l4 4h5M7.5 7.5v5" stroke="#222" stroke-width=".8"/><rect x="5" y="9" width="1.5" height="1.5" fill="#222"/><rect x="9" y="5" width="1.5" height="1.5" fill="#222"/></svg>
<div class="t" style="left:138px;top:682.74px;font-size:12px;color:#000;transform:scaleX(0.947);transform-origin:0 0">Tree_A_50cm_YX_NNG_alpha_minus0pnt940147_polygon.shp</div>
<svg style="position:absolute;left:117px;top:697px" width="16" height="16" viewBox="0 0 16 16"><rect x="0.5" y="1.5" width="15" height="13" rx="2.5" fill="#dcebb0" stroke="#5e6e34"/><rect x="1.5" y="2.5" width="10" height="7" rx="2" fill="#f2f8dc"/><rect x="4" y="4" width="2" height="2" fill="#222"/><rect x="10" y="5" width="2" height="2" fill="#222"/><rect x="6" y="9" width="2" height="2" fill="#222"/></svg>
<div class="t" style="left:138px;top:699.74px;font-size:12px;color:#000;transform:scaleX(0.947);transform-origin:0 0">tree_A_50cm_YX_pnts_Voronoi_Density_spatial_join.shp</div>
<svg style="position:absolute;left:117px;top:714px" width="16" height="16" viewBox="0 0 16 16"><rect x="0.5" y="1.5" width="15" height="13" rx="2.5" fill="#dcebb0" stroke="#5e6e34"/><rect x="1.5" y="2.5" width="10" height="7" rx="2" fill="#f2f8dc"/><rect x="4" y="4" width="2" height="2" fill="#222"/><rect x="10" y="5" width="2" height="2" fill="#222"/><rect x="6" y="9" width="2" height="2" fill="#222"/></svg>
<div class="t" style="left:138px;top:716.74px;font-size:12px;color:#000;transform:scaleX(0.947);transform-origin:0 0">Tree_A_50cm_YX_points.shp</div>
<svg style="position:absolute;left:117px;top:731px" width="16" height="16" viewBox="0 0 16 16"><path d="M2.5 0.5h8l3 3v12h-11z" fill="#fff" stroke="#6a7a9a"/><path d="M10.5 0.5v3h3" fill="#dde" stroke="#6a7a9a"/><path d="M4.5 5.5h7M4.5 7.5h7M4.5 9.5h7M4.5 11.5h7M4.5 13.5h7" stroke="#8fb4e8" stroke-width=".8"/></svg>
<div class="t" style="left:138px;top:733.74px;font-size:12px;color:#000;transform:scaleX(0.947);transform-origin:0 0">Tree_A_50cm_YX_stem_points_no_ID.txt</div>
<svg style="position:absolute;left:117px;top:748px" width="16" height="16" viewBox="0 0 16 16"><rect x="0.5" y="1.5" width="15" height="13" rx="2.5" fill="#dcebb0" stroke="#5e6e34"/><rect x="1.5" y="2.5" width="10" height="7" rx="2" fill="#f2f8dc"/><rect x="3.5" y="3.5" width="9" height="9" fill="none" stroke="#222" stroke-width=".9"/><path d="M3.5 3.5l4 4h5M7.5 7.5v5" stroke="#222" stroke-width=".8"/><rect x="5" y="9" width="1.5" height="1.5" fill="#222"/><rect x="9" y="5" width="1.5" height="1.5" fill="#222"/></svg>
<div class="t" style="left:138px;top:750.74px;font-size:12px;color:#000;transform:scaleX(0.947);transform-origin:0 0">tree_A_50cm_YX_Voronoi_Density.shp</div>
<svg style="position:absolute;left:117px;top:765px" width="16" height="16" viewBox="0 0 16 16"><path d="M2.5 0.5h8l3 3v12h-11z" fill="#fff" stroke="#6a7a9a"/><path d="M10.5 0.5v3h3" fill="#dde" stroke="#6a7a9a"/><path d="M4.5 5.5h7M4.5 7.5h7M4.5 9.5h7M4.5 11.5h7M4.5 13.5h7" stroke="#8fb4e8" stroke-width=".8"/></svg>
<div class="t" style="left:138px;top:767.74px;font-size:12px;color:#000;transform:scaleX(0.947);transform-origin:0 0">Tree_A_50cm_YZ_No_ID.csv</div>
<svg style="position:absolute;left:117px;top:782px" width="16" height="16" viewBox="0 0 16 16"><rect x="0.5" y="1.5" width="15" height="13" rx="2.5" fill="#dcebb0" stroke="#5e6e34"/><rect x="1.5" y="2.5" width="10" height="7" rx="2" fill="#f2f8dc"/><rect x="4" y="4" width="2" height="2" fill="#222"/><rect x="10" y="5" width="2" height="2" fill="#222"/><rect x="6" y="9" width="2" height="2" fill="#222"/></svg>
<div class="t" style="left:138px;top:784.74px;font-size:12px;color:#000;transform:scaleX(0.947);transform-origin:0 0">Tree_A_50cm_YZ_points.shp</div>
<svg style="position:absolute;left:117px;top:799px" width="16" height="16" viewBox="0 0 16 16"><rect x="0.5" y="1.5" width="15" height="13" rx="2.5" fill="#dcebb0" stroke="#5e6e34"/><rect x="1.5" y="2.5" width="10" height="7" rx="2" fill="#f2f8dc"/><rect x="4" y="4" width="2" height="2" fill="#222"/><rect x="10" y="5" width="2" height="2" fill="#222"/><rect x="6" y="9" width="2" height="2" fill="#222"/></svg>
<div class="t" style="left:138px;top:801.74px;font-size:12px;color:#000;transform:scaleX(0.947);transform-origin:0 0">Tree_A_50cm_YZ_stem_points.shp</div>
<svg style="position:absolute;left:117px;top:816px" width="16" height="16" viewBox="0 0 16 16"><path d="M2.5 0.5h8l3 3v12h-11z" fill="#fff" stroke="#6a7a9a"/><path d="M10.5 0.5v3h3" fill="#dde" stroke="#6a7a9a"/><path d="M4.5 5.5h7M4.5 7.5h7M4.5 9.5h7M4.5 11.5h7M4.5 13.5h7" stroke="#8fb4e8" stroke-width=".8"/></svg>
</div>
<div style="left:1897px;top:100px;width:23px;height:917px;background:#fafafa"></div>
<div style="left:1900px;top:102px;width:20px;height:149px;background:#f0f0f0;border:1px solid #a9a9a9;border-right:none;border-radius:4px 0 0 4px"></div>
<svg style="position:absolute;left:1902px;top:106px" width="16" height="16" viewBox="0 0 16 16"><rect x="0.5" y="0.5" width="15" height="15" fill="#fff" stroke="#3a5a8a"/><path d="M3 12l5-8 5 8" stroke="#1a8a1a" stroke-width="1.5" fill="none"/><rect x="2" y="11" width="3" height="3" fill="#d00"/><rect x="11" y="11" width="3" height="3" fill="#d00"/></svg>
<div class="t" style="left:1904px;top:128px;font-size:11.7px;color:#6a6a6a;writing-mode:vertical-rl;">Edit Sketch Properties</div>
<div style="left:1900px;top:253px;width:20px;height:114px;background:#f0f0f0;border:1px solid #a9a9a9;border-right:none;border-radius:4px 0 0 4px"></div>
<svg style="position:absolute;left:1902px;top:257px" width="16" height="16" viewBox="0 0 16 16"><rect x="0.5" y="2.5" width="12" height="13" fill="#fff" stroke="#3a5a8a"/><path d="M3 6h3M3 9h3M3 12h3" stroke="#1a6ac0" stroke-width="1.5"/><path d="M8 10l6-8 1.5 1-6 8z" fill="#f0b030" stroke="#6a4a10" stroke-width=".6"/></svg>
<div class="t" style="left:1904px;top:279px;font-size:11.7px;color:#6a6a6a;writing-mode:vertical-rl;">Create Features</div>
<div style="left:1900px;top:382px;width:20px;height:87px;background:#f0f0f0;border:1px solid #a9a9a9;border-right:none;border-radius:4px 0 0 4px"></div>
<svg style="position:absolute;left:1902px;top:386px" width="16" height="16" viewBox="0 0 16 16"><rect x="0.5" y="0.5" width="15" height="15" fill="#fff" stroke="#3a5a8a"/><rect x="0.5" y="0.5" width="15" height="3" fill="#1a4aa0"/><rect x="2" y="6" width="12" height="8" fill="#c83a2a" stroke="#6a1a10" stroke-width=".6"/></svg>
<div class="t" style="left:1904px;top:408px;font-size:11.7px;color:#6a6a6a;writing-mode:vertical-rl;">ArcToolbox</div>
<div style="left:22px;top:769px;width:1338px;height:25px;background:linear-gradient(90deg,#c1cedc,#d6e3f0)"></div>
<div class="t" style="left:26px;top:775.3px;font-size:15px;color:#000;letter-spacing:-0.12px">Table</div>
<svg style="position:absolute;left:1346px;top:776px" width="10" height="10"><path d="M1 1L9 9M9 1L1 9" stroke="#000" stroke-width="1.7"/></svg>
<svg style="position:absolute;left:1331px;top:777px" width="8" height="10"><rect x="1" y="0" width="6" height="1.2" fill="#000"/><rect x="1" y="0" width="2.2" height="5.5" fill="#000"/><rect x="5.8" y="0" width="1.2" height="5.5" fill="#000"/><rect x="0" y="5" width="8" height="1.5" fill="#000"/><rect x="3.4" y="6" width="1.3" height="4" fill="#000"/></svg>
<div style="left:22px;top:794px;width:1338px;height:26px;background:#f0f0f0"></div>
<div style="left:25px;top:795px;width:1335px;height:25px;background:linear-gradient(#fcfcfc,#f0f0f0);border-radius:3px 0 0 3px"></div>
<svg style="position:absolute;left:29px;top:799px" width="16" height="16" viewBox="0 0 16 16"><rect x="1.5" y="1.5" width="12" height="13" fill="#fff" stroke="#4a5a7a"/><circle cx="4.5" cy="5" r="1.2" fill="none" stroke="#333" stroke-width=".7"/><circle cx="4.5" cy="11" r="1.2" fill="none" stroke="#333" stroke-width=".7"/><path d="M7 5h5M7 11h5M7 8h5" stroke="#6a8ac0"/></svg>
<svg style="position:absolute;left:49px;top:806px" width="7" height="4"><path d="M0 0h7l-3.5 3.5z" fill="#222"/></svg>
<div style="left:61px;top:800px;width:1px;height:15px;background:#c8c8c8"></div>
<svg style="position:absolute;left:68px;top:799px" width="16" height="16" viewBox="0 0 16 16"><rect x="0.5" y="0.5" width="9" height="6" fill="#8ad8f0" stroke="#3a6a8a"/><path d="M1 2.5h8M1 4.5h8" stroke="#fff" stroke-width=".6"/><rect x="5.5" y="9.5" width="10" height="6" fill="#8ad8f0" stroke="#3a6a8a"/><path d="M6 11.5h9M6 13.5h9" stroke="#fff" stroke-width=".6"/><path d="M10 3h4v5M1 8v4h4" stroke="#000" stroke-width="1.2" fill="none"/></svg>
<svg style="position:absolute;left:88px;top:806px" width="7" height="4"><path d="M0 0h7l-3.5 3.5z" fill="#222"/></svg>
<div style="left:101px;top:800px;width:1px;height:15px;background:#c8c8c8"></div>
<svg style="position:absolute;left:107px;top:799px" width="16" height="16" viewBox="0 0 16 16"><rect x="0.5" y="0.5" width="9" height="10" fill="#fff" stroke="#333"/><path d="M1 1h4l3 9H1z" fill="#00c8e8"/><rect x="6.5" y="7.5" width="9" height="8" fill="#fff" stroke="#333"/><path d="M7 10h8M7 12.5h8M10 8v7M13 8v7" stroke="#555" stroke-width=".7"/></svg>
<svg style="position:absolute;left:129px;top:799px" width="16" height="16" viewBox="0 0 16 16"><path d="M0.5 0.5h15v15h-15z" fill="#fff" stroke="#444" stroke-width=".8"/><path d="M1 1h4l4 14H1z" fill="#18c8ea"/><path d="M9 1h6v14h-2z" fill="#18c8ea"/><path d="M3.5 15V10M1.5 12l2-2 2 2M12 1v5M10 4l2 2 2-2" stroke="#1a4aa0" stroke-width="1.3" fill="none"/></svg>
<svg style="position:absolute;left:152px;top:799px" width="16" height="16" viewBox="0 0 16 16"><rect x="1.5" y="1.5" width="11" height="11" fill="#f4f4f4" stroke="#c4c4c4"/><path d="M4 3l3 5 3-5M7 8v5" stroke="#c4c4c4" fill="none"/></svg>
<svg style="position:absolute;left:173px;top:799px" width="16" height="16" viewBox="0 0 16 16"><rect x="5.5" y="1.5" width="10" height="9" fill="#f4f4f4" stroke="#c4c4c4"/><circle cx="5" cy="10" r="3.5" fill="#fff" stroke="#c4c4c4"/><path d="M3 10h4M5 8v4M8 13l3 3" stroke="#c4c4c4"/></svg>
<svg style="position:absolute;left:195px;top:799px" width="16" height="16" viewBox="0 0 16 16"><path d="M3 3l10 10M13 3L3 13" stroke="#aaa" stroke-width="2.2"/></svg>
<div style="left:22px;top:820px;width:1338px;height:25px;background:linear-gradient(90deg,#c1cedc,#d6e3f0)"></div>
<div class="t" style="left:26px;top:826px;font-size:14.5px;color:#111;">alpha_minus3pnt8_poly_1mbuf_6trees</div>
<svg style="position:absolute;left:1346px;top:828px" width="10" height="10"><path d="M1 1L9 9M9 1L1 9" stroke="#000" stroke-width="1.7"/></svg>
<div style="left:22px;top:845px;width:1338px;height:124px;background:#f0f0f0;border-top:2px solid #6b6b6b;border-left:2px solid #6b6b6b"></div>
<div style="left:24px;top:847px;width:1336px;height:2px;background:#a0a0a0"></div>
<div style="left:24px;top:847px;width:2px;height:122px;background:#a0a0a0"></div>
<div style="left:1341px;top:849px;width:16px;height:120px;background:#f0f0f0"></div>
<div style="left:1341px;top:866px;width:16px;height:18px;background:#cdcdcd"></div>
<svg style="position:absolute;left:1344px;top:853px" width="10" height="7"><path d="M1 6l4-4 4 4" stroke="#555" stroke-width="2" fill="none"/></svg>
<svg style="position:absolute;left:1344px;top:958px" width="10" height="7"><path d="M1 1l4 4 4-4" stroke="#555" stroke-width="2" fill="none"/></svg>
<div style="left:26px;top:849px;width:1315px;height:120px;overflow:hidden">
<div style="left:0px;top:1px;width:14px;height:16px;background:#f0f0f0;border-top:1px solid #fff;border-left:1px solid #fff;border-right:2px solid #000;border-bottom:2px solid #000"></div>
<div style="left:14px;top:1px;width:35px;height:16px;background:#f0f0f0;border-top:1px solid #fff;border-left:1px solid #fff;border-right:2px solid #000;border-bottom:2px solid #000"></div>
<div class="t" style="left:15px;top:5px;width:35px;text-align:center;font-size:10.2px;font-weight:bold;color:#000">FID</div>
<div style="left:49px;top:1px;width:63px;height:16px;background:#f0f0f0;border-top:1px solid #fff;border-left:1px solid #fff;border-right:2px solid #000;border-bottom:2px solid #000"></div>
<div class="t" style="left:50px;top:5px;width:63px;text-align:center;font-size:10.2px;font-weight:bold;color:#000">Shape *</div>
<div style="left:112px;top:1px;width:28px;height:16px;background:#f0f0f0;border-top:1px solid #fff;border-left:1px solid #fff;border-right:2px solid #000;border-bottom:2px solid #000"></div>
<div class="t" style="left:113px;top:5px;width:28px;text-align:center;font-size:10.2px;font-weight:bold;color:#000">Id</div>
<div style="left:140px;top:1px;width:77px;height:16px;background:#f0f0f0;border-top:1px solid #fff;border-left:1px solid #fff;border-right:2px solid #000;border-bottom:2px solid #000"></div>
<div class="t" style="left:141px;top:5px;width:77px;text-align:center;font-size:10.2px;font-weight:bold;color:#000">BUFF_DIST</div>
<div style="left:217px;top:1px;width:70px;height:16px;background:#f0f0f0;border-top:1px solid #fff;border-left:1px solid #fff;border-right:2px solid #000;border-bottom:2px solid #000"></div>
<div class="t" style="left:218px;top:5px;width:70px;text-align:center;font-size:10.2px;font-weight:bold;color:#000">ORIG_FID</div>
<div style="left:0px;top:17px;width:14px;height:16px;background:#f0f0f0;border-top:1px solid #fff;border-left:1px solid #fff;border-right:2px solid #000;border-bottom:2px solid #000"></div>
<div style="left:14px;top:17px;width:36px;height:17px;background:#fff;border:1px solid #6a6a6a"></div>
<div class="t" style="left:14px;top:21px;width:31px;text-align:right;font-size:10.4px;color:#000">0</div>
<div style="left:49px;top:17px;width:64px;height:17px;background:#fff;border:1px solid #6a6a6a"></div>
<div class="t" style="left:53px;top:21.5px;font-size:10.4px;color:#000;">Polygon</div>
<div style="left:112px;top:17px;width:29px;height:17px;background:#fff;border:1px solid #6a6a6a"></div>
<div class="t" style="left:112px;top:21px;width:24px;text-align:right;font-size:10.4px;color:#000">0</div>
<div style="left:140px;top:17px;width:78px;height:17px;background:#fff;border:1px solid #6a6a6a"></div>
<div class="t" style="left:140px;top:21px;width:73px;text-align:right;font-size:10.4px;color:#000">1</div>
<div style="left:217px;top:17px;width:71px;height:17px;background:#fff;border:1px solid #6a6a6a"></div>
<div class="t" style="left:217px;top:21px;width:66px;text-align:right;font-size:10.4px;color:#000">0</div>
<div style="left:14px;top:17px;width:36px;height:17px;border:2px solid #000"></div>
<svg style="position:absolute;left:6px;top:21px" width="5" height="8"><path d="M0 0l4 4-4 4z" fill="#000"/></svg>
<div style="left:0px;top:33px;width:14px;height:16px;background:#f0f0f0;border-top:1px solid #fff;border-left:1px solid #fff;border-right:2px solid #000;border-bottom:2px solid #000"></div>
<div style="left:14px;top:33px;width:36px;height:17px;background:#fff;border:1px solid #6a6a6a"></div>
<div class="t" style="left:14px;top:37px;width:31px;text-align:right;font-size:10.4px;color:#000">1</div>
<div style="left:49px;top:33px;width:64px;height:17px;background:#fff;border:1px solid #6a6a6a"></div>
<div class="t" style="left:53px;top:37.5px;font-size:10.4px;color:#000;">Polygon</div>
<div style="left:112px;top:33px;width:29px;height:17px;background:#fff;border:1px solid #6a6a6a"></div>
<div class="t" style="left:112px;top:37px;width:24px;text-align:right;font-size:10.4px;color:#000">0</div>
<div style="left:140px;top:33px;width:78px;height:17px;background:#fff;border:1px solid #6a6a6a"></div>
<div class="t" style="left:140px;top:37px;width:73px;text-align:right;font-size:10.4px;color:#000">1</div>
<div style="left:217px;top:33px;width:71px;height:17px;background:#fff;border:1px solid #6a6a6a"></div>
<div class="t" style="left:217px;top:37px;width:66px;text-align:right;font-size:10.4px;color:#000">1</div>
<div style="left:0px;top:49px;width:14px;height:16px;background:#f0f0f0;border-top:1px solid #fff;border-left:1px solid #fff;border-right:2px solid #000;border-bottom:2px solid #000"></div>
<div style="left:14px;top:49px;width:36px;height:17px;background:#fff;border:1px solid #6a6a6a"></div>
<div class="t" style="left:14px;top:53px;width:31px;text-align:right;font-size:10.4px;color:#000">2</div>
<div style="left:49px;top:49px;width:64px;height:17px;background:#fff;border:1px solid #6a6a6a"></div>
<div class="t" style="left:53px;top:53.5px;font-size:10.4px;color:#000;">Polygon</div>
<div style="left:112px;top:49px;width:29px;height:17px;background:#fff;border:1px solid #6a6a6a"></div>
<div class="t" style="left:112px;top:53px;width:24px;text-align:right;font-size:10.4px;color:#000">0</div>
<div style="left:140px;top:49px;width:78px;height:17px;background:#fff;border:1px solid #6a6a6a"></div>
<div class="t" style="left:140px;top:53px;width:73px;text-align:right;font-size:10.4px;color:#000">1</div>
<div style="left:217px;top:49px;width:71px;height:17px;background:#fff;border:1px solid #6a6a6a"></div>
<div class="t" style="left:217px;top:53px;width:66px;text-align:right;font-size:10.4px;color:#000">2</div>
<div style="left:0px;top:65px;width:14px;height:16px;background:#f0f0f0;border-top:1px solid #fff;border-left:1px solid #fff;border-right:2px solid #000;border-bottom:2px solid #000"></div>
<div style="left:14px;top:65px;width:36px;height:17px;background:#fff;border:1px solid #6a6a6a"></div>
<div class="t" style="left:14px;top:69px;width:31px;text-align:right;font-size:10.4px;color:#000">3</div>
<div style="left:49px;top:65px;width:64px;height:17px;background:#fff;border:1px solid #6a6a6a"></div>
<div class="t" style="left:53px;top:69.5px;font-size:10.4px;color:#000;">Polygon</div>
<div style="left:112px;top:65px;width:29px;height:17px;background:#fff;border:1px solid #6a6a6a"></div>
<div class="t" style="left:112px;top:69px;width:24px;text-align:right;font-size:10.4px;color:#000">0</div>
<div style="left:140px;top:65px;width:78px;height:17px;background:#fff;border:1px solid #6a6a6a"></div>
<div class="t" style="left:140px;top:69px;width:73px;text-align:right;font-size:10.4px;color:#000">1</div>
<div style="left:217px;top:65px;width:71px;height:17px;background:#fff;border:1px solid #6a6a6a"></div>
<div class="t" style="left:217px;top:69px;width:66px;text-align:right;font-size:10.4px;color:#000">3</div>
<div style="left:0px;top:81px;width:14px;height:16px;background:#f0f0f0;border-top:1px solid #fff;border-left:1px solid #fff;border-right:2px solid #000;border-bottom:2px solid #000"></div>
<div style="left:14px;top:81px;width:36px;height:17px;background:#fff;border:1px solid #6a6a6a"></div>
<div class="t" style="left:14px;top:85px;width:31px;text-align:right;font-size:10.4px;color:#000">4</div>
<div style="left:49px;top:81px;width:64px;height:17px;background:#fff;border:1px solid #6a6a6a"></div>
<div class="t" style="left:53px;top:85.5px;font-size:10.4px;color:#000;">Polygon</div>
<div style="left:112px;top:81px;width:29px;height:17px;background:#fff;border:1px solid #6a6a6a"></div>
<div class="t" style="left:112px;top:85px;width:24px;text-align:right;font-size:10.4px;color:#000">0</div>
<div style="left:140px;top:81px;width:78px;height:17px;background:#fff;border:1px solid #6a6a6a"></div>
<div class="t" style="left:140px;top:85px;width:73px;text-align:right;font-size:10.4px;color:#000">1</div>
<div style="left:217px;top:81px;width:71px;height:17px;background:#fff;border:1px solid #6a6a6a"></div>
<div class="t" style="left:217px;top:85px;width:66px;text-align:right;font-size:10.4px;color:#000">4</div>
<div style="left:0px;top:97px;width:14px;height:16px;background:#f0f0f0;border-top:1px solid #fff;border-left:1px solid #fff;border-right:2px solid #000;border-bottom:2px solid #000"></div>
<div style="left:14px;top:97px;width:36px;height:17px;background:#fff;border:1px solid #6a6a6a"></div>
<div class="t" style="left:14px;top:101px;width:31px;text-align:right;font-size:10.4px;color:#000">5</div>
<div style="left:49px;top:97px;width:64px;height:17px;background:#fff;border:1px solid #6a6a6a"></div>
<div class="t" style="left:53px;top:101.5px;font-size:10.4px;color:#000;">Polygon</div>
<div style="left:112px;top:97px;width:29px;height:17px;background:#fff;border:1px solid #6a6a6a"></div>
<div class="t" style="left:112px;top:101px;width:24px;text-align:right;font-size:10.4px;color:#000">0</div>
<div style="left:140px;top:97px;width:78px;height:17px;background:#fff;border:1px solid #6a6a6a"></div>
<div class="t" style="left:140px;top:101px;width:73px;text-align:right;font-size:10.4px;color:#000">1</div>
<div style="left:217px;top:97px;width:71px;height:17px;background:#fff;border:1px solid #6a6a6a"></div>
<div class="t" style="left:217px;top:101px;width:66px;text-align:right;font-size:10.4px;color:#000">5</div>
<div style="left:0px;top:113px;width:14px;height:16px;background:#f0f0f0;border-top:1px solid #fff;border-left:1px solid #fff;border-right:2px solid #000;border-bottom:2px solid #000"></div>
<div style="left:14px;top:113px;width:36px;height:17px;background:#fff;border:1px solid #6a6a6a"></div>
<div class="t" style="left:14px;top:117px;width:31px;text-align:right;font-size:10.4px;color:#000">6</div>
<div style="left:49px;top:113px;width:64px;height:17px;background:#fff;border:1px solid #6a6a6a"></div>
<div class="t" style="left:53px;top:117.5px;font-size:10.4px;color:#000;">Polygon</div>
<div style="left:112px;top:113px;width:29px;height:17px;background:#fff;border:1px solid #6a6a6a"></div>
<div class="t" style="left:112px;top:117px;width:24px;text-align:right;font-size:10.4px;color:#000">0</div>
<div style="left:140px;top:113px;width:78px;height:17px;background:#fff;border:1px solid #6a6a6a"></div>
<div class="t" style="left:140px;top:117px;width:73px;text-align:right;font-size:10.4px;color:#000">1</div>
<div style="left:217px;top:113px;width:71px;height:17px;background:#fff;border:1px solid #6a6a6a"></div>
<div class="t" style="left:217px;top:117px;width:66px;text-align:right;font-size:10.4px;color:#000">6</div>
</div>
<div style="left:24px;top:969px;width:1336px;height:29px;background:linear-gradient(#f6f6f6,#f0f0f0);border-bottom:1px solid #dcdcdc"></div>
<div style="left:22px;top:969px;width:2px;height:29px;background:#6b6b6b"></div>
<svg style="position:absolute;left:34px;top:978px" width="10" height="9"><path d="M1 0v9" stroke="#111" stroke-width="1.6"/><path d="M9 0v9L3 4.5z" fill="#111"/></svg>
<svg style="position:absolute;left:58px;top:978px" width="6" height="9"><path d="M5 0v9L0 4.5z" fill="#111"/></svg>
<div style="left:73px;top:974px;width:58px;height:20px;background:#fff"></div>
<div class="t" style="left:121px;top:978px;font-size:11.5px;color:#000;">1</div>
<svg style="position:absolute;left:141px;top:978px" width="6" height="9"><path d="M0 0v9l5-4.5z" fill="#111"/></svg>
<svg style="position:absolute;left:160px;top:978px" width="10" height="9"><path d="M0 0v9l6-4.5z" fill="#111"/><path d="M8 0v9" stroke="#111" stroke-width="1.6"/></svg>
<div style="left:178px;top:977px;width:1px;height:16px;background:#c8c8c8"></div>
<div style="left:182px;top:974px;width:23px;height:22px;background:#e5f1fb;border:1px solid #3c8de0"></div>
<svg style="position:absolute;left:186px;top:977px" width="15" height="16" viewBox="0 0 15 16"><rect x="0.5" y="0.5" width="13" height="14" rx="1" fill="#8ad8f0" stroke="#333"/><path d="M2 3h10M2 5.5h10M2 8h10M2 10.5h10M2 13h10" stroke="#fff"/></svg>
<svg style="position:absolute;left:208px;top:976px" width="16" height="10" viewBox="0 0 16 10"><rect x="0.5" y="0.5" width="14" height="8" rx="1" fill="#8ad8f0" stroke="#333"/><path d="M2 3h11M2 5.5h11" stroke="#fff"/></svg>
<div style="left:229px;top:977px;width:1px;height:16px;background:#c8c8c8"></div>
<div class="t" style="left:236px;top:978px;font-size:11.55px;color:#000;">(0 out of 102 Selected)</div>
<div style="left:24px;top:999px;width:272px;height:18px;background:#f0f0f0;border:1px solid #aaaaaa;border-top:none;border-radius:0 0 3px 3px"></div>
<div class="t" style="left:30px;top:1003px;font-size:11.6px;color:#6d6d6d;">NNG_50cm_alpha_minus1pnt5119_poly_50cmbuf</div>
<div style="left:297px;top:998px;width:212px;height:19px;background:#fff;border:1px solid #aaaaaa;border-top:none;border-radius:0 0 3px 3px"></div>
<div class="t" style="left:302px;top:1003px;font-size:11.6px;color:#000;">alpha_minus3pnt8_poly_1mbuf_6trees</div>
<div style="left:0px;top:1017px;width:1920px;height:23px;background:linear-gradient(90deg,#eeeeee,#f6f6f6 50%,#f8f8f8)"></div>
<div style="left:1515px;top:1020px;width:1px;height:18px;background:#e2e2e2"></div>
<div style="left:1645px;top:1020px;width:1px;height:18px;background:#e2e2e2"></div>
<div style="left:1660px;top:1020px;width:1px;height:18px;background:#e2e2e2"></div>
<div class="t" style="left:1667px;top:1025.5px;font-size:11.45px;color:#000;">32.967  -47.698 Decimal Degrees</div>
<div style="left:0px;top:1040px;width:1920px;height:40px;background:#434b33"></div>
<svg style="position:absolute;left:12px;top:1047px" width="26" height="26" viewBox="0 0 26 26"><path d="M0 3.5L10 2v10H0zM11.5 1.8L24 0v12H11.5zM0 13.5h10V24L0 22.5zM11.5 13.5H24V26L11.5 24z" fill="#fff"/></svg>
<div style="left:114px;top:1041px;width:58px;height:38px;background:rgba(255,255,255,0.18);border:1px solid rgba(255,255,255,0.28)"></div>
<div style="left:176px;top:1041px;width:58px;height:38px;background:rgba(255,255,255,0.18);border:1px solid rgba(255,255,255,0.28)"></div>
<div style="left:238px;top:1041px;width:58px;height:38px;background:rgba(255,255,255,0.18);border:1px solid rgba(255,255,255,0.28)"></div>
<div style="left:424px;top:1041px;width:58px;height:38px;background:rgba(255,255,255,0.18);border:1px solid rgba(255,255,255,0.28)"></div>
<div style="left:486px;top:1041px;width:58px;height:38px;background:rgba(255,255,255,0.18);border:1px solid rgba(255,255,255,0.28)"></div>
<div style="left:548px;top:1041px;width:58px;height:38px;background:rgba(255,255,255,0.18);border:1px solid rgba(255,255,255,0.28)"></div>
<div style="left:610px;top:1041px;width:58px;height:38px;background:rgba(200,225,245,0.55);border:1px solid rgba(230,240,255,0.7)"></div>
<svg style="position:absolute;left:65px;top:1043px" width="36" height="36" viewBox="0 0 36 36"><ellipse cx="15.5" cy="17" rx="19" ry="7" transform="rotate(-47 15.5 17)" fill="none" stroke="#f3c41e" stroke-width="2.3"/><circle cx="17.5" cy="17" r="13" fill="#3bb6ef"/><circle cx="17.5" cy="17" r="9.5" fill="#8fe4fb" opacity=".45"/><path d="M11 13.5c0.5-3.5 3-5.5 6-5.5s5.5 2 6 5.5z" fill="#434b33"/><path d="M11 17h20v2.5h-8c-1.5 3-3.5 4.5-6 4.5-3.5 0-6-3-6-7z" fill="#434b33"/><path d="M2.1 30.9A19 7 -47 0 1 28.9 3.1" fill="none" stroke="#f3c41e" stroke-width="2.3"/></svg>
<svg style="position:absolute;left:130px;top:1047px" width="28" height="28" viewBox="0 0 28 28"><path d="M2 6h8l2 2h14v17H2z" fill="#f0c850"/><rect x="2" y="10" width="24" height="15" fill="#f8dc80"/><rect x="7" y="15" width="14" height="10" fill="#5ab0e0"/><rect x="9" y="17" width="10" height="8" fill="#fff" opacity=".6"/><rect x="4" y="3" width="6" height="3" fill="#d44"/><rect x="11" y="3" width="6" height="3" fill="#4a4"/></svg>
<svg style="position:absolute;left:191px;top:1046px" width="28" height="28" viewBox="0 0 28 28"><circle cx="14" cy="14" r="13" fill="#db4437"/><path d="M14 14L2.7 20.5A13 13 0 0 0 14 27h0l6.5-11.3z" fill="#0f9d58"/><path d="M14 14h13A13 13 0 0 1 14 27z" fill="#f4b400"/><path d="M14 14L2.7 20.5A13 13 0 0 1 2 10L14 14z" fill="#0f9d58"/><circle cx="14" cy="14" r="6" fill="#fff"/><circle cx="14" cy="14" r="4.6" fill="#4285f4"/></svg>
<svg style="position:absolute;left:252px;top:1046px" width="28" height="28" viewBox="0 0 28 28"><circle cx="14" cy="14" r="13" fill="#1ed760"/><path d="M7 10c5-2 10-1.5 14 1M8 14c4-1.5 8-1 11 1M9 18c3-1 6-.8 8 .8" stroke="#000" stroke-width="2" fill="none" stroke-linecap="round"/></svg>
<div style="left:314px;top:1045px;width:30px;height:30px;background:#f4f4f4;border-radius:2px"></div>
<div style="left:320px;top:1051px;width:5px;height:5px;background:#e84a2a"></div>
<div style="left:327px;top:1051px;width:5px;height:5px;background:#e84a2a"></div>
<div style="left:334px;top:1051px;width:5px;height:5px;background:#e84a2a"></div>
<div style="left:320px;top:1058px;width:5px;height:5px;background:#2a9a4a"></div>
<div style="left:327px;top:1058px;width:5px;height:5px;background:#f0a020"></div>
<div style="left:334px;top:1058px;width:5px;height:5px;background:#2a7ae0"></div>
<div style="left:320px;top:1065px;width:5px;height:5px;background:#2a7ae0"></div>
<div style="left:327px;top:1065px;width:5px;height:5px;background:#f0a020"></div>
<div style="left:334px;top:1065px;width:5px;height:5px;background:#2a9a4a"></div>
<svg style="position:absolute;left:374px;top:1046px" width="28" height="28" viewBox="0 0 28 28"><path d="M3 16c0-8 8-12 14-10 5 2 4 6 1 6s-4 4-1 6c2 2-2 6-7 5-5-1-7-3-7-7z" fill="#e8e0d0" stroke="#888"/><circle cx="8" cy="12" r="2" fill="#e33"/><circle cx="12" cy="9" r="2" fill="#3a3"/><circle cx="8" cy="18" r="2" fill="#33e"/><path d="M16 22l10-18" stroke="#f0a020" stroke-width="2.5"/></svg>
<svg style="position:absolute;left:437px;top:1047px" width="28" height="28" viewBox="0 0 28 28"><rect x="1" y="2" width="26" height="22" fill="#fff" stroke="#567"/><rect x="3" y="6" width="13" height="15" fill="#4a9a6a"/><path d="M18 7h7M18 10h7M18 13h7" stroke="#567"/><rect x="22" y="8" width="2" height="10" fill="#2a6ac0"/></svg>
<svg style="position:absolute;left:500px;top:1046px" width="28" height="28" viewBox="0 0 28 28"><rect x="11" y="4" width="15" height="20" fill="#fff" stroke="#c43e1c"/><path d="M14 9h9M14 12h9M14 15h9" stroke="#c43e1c"/><path d="M1 4l16-3v26L1 24z" fill="#d24726"/><text x="4" y="19" font-family="Liberation Sans" font-weight="bold" font-size="12" fill="#fff">P</text></svg>
<svg style="position:absolute;left:563px;top:1046px" width="28" height="28" viewBox="0 0 28 28"><rect x="2" y="2" width="22" height="25" fill="#1a8a3a"/><rect x="20" y="4" width="4" height="22" fill="#d44"/><text x="7" y="24" font-family="Liberation Sans" font-weight="bold" font-size="14" fill="#fff">S</text><path d="M5 8c2-3 4-3 5 0" stroke="#fff" fill="none"/></svg>
<svg style="position:absolute;left:624px;top:1045px" width="30" height="30" viewBox="0 0 30 30"><circle cx="14" cy="14" r="13" fill="#0a4a9a"/><circle cx="14" cy="14" r="10" fill="#2aa0d0"/><path d="M17 6c4 2 6 6 4 10-3 0-3-4-5-5z" fill="#3aa03a"/><circle cx="12" cy="12" r="6" fill="#cfeefa" stroke="#222" stroke-width="1.2"/><path d="M16.5 16.5l8 8" stroke="#d08030" stroke-width="3"/></svg>
<svg style="position:absolute;left:1701px;top:1058px" width="10" height="6"><path d="M0 5.5L5 0.5 10 5.5z" fill="#fff"/></svg>
<svg style="position:absolute;left:1722px;top:1053px" width="16" height="16" viewBox="0 0 16 16"><path d="M0 2l6-1v6H0zM7 1l8-1v7H7zM0 8h6v6l-6-1zM7 8h8v7l-8-1z" fill="#fff"/></svg>
<svg style="position:absolute;left:1746px;top:1052px" width="17" height="18" viewBox="0 0 17 18"><path d="M1 1v16" stroke="#fff" stroke-width="1.2"/><path d="M2 2h6l1 2h4v6H8l-1-2H2z" fill="#fff"/><circle cx="11" cy="13" r="4" fill="#434b33" stroke="#fff" stroke-width="1.3"/><path d="M11 11v2h2" stroke="#fff"/></svg>
<svg style="position:absolute;left:1770px;top:1052px" width="17" height="18" viewBox="0 0 17 18"><path d="M3 1v3M6 1v3" stroke="#fff" stroke-width="1.2"/><rect x="2" y="4" width="5" height="5" fill="#fff"/><path d="M4.5 9v7" stroke="#fff" stroke-width="2"/><rect x="9.5" y="2.5" width="6" height="13" rx="1" fill="none" stroke="#fff" stroke-width="1.3"/><rect x="11" y="5" width="3" height="9" fill="#fff"/></svg>
<svg style="position:absolute;left:1794px;top:1053px" width="16" height="16" viewBox="0 0 16 16"><rect x="1" y="12" width="2" height="3" fill="#fff"/><rect x="5" y="9" width="2" height="6" fill="#fff"/><rect x="9" y="6" width="2" height="9" fill="#fff"/><rect x="13" y="3" width="2" height="12" fill="#fff"/></svg>
<svg style="position:absolute;left:1817px;top:1052px" width="18" height="18" viewBox="0 0 18 18"><path d="M1 6h4l5-4v14l-5-4H1z" fill="#fff"/><path d="M12 5c1.5 2 1.5 6 0 8M14.5 3c2.5 3 2.5 9 0 12" stroke="#fff" stroke-width="1.2" fill="none"/></svg>
<div class="t" style="left:1855px;top:1047px;font-size:11.7px;color:#fff;">9:26 AM</div>
<div class="t" style="left:1853px;top:1064px;font-size:11.65px;color:#fff;">5/3/2016</div>
</body></html>
